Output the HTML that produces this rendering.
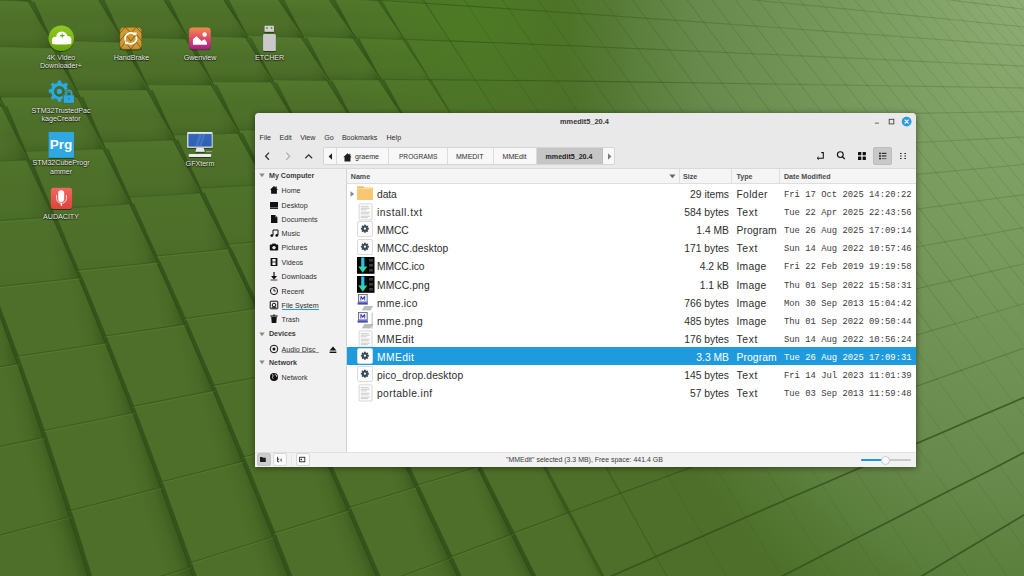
<!DOCTYPE html>
<html><head><meta charset="utf-8">
<style>
*{box-sizing:border-box;margin:0;padding:0}
html,body{width:1024px;height:576px;overflow:hidden;font-family:"Liberation Sans",sans-serif;}
body{position:relative;background:#4c7129;}
#bg{position:absolute;left:0;top:0;width:1024px;height:576px}
.dico{position:absolute}
.dl{position:absolute;width:90px;text-align:center;color:#f0f0ec;font-size:7.1px;line-height:8.6px;text-shadow:0 0 1.5px rgba(0,0,0,.9),0 1px 1px rgba(0,0,0,.7)}
#win{position:absolute;left:255.4px;top:113px;width:660.6px;height:354px;background:#e9e9e9;border-radius:3.5px 3.5px 0 0;box-shadow:0 1px 6px rgba(0,0,0,.45);overflow:hidden}
.t{position:absolute;white-space:pre;color:#2e2e2e;font-size:7.1px;line-height:10px}
.b{font-weight:bold}
#side{position:absolute;left:-0.6px;top:55px;width:90.6px;height:284px;background:#f1f1f1;border-top:1px solid #dadada}
#list{position:absolute;left:90px;top:55px;width:570px;height:284px;background:#fff;border-left:1px solid #d4d4d4;border-top:1px solid #dadada}
#hdr{position:absolute;left:0;top:0;width:570px;height:15px;background:#f5f5f5;border-bottom:1px solid #dedede}
.hs{position:absolute;top:0;width:1px;height:14px;background:#dddddd}
.ht{position:absolute;top:2.7px;white-space:pre;color:#4a4a4a;font-size:7.1px;line-height:10px;font-weight:bold}
.row{position:absolute;left:0;width:569px;height:18px}
.row.sel{background:#1f9bdd}
.row.sel .ft{color:#fff}
.ft{position:absolute;white-space:pre;color:#2e2e2e;font-size:10.3px;line-height:18px;top:2px}
.fn{left:30px}
.fs{right:187px;text-align:right}
.fty{left:389.5px}
.fd{left:437px}
.mono{font-family:"Liberation Mono",monospace;font-size:8.87px;color:#3c3c3c}
.ic{position:absolute;left:10.2px;top:1px;width:18px;height:18px}
.ic svg{position:absolute;left:0;top:0}
.exp{position:absolute;left:3px;top:6.5px}
#status{position:absolute;left:-0.6px;top:339px;width:660.6px;height:15px;background:#f2f2f2;border-top:1px solid #e0e0e0}
.pseg{position:absolute;top:0;height:17.6px;border-right:1px solid #dcdcdc;}
.si{position:absolute;left:14px;width:10px;height:10px}
.st{position:absolute;left:26.2px;white-space:pre;color:#2e2e2e;font-size:7.1px;line-height:10px}
.sh{position:absolute;left:13.6px;white-space:pre;color:#3a3a3a;font-size:7.1px;line-height:10px;font-weight:bold}
.tri{position:absolute;left:4px}
.sbtn{position:absolute;top:0.2px;width:14px;height:13px;border-radius:2px;background:#fafafa;border:1px solid #d8d8d8}
</style></head><body>
<svg id="bg" width="1024" height="576" viewBox="0 0 1024 576" style="position:absolute;left:0;top:0">
<defs>
<radialGradient id="lg1" cx="0" cy="0" r="1" gradientUnits="userSpaceOnUse" gradientTransform="translate(1030 -30) scale(470 720)">
<stop offset="0" stop-color="#8fae77"/>
<stop offset="0.4" stop-color="#789a5c"/>
<stop offset="0.72" stop-color="#67894b"/>
<stop offset="0.84" stop-color="#5f8342" stop-opacity="0.8"/>
<stop offset="0.94" stop-color="#597e3a" stop-opacity="0.4"/>
<stop offset="1" stop-color="#557a35" stop-opacity="0"/>
</radialGradient>
<radialGradient id="lg2" cx="470" cy="10" r="160" gradientUnits="userSpaceOnUse">
<stop offset="0" stop-color="#4d7d22" stop-opacity="0.8"/>
<stop offset="1" stop-color="#4d7d22" stop-opacity="0"/>
</radialGradient>
</defs>
<rect width="1024" height="576" fill="#4d6f29"/>
<rect width="1024" height="576" fill="url(#lg2)"/>
<rect width="1024" height="576" fill="url(#lg1)"/>

<defs><linearGradient id="s1" gradientUnits="userSpaceOnUse" x1="-33.6" y1="648.8" x2="-9.0" y2="640.5"><stop offset="0" stop-color="#223a0e" stop-opacity="0"/><stop offset="0.55" stop-color="#223a0e" stop-opacity="0.10"/><stop offset="1" stop-color="#223a0e" stop-opacity="0.42"/></linearGradient><linearGradient id="s2" gradientUnits="userSpaceOnUse" x1="-57.9" y1="556.0" x2="-32.8" y2="549.1"><stop offset="0" stop-color="#223a0e" stop-opacity="0"/><stop offset="0.55" stop-color="#223a0e" stop-opacity="0.10"/><stop offset="1" stop-color="#223a0e" stop-opacity="0.42"/></linearGradient><linearGradient id="s3" gradientUnits="userSpaceOnUse" x1="98.9" y1="701.8" x2="123.1" y2="692.2"><stop offset="0" stop-color="#223a0e" stop-opacity="0"/><stop offset="0.55" stop-color="#223a0e" stop-opacity="0.10"/><stop offset="1" stop-color="#223a0e" stop-opacity="0.42"/></linearGradient><linearGradient id="s4" gradientUnits="userSpaceOnUse" x1="71.4" y1="609.8" x2="96.1" y2="601.7"><stop offset="0" stop-color="#223a0e" stop-opacity="0"/><stop offset="0.55" stop-color="#223a0e" stop-opacity="0.10"/><stop offset="1" stop-color="#223a0e" stop-opacity="0.42"/></linearGradient><linearGradient id="s5" gradientUnits="userSpaceOnUse" x1="44.4" y1="523.3" x2="69.5" y2="516.7"><stop offset="0" stop-color="#223a0e" stop-opacity="0"/><stop offset="0.55" stop-color="#223a0e" stop-opacity="0.10"/><stop offset="1" stop-color="#223a0e" stop-opacity="0.42"/></linearGradient><linearGradient id="s6" gradientUnits="userSpaceOnUse" x1="17.9" y1="442.7" x2="43.3" y2="437.4"><stop offset="0" stop-color="#223a0e" stop-opacity="0"/><stop offset="0.55" stop-color="#223a0e" stop-opacity="0.10"/><stop offset="1" stop-color="#223a0e" stop-opacity="0.42"/></linearGradient><linearGradient id="s7" gradientUnits="userSpaceOnUse" x1="-8.1" y1="367.9" x2="17.6" y2="363.9"><stop offset="0" stop-color="#223a0e" stop-opacity="0"/><stop offset="0.55" stop-color="#223a0e" stop-opacity="0.10"/><stop offset="1" stop-color="#223a0e" stop-opacity="0.42"/></linearGradient><linearGradient id="s8" gradientUnits="userSpaceOnUse" x1="-33.6" y1="298.3" x2="-7.8" y2="295.5"><stop offset="0" stop-color="#223a0e" stop-opacity="0"/><stop offset="0.55" stop-color="#223a0e" stop-opacity="0.10"/><stop offset="1" stop-color="#223a0e" stop-opacity="0.42"/></linearGradient><linearGradient id="s9" gradientUnits="userSpaceOnUse" x1="-58.6" y1="233.7" x2="-32.7" y2="231.8"><stop offset="0" stop-color="#223a0e" stop-opacity="0"/><stop offset="0.55" stop-color="#223a0e" stop-opacity="0.10"/><stop offset="1" stop-color="#223a0e" stop-opacity="0.42"/></linearGradient><linearGradient id="s10" gradientUnits="userSpaceOnUse" x1="194.8" y1="661.3" x2="219.0" y2="651.9"><stop offset="0" stop-color="#223a0e" stop-opacity="0"/><stop offset="0.55" stop-color="#223a0e" stop-opacity="0.10"/><stop offset="1" stop-color="#223a0e" stop-opacity="0.42"/></linearGradient><linearGradient id="s11" gradientUnits="userSpaceOnUse" x1="164.8" y1="575.1" x2="189.5" y2="567.1"><stop offset="0" stop-color="#223a0e" stop-opacity="0"/><stop offset="0.55" stop-color="#223a0e" stop-opacity="0.10"/><stop offset="1" stop-color="#223a0e" stop-opacity="0.42"/></linearGradient><linearGradient id="s12" gradientUnits="userSpaceOnUse" x1="135.5" y1="493.8" x2="160.7" y2="487.3"><stop offset="0" stop-color="#223a0e" stop-opacity="0"/><stop offset="0.55" stop-color="#223a0e" stop-opacity="0.10"/><stop offset="1" stop-color="#223a0e" stop-opacity="0.42"/></linearGradient><linearGradient id="s13" gradientUnits="userSpaceOnUse" x1="107.2" y1="417.8" x2="132.7" y2="412.7"><stop offset="0" stop-color="#223a0e" stop-opacity="0"/><stop offset="0.55" stop-color="#223a0e" stop-opacity="0.10"/><stop offset="1" stop-color="#223a0e" stop-opacity="0.42"/></linearGradient><linearGradient id="s14" gradientUnits="userSpaceOnUse" x1="79.6" y1="346.9" x2="105.3" y2="343.0"><stop offset="0" stop-color="#223a0e" stop-opacity="0"/><stop offset="0.55" stop-color="#223a0e" stop-opacity="0.10"/><stop offset="1" stop-color="#223a0e" stop-opacity="0.42"/></linearGradient><linearGradient id="s15" gradientUnits="userSpaceOnUse" x1="52.8" y1="280.7" x2="78.7" y2="277.9"><stop offset="0" stop-color="#223a0e" stop-opacity="0"/><stop offset="0.55" stop-color="#223a0e" stop-opacity="0.10"/><stop offset="1" stop-color="#223a0e" stop-opacity="0.42"/></linearGradient><linearGradient id="s16" gradientUnits="userSpaceOnUse" x1="26.8" y1="218.8" x2="52.7" y2="217.1"><stop offset="0" stop-color="#223a0e" stop-opacity="0"/><stop offset="0.55" stop-color="#223a0e" stop-opacity="0.10"/><stop offset="1" stop-color="#223a0e" stop-opacity="0.42"/></linearGradient><linearGradient id="s17" gradientUnits="userSpaceOnUse" x1="1.4" y1="160.9" x2="27.3" y2="160.0"><stop offset="0" stop-color="#223a0e" stop-opacity="0"/><stop offset="0.55" stop-color="#223a0e" stop-opacity="0.10"/><stop offset="1" stop-color="#223a0e" stop-opacity="0.42"/></linearGradient><linearGradient id="s18" gradientUnits="userSpaceOnUse" x1="-23.5" y1="106.5" x2="2.5" y2="106.3"><stop offset="0" stop-color="#223a0e" stop-opacity="0"/><stop offset="0.55" stop-color="#223a0e" stop-opacity="0.10"/><stop offset="1" stop-color="#223a0e" stop-opacity="0.42"/></linearGradient><linearGradient id="s19" gradientUnits="userSpaceOnUse" x1="-47.7" y1="55.2" x2="-21.7" y2="55.6"><stop offset="0" stop-color="#223a0e" stop-opacity="0"/><stop offset="0.55" stop-color="#223a0e" stop-opacity="0.10"/><stop offset="1" stop-color="#223a0e" stop-opacity="0.42"/></linearGradient><linearGradient id="s20" gradientUnits="userSpaceOnUse" x1="313.0" y1="711.1" x2="336.6" y2="700.4"><stop offset="0" stop-color="#223a0e" stop-opacity="0"/><stop offset="0.55" stop-color="#223a0e" stop-opacity="0.10"/><stop offset="1" stop-color="#223a0e" stop-opacity="0.42"/></linearGradient><linearGradient id="s21" gradientUnits="userSpaceOnUse" x1="280.0" y1="625.8" x2="304.3" y2="616.5"><stop offset="0" stop-color="#223a0e" stop-opacity="0"/><stop offset="0.55" stop-color="#223a0e" stop-opacity="0.10"/><stop offset="1" stop-color="#223a0e" stop-opacity="0.42"/></linearGradient><linearGradient id="s22" gradientUnits="userSpaceOnUse" x1="248.1" y1="544.5" x2="272.9" y2="536.7"><stop offset="0" stop-color="#223a0e" stop-opacity="0"/><stop offset="0.55" stop-color="#223a0e" stop-opacity="0.10"/><stop offset="1" stop-color="#223a0e" stop-opacity="0.42"/></linearGradient><linearGradient id="s23" gradientUnits="userSpaceOnUse" x1="217.4" y1="467.7" x2="242.4" y2="461.4"><stop offset="0" stop-color="#223a0e" stop-opacity="0"/><stop offset="0.55" stop-color="#223a0e" stop-opacity="0.10"/><stop offset="1" stop-color="#223a0e" stop-opacity="0.42"/></linearGradient><linearGradient id="s24" gradientUnits="userSpaceOnUse" x1="188.2" y1="395.5" x2="213.0" y2="390.7"><stop offset="0" stop-color="#223a0e" stop-opacity="0"/><stop offset="0.55" stop-color="#223a0e" stop-opacity="0.10"/><stop offset="1" stop-color="#223a0e" stop-opacity="0.42"/></linearGradient><linearGradient id="s25" gradientUnits="userSpaceOnUse" x1="159.9" y1="327.9" x2="184.4" y2="324.4"><stop offset="0" stop-color="#223a0e" stop-opacity="0"/><stop offset="0.55" stop-color="#223a0e" stop-opacity="0.10"/><stop offset="1" stop-color="#223a0e" stop-opacity="0.42"/></linearGradient><linearGradient id="s26" gradientUnits="userSpaceOnUse" x1="132.4" y1="264.7" x2="156.7" y2="262.2"><stop offset="0" stop-color="#223a0e" stop-opacity="0"/><stop offset="0.55" stop-color="#223a0e" stop-opacity="0.10"/><stop offset="1" stop-color="#223a0e" stop-opacity="0.42"/></linearGradient><linearGradient id="s27" gradientUnits="userSpaceOnUse" x1="105.7" y1="205.4" x2="129.9" y2="203.8"><stop offset="0" stop-color="#223a0e" stop-opacity="0"/><stop offset="0.55" stop-color="#223a0e" stop-opacity="0.10"/><stop offset="1" stop-color="#223a0e" stop-opacity="0.42"/></linearGradient><linearGradient id="s28" gradientUnits="userSpaceOnUse" x1="79.7" y1="149.6" x2="103.8" y2="148.9"><stop offset="0" stop-color="#223a0e" stop-opacity="0"/><stop offset="0.55" stop-color="#223a0e" stop-opacity="0.10"/><stop offset="1" stop-color="#223a0e" stop-opacity="0.42"/></linearGradient><linearGradient id="s29" gradientUnits="userSpaceOnUse" x1="54.3" y1="97.1" x2="78.4" y2="97.1"><stop offset="0" stop-color="#223a0e" stop-opacity="0"/><stop offset="0.55" stop-color="#223a0e" stop-opacity="0.10"/><stop offset="1" stop-color="#223a0e" stop-opacity="0.42"/></linearGradient><linearGradient id="s30" gradientUnits="userSpaceOnUse" x1="29.6" y1="47.5" x2="53.6" y2="48.0"><stop offset="0" stop-color="#223a0e" stop-opacity="0"/><stop offset="0.55" stop-color="#223a0e" stop-opacity="0.10"/><stop offset="1" stop-color="#223a0e" stop-opacity="0.42"/></linearGradient><linearGradient id="s31" gradientUnits="userSpaceOnUse" x1="5.4" y1="0.4" x2="29.4" y2="1.5"><stop offset="0" stop-color="#223a0e" stop-opacity="0"/><stop offset="0.55" stop-color="#223a0e" stop-opacity="0.10"/><stop offset="1" stop-color="#223a0e" stop-opacity="0.42"/></linearGradient><linearGradient id="s32" gradientUnits="userSpaceOnUse" x1="391.0" y1="675.2" x2="414.4" y2="664.7"><stop offset="0" stop-color="#223a0e" stop-opacity="0"/><stop offset="0.55" stop-color="#223a0e" stop-opacity="0.10"/><stop offset="1" stop-color="#223a0e" stop-opacity="0.42"/></linearGradient><linearGradient id="s33" gradientUnits="userSpaceOnUse" x1="357.5" y1="594.3" x2="380.5" y2="585.5"><stop offset="0" stop-color="#223a0e" stop-opacity="0"/><stop offset="0.55" stop-color="#223a0e" stop-opacity="0.10"/><stop offset="1" stop-color="#223a0e" stop-opacity="0.42"/></linearGradient><linearGradient id="s34" gradientUnits="userSpaceOnUse" x1="325.0" y1="517.2" x2="347.8" y2="510.2"><stop offset="0" stop-color="#223a0e" stop-opacity="0"/><stop offset="0.55" stop-color="#223a0e" stop-opacity="0.10"/><stop offset="1" stop-color="#223a0e" stop-opacity="0.42"/></linearGradient><linearGradient id="s35" gradientUnits="userSpaceOnUse" x1="293.6" y1="444.4" x2="316.2" y2="438.8"><stop offset="0" stop-color="#223a0e" stop-opacity="0"/><stop offset="0.55" stop-color="#223a0e" stop-opacity="0.10"/><stop offset="1" stop-color="#223a0e" stop-opacity="0.42"/></linearGradient><linearGradient id="s36" gradientUnits="userSpaceOnUse" x1="263.3" y1="375.9" x2="285.7" y2="371.6"><stop offset="0" stop-color="#223a0e" stop-opacity="0"/><stop offset="0.55" stop-color="#223a0e" stop-opacity="0.10"/><stop offset="1" stop-color="#223a0e" stop-opacity="0.42"/></linearGradient><linearGradient id="s37" gradientUnits="userSpaceOnUse" x1="234.0" y1="311.6" x2="256.3" y2="308.4"><stop offset="0" stop-color="#223a0e" stop-opacity="0"/><stop offset="0.55" stop-color="#223a0e" stop-opacity="0.10"/><stop offset="1" stop-color="#223a0e" stop-opacity="0.42"/></linearGradient><linearGradient id="s38" gradientUnits="userSpaceOnUse" x1="205.7" y1="251.1" x2="227.9" y2="248.9"><stop offset="0" stop-color="#223a0e" stop-opacity="0"/><stop offset="0.55" stop-color="#223a0e" stop-opacity="0.10"/><stop offset="1" stop-color="#223a0e" stop-opacity="0.42"/></linearGradient><linearGradient id="s39" gradientUnits="userSpaceOnUse" x1="178.3" y1="194.2" x2="200.4" y2="192.9"><stop offset="0" stop-color="#223a0e" stop-opacity="0"/><stop offset="0.55" stop-color="#223a0e" stop-opacity="0.10"/><stop offset="1" stop-color="#223a0e" stop-opacity="0.42"/></linearGradient><linearGradient id="s40" gradientUnits="userSpaceOnUse" x1="151.7" y1="140.5" x2="173.7" y2="139.9"><stop offset="0" stop-color="#223a0e" stop-opacity="0"/><stop offset="0.55" stop-color="#223a0e" stop-opacity="0.10"/><stop offset="1" stop-color="#223a0e" stop-opacity="0.42"/></linearGradient><linearGradient id="s41" gradientUnits="userSpaceOnUse" x1="125.9" y1="89.8" x2="147.9" y2="89.9"><stop offset="0" stop-color="#223a0e" stop-opacity="0"/><stop offset="0.55" stop-color="#223a0e" stop-opacity="0.10"/><stop offset="1" stop-color="#223a0e" stop-opacity="0.42"/></linearGradient><linearGradient id="s42" gradientUnits="userSpaceOnUse" x1="100.8" y1="41.7" x2="122.7" y2="42.4"><stop offset="0" stop-color="#223a0e" stop-opacity="0"/><stop offset="0.55" stop-color="#223a0e" stop-opacity="0.10"/><stop offset="1" stop-color="#223a0e" stop-opacity="0.42"/></linearGradient><linearGradient id="s43" gradientUnits="userSpaceOnUse" x1="76.3" y1="-3.9" x2="98.2" y2="-2.8"><stop offset="0" stop-color="#223a0e" stop-opacity="0"/><stop offset="0.55" stop-color="#223a0e" stop-opacity="0.10"/><stop offset="1" stop-color="#223a0e" stop-opacity="0.42"/></linearGradient><linearGradient id="s44" gradientUnits="userSpaceOnUse" x1="463.0" y1="642.5" x2="484.0" y2="633.1"><stop offset="0" stop-color="#223a0e" stop-opacity="0"/><stop offset="0.55" stop-color="#223a0e" stop-opacity="0.10"/><stop offset="1" stop-color="#223a0e" stop-opacity="0.42"/></linearGradient><linearGradient id="s45" gradientUnits="userSpaceOnUse" x1="428.4" y1="566.1" x2="449.2" y2="558.4"><stop offset="0" stop-color="#223a0e" stop-opacity="0"/><stop offset="0.55" stop-color="#223a0e" stop-opacity="0.10"/><stop offset="1" stop-color="#223a0e" stop-opacity="0.42"/></linearGradient><linearGradient id="s46" gradientUnits="userSpaceOnUse" x1="395.0" y1="493.4" x2="415.6" y2="487.1"><stop offset="0" stop-color="#223a0e" stop-opacity="0"/><stop offset="0.55" stop-color="#223a0e" stop-opacity="0.10"/><stop offset="1" stop-color="#223a0e" stop-opacity="0.42"/></linearGradient><linearGradient id="s47" gradientUnits="userSpaceOnUse" x1="331.8" y1="359.4" x2="352.1" y2="355.6"><stop offset="0" stop-color="#223a0e" stop-opacity="0"/><stop offset="0.55" stop-color="#223a0e" stop-opacity="0.10"/><stop offset="1" stop-color="#223a0e" stop-opacity="0.42"/></linearGradient><linearGradient id="s48" gradientUnits="userSpaceOnUse" x1="301.9" y1="298.0" x2="322.2" y2="295.2"><stop offset="0" stop-color="#223a0e" stop-opacity="0"/><stop offset="0.55" stop-color="#223a0e" stop-opacity="0.10"/><stop offset="1" stop-color="#223a0e" stop-opacity="0.42"/></linearGradient><linearGradient id="s49" gradientUnits="userSpaceOnUse" x1="273.0" y1="240.2" x2="293.2" y2="238.2"><stop offset="0" stop-color="#223a0e" stop-opacity="0"/><stop offset="0.55" stop-color="#223a0e" stop-opacity="0.10"/><stop offset="1" stop-color="#223a0e" stop-opacity="0.42"/></linearGradient><linearGradient id="s50" gradientUnits="userSpaceOnUse" x1="245.1" y1="185.5" x2="265.3" y2="184.4"><stop offset="0" stop-color="#223a0e" stop-opacity="0"/><stop offset="0.55" stop-color="#223a0e" stop-opacity="0.10"/><stop offset="1" stop-color="#223a0e" stop-opacity="0.42"/></linearGradient><linearGradient id="s51" gradientUnits="userSpaceOnUse" x1="218.2" y1="133.9" x2="238.3" y2="133.4"><stop offset="0" stop-color="#223a0e" stop-opacity="0"/><stop offset="0.55" stop-color="#223a0e" stop-opacity="0.10"/><stop offset="1" stop-color="#223a0e" stop-opacity="0.42"/></linearGradient><linearGradient id="s52" gradientUnits="userSpaceOnUse" x1="192.0" y1="84.9" x2="212.2" y2="85.0"><stop offset="0" stop-color="#223a0e" stop-opacity="0"/><stop offset="0.55" stop-color="#223a0e" stop-opacity="0.10"/><stop offset="1" stop-color="#223a0e" stop-opacity="0.42"/></linearGradient><linearGradient id="s53" gradientUnits="userSpaceOnUse" x1="166.7" y1="38.3" x2="186.8" y2="39.0"><stop offset="0" stop-color="#223a0e" stop-opacity="0"/><stop offset="0.55" stop-color="#223a0e" stop-opacity="0.10"/><stop offset="1" stop-color="#223a0e" stop-opacity="0.42"/></linearGradient><linearGradient id="s54" gradientUnits="userSpaceOnUse" x1="142.0" y1="-5.9" x2="162.1" y2="-4.8"><stop offset="0" stop-color="#223a0e" stop-opacity="0"/><stop offset="0.55" stop-color="#223a0e" stop-opacity="0.10"/><stop offset="1" stop-color="#223a0e" stop-opacity="0.42"/></linearGradient><linearGradient id="s55" gradientUnits="userSpaceOnUse" x1="565.0" y1="687.8" x2="583.1" y2="678.4"><stop offset="0" stop-color="#223a0e" stop-opacity="0"/><stop offset="0.55" stop-color="#223a0e" stop-opacity="0.10"/><stop offset="1" stop-color="#223a0e" stop-opacity="0.40"/></linearGradient><linearGradient id="s56" gradientUnits="userSpaceOnUse" x1="527.7" y1="613.4" x2="546.5" y2="605.0"><stop offset="0" stop-color="#223a0e" stop-opacity="0"/><stop offset="0.55" stop-color="#223a0e" stop-opacity="0.10"/><stop offset="1" stop-color="#223a0e" stop-opacity="0.42"/></linearGradient><linearGradient id="s57" gradientUnits="userSpaceOnUse" x1="492.5" y1="541.4" x2="511.2" y2="534.4"><stop offset="0" stop-color="#223a0e" stop-opacity="0"/><stop offset="0.55" stop-color="#223a0e" stop-opacity="0.10"/><stop offset="1" stop-color="#223a0e" stop-opacity="0.42"/></linearGradient><linearGradient id="s58" gradientUnits="userSpaceOnUse" x1="458.6" y1="472.6" x2="477.3" y2="466.9"><stop offset="0" stop-color="#223a0e" stop-opacity="0"/><stop offset="0.55" stop-color="#223a0e" stop-opacity="0.10"/><stop offset="1" stop-color="#223a0e" stop-opacity="0.42"/></linearGradient><linearGradient id="s59" gradientUnits="userSpaceOnUse" x1="307.0" y1="179.0" x2="325.5" y2="178.0"><stop offset="0" stop-color="#223a0e" stop-opacity="0"/><stop offset="0.55" stop-color="#223a0e" stop-opacity="0.10"/><stop offset="1" stop-color="#223a0e" stop-opacity="0.42"/></linearGradient><linearGradient id="s60" gradientUnits="userSpaceOnUse" x1="279.8" y1="129.2" x2="298.3" y2="128.8"><stop offset="0" stop-color="#223a0e" stop-opacity="0"/><stop offset="0.55" stop-color="#223a0e" stop-opacity="0.10"/><stop offset="1" stop-color="#223a0e" stop-opacity="0.42"/></linearGradient><linearGradient id="s61" gradientUnits="userSpaceOnUse" x1="253.5" y1="81.9" x2="272.0" y2="82.1"><stop offset="0" stop-color="#223a0e" stop-opacity="0"/><stop offset="0.55" stop-color="#223a0e" stop-opacity="0.10"/><stop offset="1" stop-color="#223a0e" stop-opacity="0.42"/></linearGradient><linearGradient id="s62" gradientUnits="userSpaceOnUse" x1="228.0" y1="36.9" x2="246.5" y2="37.6"><stop offset="0" stop-color="#223a0e" stop-opacity="0"/><stop offset="0.55" stop-color="#223a0e" stop-opacity="0.10"/><stop offset="1" stop-color="#223a0e" stop-opacity="0.42"/></linearGradient><linearGradient id="s63" gradientUnits="userSpaceOnUse" x1="203.2" y1="-6.0" x2="221.7" y2="-4.9"><stop offset="0" stop-color="#223a0e" stop-opacity="0"/><stop offset="0.55" stop-color="#223a0e" stop-opacity="0.10"/><stop offset="1" stop-color="#223a0e" stop-opacity="0.42"/></linearGradient><linearGradient id="s64" gradientUnits="userSpaceOnUse" x1="631.0" y1="653.9" x2="640.5" y2="648.9"><stop offset="0" stop-color="#223a0e" stop-opacity="0"/><stop offset="0.55" stop-color="#223a0e" stop-opacity="0.06"/><stop offset="1" stop-color="#223a0e" stop-opacity="0.24"/></linearGradient><linearGradient id="s65" gradientUnits="userSpaceOnUse" x1="592.7" y1="584.5" x2="603.7" y2="579.6"><stop offset="0" stop-color="#223a0e" stop-opacity="0"/><stop offset="0.55" stop-color="#223a0e" stop-opacity="0.06"/><stop offset="1" stop-color="#223a0e" stop-opacity="0.27"/></linearGradient><linearGradient id="s66" gradientUnits="userSpaceOnUse" x1="555.7" y1="517.5" x2="568.1" y2="512.9"><stop offset="0" stop-color="#223a0e" stop-opacity="0"/><stop offset="0.55" stop-color="#223a0e" stop-opacity="0.07"/><stop offset="1" stop-color="#223a0e" stop-opacity="0.31"/></linearGradient><linearGradient id="s67" gradientUnits="userSpaceOnUse" x1="520.0" y1="453.2" x2="533.9" y2="449.0"><stop offset="0" stop-color="#223a0e" stop-opacity="0"/><stop offset="0.55" stop-color="#223a0e" stop-opacity="0.08"/><stop offset="1" stop-color="#223a0e" stop-opacity="0.34"/></linearGradient><linearGradient id="s68" gradientUnits="userSpaceOnUse" x1="337.0" y1="126.1" x2="354.1" y2="125.8"><stop offset="0" stop-color="#223a0e" stop-opacity="0"/><stop offset="0.55" stop-color="#223a0e" stop-opacity="0.10"/><stop offset="1" stop-color="#223a0e" stop-opacity="0.42"/></linearGradient><linearGradient id="s69" gradientUnits="userSpaceOnUse" x1="310.7" y1="80.4" x2="327.8" y2="80.6"><stop offset="0" stop-color="#223a0e" stop-opacity="0"/><stop offset="0.55" stop-color="#223a0e" stop-opacity="0.10"/><stop offset="1" stop-color="#223a0e" stop-opacity="0.42"/></linearGradient><linearGradient id="s70" gradientUnits="userSpaceOnUse" x1="285.1" y1="36.9" x2="302.2" y2="37.5"><stop offset="0" stop-color="#223a0e" stop-opacity="0"/><stop offset="0.55" stop-color="#223a0e" stop-opacity="0.10"/><stop offset="1" stop-color="#223a0e" stop-opacity="0.42"/></linearGradient><linearGradient id="s71" gradientUnits="userSpaceOnUse" x1="260.4" y1="-4.8" x2="277.5" y2="-3.7"><stop offset="0" stop-color="#223a0e" stop-opacity="0"/><stop offset="0.55" stop-color="#223a0e" stop-opacity="0.10"/><stop offset="1" stop-color="#223a0e" stop-opacity="0.42"/></linearGradient><linearGradient id="s72" gradientUnits="userSpaceOnUse" x1="689.9" y1="623.5" x2="692.4" y2="622.3"><stop offset="0" stop-color="#223a0e" stop-opacity="0"/><stop offset="0.55" stop-color="#223a0e" stop-opacity="0.02"/><stop offset="1" stop-color="#223a0e" stop-opacity="0.07"/></linearGradient><linearGradient id="s73" gradientUnits="userSpaceOnUse" x1="651.9" y1="558.3" x2="655.7" y2="556.7"><stop offset="0" stop-color="#223a0e" stop-opacity="0"/><stop offset="0.55" stop-color="#223a0e" stop-opacity="0.02"/><stop offset="1" stop-color="#223a0e" stop-opacity="0.10"/></linearGradient><linearGradient id="s74" gradientUnits="userSpaceOnUse" x1="615.2" y1="495.4" x2="620.3" y2="493.5"><stop offset="0" stop-color="#223a0e" stop-opacity="0"/><stop offset="0.55" stop-color="#223a0e" stop-opacity="0.03"/><stop offset="1" stop-color="#223a0e" stop-opacity="0.14"/></linearGradient><linearGradient id="s75" gradientUnits="userSpaceOnUse" x1="391.6" y1="123.9" x2="406.2" y2="123.6"><stop offset="0" stop-color="#223a0e" stop-opacity="0"/><stop offset="0.55" stop-color="#223a0e" stop-opacity="0.09"/><stop offset="1" stop-color="#223a0e" stop-opacity="0.39"/></linearGradient><linearGradient id="s76" gradientUnits="userSpaceOnUse" x1="363.9" y1="79.8" x2="379.7" y2="80.0"><stop offset="0" stop-color="#223a0e" stop-opacity="0"/><stop offset="0.55" stop-color="#223a0e" stop-opacity="0.10"/><stop offset="1" stop-color="#223a0e" stop-opacity="0.42"/></linearGradient><linearGradient id="s77" gradientUnits="userSpaceOnUse" x1="338.4" y1="37.7" x2="354.3" y2="38.3"><stop offset="0" stop-color="#223a0e" stop-opacity="0"/><stop offset="0.55" stop-color="#223a0e" stop-opacity="0.10"/><stop offset="1" stop-color="#223a0e" stop-opacity="0.42"/></linearGradient><linearGradient id="s78" gradientUnits="userSpaceOnUse" x1="313.7" y1="-2.7" x2="329.6" y2="-1.7"><stop offset="0" stop-color="#223a0e" stop-opacity="0"/><stop offset="0.55" stop-color="#223a0e" stop-opacity="0.10"/><stop offset="1" stop-color="#223a0e" stop-opacity="0.42"/></linearGradient><linearGradient id="s79" gradientUnits="userSpaceOnUse" x1="289.7" y1="-41.4" x2="305.6" y2="-40.0"><stop offset="0" stop-color="#223a0e" stop-opacity="0"/><stop offset="0.55" stop-color="#223a0e" stop-opacity="0.10"/><stop offset="1" stop-color="#223a0e" stop-opacity="0.42"/></linearGradient><linearGradient id="s80" gradientUnits="userSpaceOnUse" x1="447.6" y1="122.2" x2="455.3" y2="122.1"><stop offset="0" stop-color="#223a0e" stop-opacity="0"/><stop offset="0.55" stop-color="#223a0e" stop-opacity="0.05"/><stop offset="1" stop-color="#223a0e" stop-opacity="0.22"/></linearGradient><linearGradient id="s81" gradientUnits="userSpaceOnUse" x1="420.0" y1="79.8" x2="429.0" y2="80.0"><stop offset="0" stop-color="#223a0e" stop-opacity="0"/><stop offset="0.55" stop-color="#223a0e" stop-opacity="0.06"/><stop offset="1" stop-color="#223a0e" stop-opacity="0.26"/></linearGradient><linearGradient id="s82" gradientUnits="userSpaceOnUse" x1="393.2" y1="39.2" x2="403.5" y2="39.6"><stop offset="0" stop-color="#223a0e" stop-opacity="0"/><stop offset="0.55" stop-color="#223a0e" stop-opacity="0.07"/><stop offset="1" stop-color="#223a0e" stop-opacity="0.29"/></linearGradient><linearGradient id="s83" gradientUnits="userSpaceOnUse" x1="367.2" y1="0.1" x2="378.7" y2="0.8"><stop offset="0" stop-color="#223a0e" stop-opacity="0"/><stop offset="0.55" stop-color="#223a0e" stop-opacity="0.08"/><stop offset="1" stop-color="#223a0e" stop-opacity="0.33"/></linearGradient><linearGradient id="s84" gradientUnits="userSpaceOnUse" x1="341.9" y1="-37.6" x2="354.7" y2="-36.4"><stop offset="0" stop-color="#223a0e" stop-opacity="0"/><stop offset="0.55" stop-color="#223a0e" stop-opacity="0.09"/><stop offset="1" stop-color="#223a0e" stop-opacity="0.36"/></linearGradient><linearGradient id="s85" gradientUnits="userSpaceOnUse" x1="499.4" y1="120.9" x2="501.1" y2="120.9"><stop offset="0" stop-color="#223a0e" stop-opacity="0"/><stop offset="0.55" stop-color="#223a0e" stop-opacity="0.01"/><stop offset="1" stop-color="#223a0e" stop-opacity="0.05"/></linearGradient><linearGradient id="s86" gradientUnits="userSpaceOnUse" x1="472.1" y1="80.1" x2="475.0" y2="80.2"><stop offset="0" stop-color="#223a0e" stop-opacity="0"/><stop offset="0.55" stop-color="#223a0e" stop-opacity="0.02"/><stop offset="1" stop-color="#223a0e" stop-opacity="0.09"/></linearGradient><linearGradient id="s87" gradientUnits="userSpaceOnUse" x1="445.6" y1="40.9" x2="449.6" y2="41.1"><stop offset="0" stop-color="#223a0e" stop-opacity="0"/><stop offset="0.55" stop-color="#223a0e" stop-opacity="0.03"/><stop offset="1" stop-color="#223a0e" stop-opacity="0.12"/></linearGradient><linearGradient id="s88" gradientUnits="userSpaceOnUse" x1="419.8" y1="3.1" x2="425.0" y2="3.5"><stop offset="0" stop-color="#223a0e" stop-opacity="0"/><stop offset="0.55" stop-color="#223a0e" stop-opacity="0.04"/><stop offset="1" stop-color="#223a0e" stop-opacity="0.16"/></linearGradient><linearGradient id="s89" gradientUnits="userSpaceOnUse" x1="394.7" y1="-33.3" x2="401.2" y2="-32.7"><stop offset="0" stop-color="#223a0e" stop-opacity="0"/><stop offset="0.55" stop-color="#223a0e" stop-opacity="0.05"/><stop offset="1" stop-color="#223a0e" stop-opacity="0.20"/></linearGradient><linearGradient id="s90" gradientUnits="userSpaceOnUse" x1="443.9" y1="-29.1" x2="444.7" y2="-29.0"><stop offset="0" stop-color="#223a0e" stop-opacity="0"/><stop offset="0.55" stop-color="#223a0e" stop-opacity="0.01"/><stop offset="1" stop-color="#223a0e" stop-opacity="0.03"/></linearGradient><linearGradient id="tv" x1="0" y1="0" x2="0" y2="1"><stop offset="0" stop-color="#6a9a3a" stop-opacity="0.22"/><stop offset="0.5" stop-color="#6a9a3a" stop-opacity="0"/><stop offset="1" stop-color="#1f3a0a" stop-opacity="0.22"/></linearGradient></defs>
<polygon points="-33.6,648.8 -9.0,640.5 -32.8,549.1 -57.9,556.0" fill="url(#s1)"/>
<polygon points="-9.0,640.5 -5.4,639.2 -29.1,548.1 -32.8,549.1" fill="#33521a" fill-opacity="0.95"/>
<line x1="-9.0" y1="640.5" x2="-32.8" y2="549.1" stroke="#2c4a13" stroke-opacity="0.80" stroke-width="1"/>
<line x1="-126.4" y1="680.2" x2="-7.2" y2="639.8" stroke="#30501a" stroke-opacity="0.60" stroke-width="1.10"/>
<line x1="-126.4" y1="681.4" x2="-7.2" y2="641.0" stroke="#6a9a40" stroke-opacity="0.25" stroke-width="1"/>
<polygon points="-57.9,556.0 -32.8,549.1 -56.7,464.4 -82.1,469.8" fill="url(#s2)"/>
<polygon points="-32.8,549.1 -29.1,548.1 -52.9,463.6 -56.7,464.4" fill="#33521a" fill-opacity="0.95"/>
<line x1="-32.8" y1="549.1" x2="-56.7" y2="464.4" stroke="#2c4a13" stroke-opacity="0.80" stroke-width="1"/>
<line x1="-146.9" y1="580.2" x2="-31.0" y2="548.6" stroke="#30501a" stroke-opacity="0.60" stroke-width="1.10"/>
<line x1="-146.9" y1="581.4" x2="-31.0" y2="549.8" stroke="#6a9a40" stroke-opacity="0.25" stroke-width="1"/>
<polygon points="98.9,701.8 123.1,692.2 96.1,601.7 71.4,609.8" fill="url(#s3)"/>
<polygon points="123.1,692.2 126.6,690.8 99.7,600.5 96.1,601.7" fill="#33521a" fill-opacity="0.95"/>
<line x1="123.1" y1="692.2" x2="96.1" y2="601.7" stroke="#2c4a13" stroke-opacity="0.80" stroke-width="1"/>
<line x1="15.8" y1="734.8" x2="124.8" y2="691.5" stroke="#30501a" stroke-opacity="0.60" stroke-width="1.10"/>
<line x1="15.8" y1="736.0" x2="124.8" y2="692.7" stroke="#6a9a40" stroke-opacity="0.25" stroke-width="1"/>
<polygon points="71.4,609.8 96.1,601.7 69.5,516.7 44.4,523.3" fill="url(#s4)"/>
<polygon points="96.1,601.7 99.7,600.5 73.2,515.7 69.5,516.7" fill="#33521a" fill-opacity="0.95"/>
<line x1="96.1" y1="601.7" x2="69.5" y2="516.7" stroke="#2c4a13" stroke-opacity="0.80" stroke-width="1"/>
<line x1="-8.2" y1="636.0" x2="97.9" y2="601.1" stroke="#30501a" stroke-opacity="0.60" stroke-width="1.10"/>
<line x1="-8.2" y1="637.2" x2="97.9" y2="602.3" stroke="#6a9a40" stroke-opacity="0.25" stroke-width="1"/>
<polygon points="44.4,523.3 69.5,516.7 43.3,437.4 17.9,442.7" fill="url(#s5)"/>
<polygon points="69.5,516.7 73.2,515.7 47.1,436.7 43.3,437.4" fill="#33521a" fill-opacity="0.95"/>
<line x1="69.5" y1="516.7" x2="43.3" y2="437.4" stroke="#2c4a13" stroke-opacity="0.80" stroke-width="1"/>
<line x1="-32.3" y1="543.6" x2="71.4" y2="516.2" stroke="#30501a" stroke-opacity="0.60" stroke-width="1.10"/>
<line x1="-32.3" y1="544.8" x2="71.4" y2="517.4" stroke="#6a9a40" stroke-opacity="0.25" stroke-width="1"/>
<polygon points="17.9,442.7 43.3,437.4 17.6,363.9 -8.1,367.9" fill="url(#s6)"/>
<polygon points="43.3,437.4 47.1,436.7 21.3,363.3 17.6,363.9" fill="#33521a" fill-opacity="0.95"/>
<line x1="43.3" y1="437.4" x2="17.6" y2="363.9" stroke="#2c4a13" stroke-opacity="0.80" stroke-width="1"/>
<line x1="-56.5" y1="458.1" x2="45.2" y2="437.1" stroke="#30501a" stroke-opacity="0.60" stroke-width="1.10"/>
<line x1="-56.5" y1="459.3" x2="45.2" y2="438.3" stroke="#6a9a40" stroke-opacity="0.25" stroke-width="1"/>
<polygon points="-8.1,367.9 17.6,363.9 -7.8,295.5 -33.6,298.3" fill="url(#s7)"/>
<polygon points="17.6,363.9 21.3,363.3 -4.0,295.0 -7.8,295.5" fill="#33521a" fill-opacity="0.95"/>
<line x1="17.6" y1="363.9" x2="-7.8" y2="295.5" stroke="#2c4a13" stroke-opacity="0.80" stroke-width="1"/>
<line x1="-80.8" y1="379.2" x2="19.4" y2="363.6" stroke="#30501a" stroke-opacity="0.60" stroke-width="1.10"/>
<line x1="-80.8" y1="380.4" x2="19.4" y2="364.8" stroke="#6a9a40" stroke-opacity="0.25" stroke-width="1"/>
<polygon points="-33.6,298.3 -7.8,295.5 -32.7,231.8 -58.6,233.7" fill="url(#s8)"/>
<polygon points="-7.4,295.4 -4.4,295.1 -28.6,231.5 -32.9,231.8" fill="#33521a" fill-opacity="0.95"/>
<line x1="-7.4" y1="295.4" x2="-32.9" y2="231.8" stroke="#2c4a13" stroke-opacity="0.80" stroke-width="1"/>
<polygon points="-104.9,306.3 -5.9,295.2 -30.8,231.6 -128.9,238.8" fill="url(#tv)" fill-opacity="0.19"/>
<line x1="-104.9" y1="306.3" x2="-5.9" y2="295.2" stroke="#30501a" stroke-opacity="0.53" stroke-width="1.10"/>
<line x1="-104.9" y1="307.5" x2="-5.9" y2="296.4" stroke="#6a9a40" stroke-opacity="0.25" stroke-width="1"/>
<polygon points="-58.6,233.7 -32.7,231.8 -57.1,172.3 -83.1,173.3" fill="url(#s9)"/>
<polygon points="-31.8,231.7 -29.7,231.5 -52.7,172.1 -57.7,172.3" fill="#33521a" fill-opacity="0.95"/>
<line x1="-31.8" y1="231.7" x2="-57.7" y2="172.3" stroke="#2c4a13" stroke-opacity="0.80" stroke-width="1"/>
<polygon points="-128.9,238.8 -30.8,231.6 -55.2,172.2 -152.7,176.2" fill="url(#tv)" fill-opacity="0.44"/>
<line x1="-128.9" y1="238.8" x2="-30.8" y2="231.6" stroke="#30501a" stroke-opacity="0.44" stroke-width="1.10"/>
<line x1="-128.9" y1="240.0" x2="-30.8" y2="232.8" stroke="#6a9a40" stroke-opacity="0.25" stroke-width="1"/>
<polygon points="194.8,661.3 219.0,651.9 189.5,567.1 164.8,575.1" fill="url(#s10)"/>
<polygon points="219.0,651.9 222.6,650.5 193.1,566.0 189.5,567.1" fill="#33521a" fill-opacity="0.95"/>
<line x1="219.0" y1="651.9" x2="189.5" y2="567.1" stroke="#2c4a13" stroke-opacity="0.80" stroke-width="1"/>
<line x1="124.1" y1="688.9" x2="220.8" y2="651.2" stroke="#30501a" stroke-opacity="0.60" stroke-width="1.10"/>
<line x1="124.1" y1="690.1" x2="220.8" y2="652.4" stroke="#6a9a40" stroke-opacity="0.25" stroke-width="1"/>
<polygon points="164.8,575.1 189.5,567.1 160.7,487.3 135.5,493.8" fill="url(#s11)"/>
<polygon points="189.5,567.1 193.1,566.0 164.4,486.4 160.7,487.3" fill="#33521a" fill-opacity="0.95"/>
<line x1="189.5" y1="567.1" x2="160.7" y2="487.3" stroke="#2c4a13" stroke-opacity="0.80" stroke-width="1"/>
<line x1="96.7" y1="597.0" x2="191.3" y2="566.5" stroke="#30501a" stroke-opacity="0.60" stroke-width="1.10"/>
<line x1="96.7" y1="598.2" x2="191.3" y2="567.7" stroke="#6a9a40" stroke-opacity="0.25" stroke-width="1"/>
<polygon points="135.5,493.8 160.7,487.3 132.7,412.7 107.2,417.8" fill="url(#s12)"/>
<polygon points="160.7,487.3 164.4,486.4 136.4,411.9 132.7,412.7" fill="#33521a" fill-opacity="0.95"/>
<line x1="160.7" y1="487.3" x2="132.7" y2="412.7" stroke="#2c4a13" stroke-opacity="0.80" stroke-width="1"/>
<line x1="69.6" y1="510.8" x2="162.6" y2="486.9" stroke="#30501a" stroke-opacity="0.60" stroke-width="1.10"/>
<line x1="69.6" y1="512.0" x2="162.6" y2="488.1" stroke="#6a9a40" stroke-opacity="0.25" stroke-width="1"/>
<polygon points="107.2,417.8 132.7,412.7 105.3,343.0 79.6,346.9" fill="url(#s13)"/>
<polygon points="132.7,412.7 136.4,411.9 109.1,342.4 105.3,343.0" fill="#33521a" fill-opacity="0.95"/>
<line x1="132.7" y1="412.7" x2="105.3" y2="343.0" stroke="#2c4a13" stroke-opacity="0.80" stroke-width="1"/>
<line x1="43.0" y1="430.7" x2="134.5" y2="412.3" stroke="#30501a" stroke-opacity="0.60" stroke-width="1.10"/>
<line x1="43.0" y1="431.9" x2="134.5" y2="413.5" stroke="#6a9a40" stroke-opacity="0.25" stroke-width="1"/>
<polygon points="79.6,346.9 105.3,343.0 78.7,277.9 52.8,280.7" fill="url(#s14)"/>
<polygon points="105.3,343.0 109.1,342.4 82.5,277.5 78.7,277.9" fill="#33521a" fill-opacity="0.95"/>
<line x1="105.3" y1="343.0" x2="78.7" y2="277.9" stroke="#2c4a13" stroke-opacity="0.80" stroke-width="1"/>
<line x1="16.8" y1="356.3" x2="107.2" y2="342.7" stroke="#30501a" stroke-opacity="0.60" stroke-width="1.10"/>
<line x1="16.8" y1="357.5" x2="107.2" y2="343.9" stroke="#6a9a40" stroke-opacity="0.25" stroke-width="1"/>
<polygon points="52.8,280.7 78.7,277.9 52.7,217.1 26.8,218.8" fill="url(#s15)"/>
<polygon points="79.1,277.9 82.0,277.6 56.8,216.8 52.4,217.1" fill="#33521a" fill-opacity="0.95"/>
<line x1="79.1" y1="277.9" x2="52.4" y2="217.1" stroke="#2c4a13" stroke-opacity="0.80" stroke-width="1"/>
<polygon points="-8.9,287.3 80.6,277.7 54.6,216.9 -34.2,223.0" fill="url(#tv)" fill-opacity="0.22"/>
<line x1="-8.9" y1="287.3" x2="80.6" y2="277.7" stroke="#30501a" stroke-opacity="0.52" stroke-width="1.10"/>
<line x1="-8.9" y1="288.5" x2="80.6" y2="278.9" stroke="#6a9a40" stroke-opacity="0.25" stroke-width="1"/>
<polygon points="26.8,218.8 52.7,217.1 27.3,160.0 1.4,160.9" fill="url(#s16)"/>
<polygon points="53.6,217.0 55.6,216.9 31.8,159.8 26.7,160.0" fill="#33521a" fill-opacity="0.95"/>
<line x1="53.6" y1="217.0" x2="26.7" y2="160.0" stroke="#2c4a13" stroke-opacity="0.80" stroke-width="1"/>
<polygon points="-34.2,223.0 54.6,216.9 29.2,159.9 -59.1,163.1" fill="url(#tv)" fill-opacity="0.47"/>
<line x1="-34.2" y1="223.0" x2="54.6" y2="216.9" stroke="#30501a" stroke-opacity="0.43" stroke-width="1.10"/>
<line x1="-34.2" y1="224.2" x2="54.6" y2="218.1" stroke="#6a9a40" stroke-opacity="0.25" stroke-width="1"/>
<polygon points="1.4,160.9 27.3,160.0 2.5,106.3 -23.5,106.5" fill="url(#s17)"/>
<polygon points="28.7,159.9 29.8,159.9 7.3,106.2 1.6,106.3" fill="#33521a" fill-opacity="0.95"/>
<line x1="28.7" y1="159.9" x2="1.6" y2="106.3" stroke="#2c4a13" stroke-opacity="0.80" stroke-width="1"/>
<polygon points="-59.1,163.1 29.2,159.9 4.4,106.3 -83.5,106.9" fill="url(#tv)" fill-opacity="0.72"/>
<line x1="-59.1" y1="163.1" x2="29.2" y2="159.9" stroke="#30501a" stroke-opacity="0.34" stroke-width="1.10"/>
<polygon points="-23.5,106.5 2.5,106.3 -21.7,55.6 -47.7,55.2" fill="url(#s18)"/>
<polygon points="4.4,106.3 4.5,106.3 -16.6,55.7 -23.0,55.6" fill="#33521a" fill-opacity="0.95"/>
<line x1="4.4" y1="106.3" x2="-23.0" y2="55.6" stroke="#2c4a13" stroke-opacity="0.80" stroke-width="1"/>
<polygon points="-83.5,106.9 4.4,106.3 -19.8,55.6 -107.6,54.1" fill="url(#tv)" fill-opacity="0.97"/>
<line x1="-83.5" y1="106.9" x2="4.4" y2="106.3" stroke="#30501a" stroke-opacity="0.25" stroke-width="1.10"/>
<polygon points="-47.7,55.2 -21.7,55.6 -45.5,7.7 -71.5,6.6" fill="url(#s19)"/>
<polygon points="-19.8,55.6 -19.8,55.6 -40.4,7.9 -46.9,7.6" fill="#33521a" fill-opacity="0.95"/>
<line x1="-19.8" y1="55.6" x2="-46.9" y2="7.6" stroke="#2c4a13" stroke-opacity="0.80" stroke-width="1"/>
<polygon points="-107.6,54.1 -19.8,55.6 -43.6,7.7 -131.3,4.3" fill="url(#tv)" fill-opacity="1.00"/>
<line x1="-107.6" y1="54.1" x2="-19.8" y2="55.6" stroke="#30501a" stroke-opacity="0.24" stroke-width="1.10"/>
<polygon points="313.0,711.1 336.6,700.4 304.3,616.5 280.0,625.8" fill="url(#s20)"/>
<polygon points="336.6,700.4 340.1,698.8 307.8,615.2 304.3,616.5" fill="#33521a" fill-opacity="0.95"/>
<line x1="336.6" y1="700.4" x2="304.3" y2="616.5" stroke="#2c4a13" stroke-opacity="0.80" stroke-width="1"/>
<line x1="250.7" y1="739.4" x2="338.4" y2="699.6" stroke="#30501a" stroke-opacity="0.60" stroke-width="1.10"/>
<line x1="250.7" y1="740.6" x2="338.4" y2="700.8" stroke="#6a9a40" stroke-opacity="0.25" stroke-width="1"/>
<polygon points="280.0,625.8 304.3,616.5 272.9,536.7 248.1,544.5" fill="url(#s21)"/>
<polygon points="304.3,616.5 307.8,615.2 276.5,535.6 272.9,536.7" fill="#33521a" fill-opacity="0.95"/>
<line x1="304.3" y1="616.5" x2="272.9" y2="536.7" stroke="#2c4a13" stroke-opacity="0.80" stroke-width="1"/>
<line x1="220.0" y1="648.9" x2="306.1" y2="615.8" stroke="#30501a" stroke-opacity="0.60" stroke-width="1.10"/>
<line x1="220.0" y1="650.1" x2="306.1" y2="617.0" stroke="#6a9a40" stroke-opacity="0.25" stroke-width="1"/>
<polygon points="248.1,544.5 272.9,536.7 242.4,461.4 217.2,467.7" fill="url(#s22)"/>
<polygon points="272.9,536.7 276.5,535.6 246.1,460.5 242.4,461.4" fill="#33521a" fill-opacity="0.95"/>
<line x1="272.9" y1="536.7" x2="242.4" y2="461.4" stroke="#2c4a13" stroke-opacity="0.80" stroke-width="1"/>
<line x1="190.0" y1="562.8" x2="274.7" y2="536.1" stroke="#30501a" stroke-opacity="0.60" stroke-width="1.10"/>
<line x1="190.0" y1="564.0" x2="274.7" y2="537.3" stroke="#6a9a40" stroke-opacity="0.25" stroke-width="1"/>
<polygon points="217.4,467.7 242.4,461.4 213.0,390.7 187.6,395.6" fill="url(#s23)"/>
<polygon points="242.4,461.4 246.1,460.5 216.7,389.9 213.0,390.7" fill="#33521a" fill-opacity="0.95"/>
<line x1="242.4" y1="461.4" x2="213.0" y2="390.7" stroke="#2c4a13" stroke-opacity="0.80" stroke-width="1"/>
<line x1="160.8" y1="482.0" x2="244.3" y2="460.9" stroke="#30501a" stroke-opacity="0.60" stroke-width="1.10"/>
<line x1="160.8" y1="483.2" x2="244.3" y2="462.1" stroke="#6a9a40" stroke-opacity="0.25" stroke-width="1"/>
<polygon points="188.2,395.5 213.0,390.7 184.4,324.4 159.4,328.0" fill="url(#s24)"/>
<polygon points="213.0,390.7 216.7,389.9 188.2,323.8 184.4,324.4" fill="#33521a" fill-opacity="0.95"/>
<line x1="213.0" y1="390.7" x2="184.4" y2="324.4" stroke="#2c4a13" stroke-opacity="0.80" stroke-width="1"/>
<line x1="132.3" y1="406.4" x2="214.8" y2="390.3" stroke="#30501a" stroke-opacity="0.60" stroke-width="1.10"/>
<line x1="132.3" y1="407.6" x2="214.8" y2="391.5" stroke="#6a9a40" stroke-opacity="0.25" stroke-width="1"/>
<polygon points="159.9,327.9 184.4,324.4 156.7,262.2 132.1,264.7" fill="url(#s25)"/>
<polygon points="184.4,324.4 188.2,323.8 160.5,261.8 156.7,262.2" fill="#33521a" fill-opacity="0.95"/>
<line x1="184.4" y1="324.4" x2="156.7" y2="262.2" stroke="#2c4a13" stroke-opacity="0.80" stroke-width="1"/>
<polygon points="104.5,336.0 186.3,324.1 158.6,262.0 77.4,270.3" fill="url(#tv)" fill-opacity="0.00"/>
<line x1="104.5" y1="336.0" x2="186.3" y2="324.1" stroke="#30501a" stroke-opacity="0.60" stroke-width="1.10"/>
<line x1="104.5" y1="337.2" x2="186.3" y2="325.3" stroke="#6a9a40" stroke-opacity="0.25" stroke-width="1"/>
<polygon points="132.4,264.7 156.7,262.2 129.9,203.8 105.4,205.4" fill="url(#s26)"/>
<polygon points="157.2,262.1 160.0,261.9 134.0,203.6 129.5,203.8" fill="#33521a" fill-opacity="0.95"/>
<line x1="157.2" y1="262.1" x2="129.5" y2="203.8" stroke="#2c4a13" stroke-opacity="0.80" stroke-width="1"/>
<polygon points="77.4,270.3 158.6,262.0 131.8,203.7 51.1,208.9" fill="url(#tv)" fill-opacity="0.26"/>
<line x1="77.4" y1="270.3" x2="158.6" y2="262.0" stroke="#30501a" stroke-opacity="0.51" stroke-width="1.10"/>
<line x1="77.4" y1="271.5" x2="158.6" y2="263.2" stroke="#6a9a40" stroke-opacity="0.25" stroke-width="1"/>
<polygon points="105.7,205.4 129.9,203.8 103.8,148.9 79.5,149.6" fill="url(#s27)"/>
<polygon points="130.8,203.8 132.7,203.6 108.3,148.8 103.1,148.9" fill="#33521a" fill-opacity="0.95"/>
<line x1="130.8" y1="203.8" x2="103.1" y2="148.9" stroke="#2c4a13" stroke-opacity="0.80" stroke-width="1"/>
<polygon points="51.1,208.9 131.8,203.7 105.7,148.8 25.3,151.3" fill="url(#tv)" fill-opacity="0.51"/>
<line x1="51.1" y1="208.9" x2="131.8" y2="203.7" stroke="#30501a" stroke-opacity="0.42" stroke-width="1.10"/>
<polygon points="79.7,149.6 103.8,148.9 78.4,97.1 54.3,97.1" fill="url(#s28)"/>
<polygon points="105.2,148.8 106.1,148.8 83.2,97.1 77.3,97.1" fill="#33521a" fill-opacity="0.95"/>
<line x1="105.2" y1="148.8" x2="77.3" y2="97.1" stroke="#2c4a13" stroke-opacity="0.80" stroke-width="1"/>
<polygon points="25.3,151.3 105.7,148.8 80.3,97.1 0.2,97.2" fill="url(#tv)" fill-opacity="0.77"/>
<line x1="25.3" y1="151.3" x2="105.7" y2="148.8" stroke="#30501a" stroke-opacity="0.32" stroke-width="1.10"/>
<polygon points="54.3,97.1 78.4,97.1 53.6,48.0 29.6,47.5" fill="url(#s29)"/>
<polygon points="80.3,97.1 80.3,97.1 58.7,48.1 52.2,48.0" fill="#33521a" fill-opacity="0.95"/>
<line x1="80.3" y1="97.1" x2="52.2" y2="48.0" stroke="#2c4a13" stroke-opacity="0.80" stroke-width="1"/>
<polygon points="0.2,97.2 80.3,97.1 55.5,48.1 -24.5,46.2" fill="url(#tv)" fill-opacity="1.00"/>
<line x1="0.2" y1="97.2" x2="80.3" y2="97.1" stroke="#30501a" stroke-opacity="0.24" stroke-width="1.10"/>
<polygon points="29.6,47.5 53.6,48.0 29.4,1.5 5.4,0.4" fill="url(#s30)"/>
<polygon points="55.5,48.1 55.5,48.1 34.6,1.7 28.1,1.4" fill="#33521a" fill-opacity="0.95"/>
<line x1="55.5" y1="48.1" x2="28.1" y2="1.4" stroke="#2c4a13" stroke-opacity="0.80" stroke-width="1"/>
<polygon points="-24.5,46.2 55.5,48.1 31.3,1.6 -48.6,-2.1" fill="url(#tv)" fill-opacity="1.00"/>
<line x1="-24.5" y1="46.2" x2="55.5" y2="48.1" stroke="#30501a" stroke-opacity="0.24" stroke-width="1.10"/>
<polygon points="5.4,0.4 29.4,1.5 5.8,-42.8 -18.2,-44.4" fill="url(#s31)"/>
<polygon points="31.3,1.6 31.3,1.6 10.9,-42.4 4.4,-42.9" fill="#33521a" fill-opacity="0.95"/>
<line x1="31.3" y1="1.6" x2="4.4" y2="-42.9" stroke="#2c4a13" stroke-opacity="0.80" stroke-width="1"/>
<polygon points="-48.6,-2.1 31.3,1.6 7.7,-42.6 -72.3,-47.9" fill="url(#tv)" fill-opacity="1.00"/>
<line x1="-48.6" y1="-2.1" x2="31.3" y2="1.6" stroke="#30501a" stroke-opacity="0.24" stroke-width="1.10"/>
<polygon points="391.0,675.2 414.4,664.7 380.5,585.5 356.5,594.6" fill="url(#s32)"/>
<polygon points="414.4,664.7 417.9,663.1 384.1,584.2 380.5,585.5" fill="#33521a" fill-opacity="0.95"/>
<line x1="414.4" y1="664.7" x2="380.5" y2="585.5" stroke="#2c4a13" stroke-opacity="0.80" stroke-width="1"/>
<line x1="338.1" y1="699.0" x2="416.1" y2="663.9" stroke="#30501a" stroke-opacity="0.60" stroke-width="1.10"/>
<line x1="338.1" y1="700.2" x2="416.1" y2="665.1" stroke="#6a9a40" stroke-opacity="0.25" stroke-width="1"/>
<polygon points="357.5,594.3 380.5,585.5 347.8,510.2 324.2,517.5" fill="url(#s33)"/>
<polygon points="380.5,585.5 384.1,584.2 351.4,509.0 347.8,510.2" fill="#33521a" fill-opacity="0.95"/>
<line x1="380.5" y1="585.5" x2="347.8" y2="510.2" stroke="#2c4a13" stroke-opacity="0.80" stroke-width="1"/>
<line x1="305.3" y1="614.0" x2="382.3" y2="584.9" stroke="#30501a" stroke-opacity="0.60" stroke-width="1.10"/>
<line x1="305.3" y1="615.2" x2="382.3" y2="586.1" stroke="#6a9a40" stroke-opacity="0.25" stroke-width="1"/>
<polygon points="325.0,517.2 347.8,510.2 316.2,438.8 293.0,444.6" fill="url(#s34)"/>
<polygon points="347.8,510.2 351.4,509.0 319.9,437.9 316.2,438.8" fill="#33521a" fill-opacity="0.95"/>
<line x1="347.8" y1="510.2" x2="316.2" y2="438.8" stroke="#2c4a13" stroke-opacity="0.80" stroke-width="1"/>
<line x1="273.5" y1="533.2" x2="349.6" y2="509.6" stroke="#30501a" stroke-opacity="0.60" stroke-width="1.10"/>
<line x1="273.5" y1="534.4" x2="349.6" y2="510.8" stroke="#6a9a40" stroke-opacity="0.25" stroke-width="1"/>
<polygon points="293.6,444.4 316.2,438.8 285.7,371.6 262.8,376.0" fill="url(#s35)"/>
<polygon points="316.2,438.8 319.9,437.9 289.4,370.9 285.7,371.6" fill="#33521a" fill-opacity="0.95"/>
<line x1="316.2" y1="438.8" x2="285.7" y2="371.6" stroke="#2c4a13" stroke-opacity="0.80" stroke-width="1"/>
<line x1="242.7" y1="457.0" x2="318.1" y2="438.4" stroke="#30501a" stroke-opacity="0.60" stroke-width="1.10"/>
<line x1="242.7" y1="458.2" x2="318.1" y2="439.6" stroke="#6a9a40" stroke-opacity="0.25" stroke-width="1"/>
<polygon points="263.3,375.9 285.7,371.6 256.3,308.4 233.7,311.6" fill="url(#s36)"/>
<polygon points="285.7,371.6 289.4,370.9 260.1,307.9 256.3,308.4" fill="#33521a" fill-opacity="0.95"/>
<line x1="285.7" y1="371.6" x2="256.3" y2="308.4" stroke="#2c4a13" stroke-opacity="0.80" stroke-width="1"/>
<line x1="212.8" y1="385.6" x2="287.6" y2="371.3" stroke="#30501a" stroke-opacity="0.60" stroke-width="1.10"/>
<line x1="212.8" y1="386.8" x2="287.6" y2="372.5" stroke="#6a9a40" stroke-opacity="0.25" stroke-width="1"/>
<polygon points="234.0,311.6 256.3,308.4 227.9,248.9 205.5,251.1" fill="url(#s37)"/>
<polygon points="256.3,308.4 260.0,307.9 231.7,248.6 227.8,248.9" fill="#33521a" fill-opacity="0.95"/>
<line x1="256.3" y1="308.4" x2="227.8" y2="248.9" stroke="#2c4a13" stroke-opacity="0.80" stroke-width="1"/>
<polygon points="183.9,318.7 258.2,308.2 229.8,248.7 155.9,256.0" fill="url(#tv)" fill-opacity="0.03"/>
<line x1="183.9" y1="318.7" x2="258.2" y2="308.2" stroke="#30501a" stroke-opacity="0.59" stroke-width="1.10"/>
<line x1="183.9" y1="319.9" x2="258.2" y2="309.4" stroke="#6a9a40" stroke-opacity="0.25" stroke-width="1"/>
<polygon points="205.7,251.1 227.9,248.9 200.4,192.9 178.1,194.2" fill="url(#s38)"/>
<polygon points="228.4,248.9 231.1,248.6 204.5,192.6 200.0,192.9" fill="#33521a" fill-opacity="0.95"/>
<line x1="228.4" y1="248.9" x2="200.0" y2="192.9" stroke="#2c4a13" stroke-opacity="0.80" stroke-width="1"/>
<polygon points="155.9,256.0 229.8,248.7 202.3,192.8 128.7,197.2" fill="url(#tv)" fill-opacity="0.28"/>
<line x1="155.9" y1="256.0" x2="229.8" y2="248.7" stroke="#30501a" stroke-opacity="0.50" stroke-width="1.10"/>
<line x1="155.9" y1="257.2" x2="229.8" y2="249.9" stroke="#6a9a40" stroke-opacity="0.25" stroke-width="1"/>
<polygon points="178.3,194.2 200.4,192.9 173.7,139.9 151.6,140.5" fill="url(#s39)"/>
<polygon points="201.4,192.8 203.1,192.7 178.2,139.8 173.0,140.0" fill="#33521a" fill-opacity="0.95"/>
<line x1="201.4" y1="192.8" x2="173.0" y2="140.0" stroke="#2c4a13" stroke-opacity="0.80" stroke-width="1"/>
<polygon points="128.7,197.2 202.3,192.8 175.6,139.9 102.3,141.9" fill="url(#tv)" fill-opacity="0.54"/>
<line x1="128.7" y1="197.2" x2="202.3" y2="192.8" stroke="#30501a" stroke-opacity="0.40" stroke-width="1.10"/>
<polygon points="151.7,140.5 173.7,139.9 147.9,89.9 125.8,89.8" fill="url(#s40)"/>
<polygon points="175.2,139.9 176.0,139.9 152.7,89.9 146.8,89.9" fill="#33521a" fill-opacity="0.95"/>
<line x1="175.2" y1="139.9" x2="146.8" y2="89.9" stroke="#2c4a13" stroke-opacity="0.80" stroke-width="1"/>
<polygon points="102.3,141.9 175.6,139.9 149.8,89.9 76.6,89.7" fill="url(#tv)" fill-opacity="0.80"/>
<line x1="102.3" y1="141.9" x2="175.6" y2="139.9" stroke="#30501a" stroke-opacity="0.31" stroke-width="1.10"/>
<polygon points="125.9,89.8 147.9,89.9 122.7,42.4 100.8,41.7" fill="url(#s41)"/>
<polygon points="149.8,89.9 149.8,89.9 127.9,42.5 121.4,42.3" fill="#33521a" fill-opacity="0.95"/>
<line x1="149.8" y1="89.9" x2="121.4" y2="42.3" stroke="#2c4a13" stroke-opacity="0.80" stroke-width="1"/>
<polygon points="76.6,89.7 149.8,89.9 124.6,42.4 51.5,40.3" fill="url(#tv)" fill-opacity="1.00"/>
<line x1="76.6" y1="89.7" x2="149.8" y2="89.9" stroke="#30501a" stroke-opacity="0.24" stroke-width="1.10"/>
<polygon points="100.8,41.7 122.7,42.4 98.2,-2.8 76.3,-3.9" fill="url(#s42)"/>
<polygon points="124.6,42.4 124.6,42.4 103.4,-2.5 96.9,-2.9" fill="#33521a" fill-opacity="0.95"/>
<line x1="124.6" y1="42.4" x2="96.9" y2="-2.9" stroke="#2c4a13" stroke-opacity="0.80" stroke-width="1"/>
<polygon points="51.5,40.3 124.6,42.4 100.1,-2.7 27.1,-6.5" fill="url(#tv)" fill-opacity="1.00"/>
<line x1="51.5" y1="40.3" x2="124.6" y2="42.4" stroke="#30501a" stroke-opacity="0.24" stroke-width="1.10"/>
<polygon points="76.3,-3.9 98.2,-2.8 74.3,-45.8 52.5,-47.4" fill="url(#s43)"/>
<polygon points="100.1,-2.7 100.1,-2.7 79.5,-45.5 73.0,-45.9" fill="#33521a" fill-opacity="0.95"/>
<line x1="100.1" y1="-2.7" x2="73.0" y2="-45.9" stroke="#2c4a13" stroke-opacity="0.80" stroke-width="1"/>
<polygon points="27.1,-6.5 100.1,-2.7 76.2,-45.7 3.1,-51.0" fill="url(#tv)" fill-opacity="1.00"/>
<line x1="27.1" y1="-6.5" x2="100.1" y2="-2.7" stroke="#30501a" stroke-opacity="0.24" stroke-width="1.10"/>
<polygon points="463.0,642.5 484.0,633.1 449.2,558.4 427.7,566.4" fill="url(#s44)"/>
<polygon points="484.0,633.1 487.4,631.6 452.7,557.0 449.2,558.4" fill="#33521a" fill-opacity="0.95"/>
<line x1="484.0" y1="633.1" x2="449.2" y2="558.4" stroke="#2c4a13" stroke-opacity="0.80" stroke-width="1"/>
<line x1="415.9" y1="663.5" x2="485.7" y2="632.3" stroke="#30501a" stroke-opacity="0.60" stroke-width="1.10"/>
<line x1="415.9" y1="664.7" x2="485.7" y2="633.5" stroke="#6a9a40" stroke-opacity="0.25" stroke-width="1"/>
<polygon points="428.4,566.1 449.2,558.4 415.6,487.1 394.4,493.6" fill="url(#s45)"/>
<polygon points="449.2,558.4 452.7,557.0 419.2,486.0 415.6,487.1" fill="#33521a" fill-opacity="0.95"/>
<line x1="449.2" y1="558.4" x2="415.6" y2="487.1" stroke="#2c4a13" stroke-opacity="0.80" stroke-width="1"/>
<line x1="381.8" y1="583.6" x2="450.9" y2="557.7" stroke="#30501a" stroke-opacity="0.60" stroke-width="1.10"/>
<line x1="381.8" y1="584.8" x2="450.9" y2="558.9" stroke="#6a9a40" stroke-opacity="0.25" stroke-width="1"/>
<polygon points="395.0,493.4 415.6,487.1 383.3,419.5 362.3,424.6" fill="url(#s46)"/>
<polygon points="415.6,487.1 419.2,486.0 387.0,418.6 383.3,419.5" fill="#33521a" fill-opacity="0.95"/>
<line x1="415.6" y1="487.1" x2="383.3" y2="419.5" stroke="#2c4a13" stroke-opacity="0.80" stroke-width="1"/>
<line x1="348.7" y1="507.5" x2="417.4" y2="486.5" stroke="#30501a" stroke-opacity="0.60" stroke-width="1.10"/>
<line x1="348.7" y1="508.7" x2="417.4" y2="487.7" stroke="#6a9a40" stroke-opacity="0.25" stroke-width="1"/>
<polygon points="331.8,359.4 352.1,355.6 322.2,295.2 301.6,298.1" fill="url(#s47)"/>
<polygon points="352.1,355.6 355.9,354.9 325.9,294.7 322.2,295.2" fill="#33521a" fill-opacity="0.95"/>
<line x1="352.1" y1="355.6" x2="322.2" y2="295.2" stroke="#2c4a13" stroke-opacity="0.80" stroke-width="1"/>
<line x1="286.1" y1="368.0" x2="354.0" y2="355.2" stroke="#30501a" stroke-opacity="0.60" stroke-width="1.10"/>
<line x1="286.1" y1="369.2" x2="354.0" y2="356.4" stroke="#6a9a40" stroke-opacity="0.25" stroke-width="1"/>
<polygon points="301.9,298.0 322.2,295.2 293.2,238.2 272.8,240.2" fill="url(#s48)"/>
<polygon points="322.2,295.2 325.8,294.7 297.1,237.9 293.2,238.2" fill="#33521a" fill-opacity="0.95"/>
<line x1="322.2" y1="295.2" x2="293.2" y2="238.2" stroke="#2c4a13" stroke-opacity="0.80" stroke-width="1"/>
<polygon points="256.4,304.3 324.0,295.0 295.1,238.1 227.7,244.5" fill="url(#tv)" fill-opacity="0.04"/>
<line x1="256.4" y1="304.3" x2="324.0" y2="295.0" stroke="#30501a" stroke-opacity="0.58" stroke-width="1.10"/>
<line x1="256.4" y1="305.5" x2="324.0" y2="296.2" stroke="#6a9a40" stroke-opacity="0.25" stroke-width="1"/>
<polygon points="273.0,240.2 293.2,238.2 265.3,184.4 245.0,185.5" fill="url(#s49)"/>
<polygon points="293.8,238.2 296.4,237.9 269.5,184.1 264.9,184.4" fill="#33521a" fill-opacity="0.95"/>
<line x1="293.8" y1="238.2" x2="264.9" y2="184.4" stroke="#2c4a13" stroke-opacity="0.80" stroke-width="1"/>
<polygon points="227.7,244.5 295.1,238.1 267.2,184.3 199.9,188.1" fill="url(#tv)" fill-opacity="0.31"/>
<line x1="227.7" y1="244.5" x2="295.1" y2="238.1" stroke="#30501a" stroke-opacity="0.49" stroke-width="1.10"/>
<line x1="227.7" y1="245.7" x2="295.1" y2="239.3" stroke="#6a9a40" stroke-opacity="0.25" stroke-width="1"/>
<polygon points="245.1,185.5 265.3,184.4 238.3,133.4 218.1,133.9" fill="url(#s50)"/>
<polygon points="266.4,184.3 268.0,184.2 242.9,133.3 237.6,133.4" fill="#33521a" fill-opacity="0.95"/>
<line x1="266.4" y1="184.3" x2="237.6" y2="133.4" stroke="#2c4a13" stroke-opacity="0.80" stroke-width="1"/>
<polygon points="199.9,188.1 267.2,184.3 240.2,133.3 173.1,134.9" fill="url(#tv)" fill-opacity="0.57"/>
<line x1="199.9" y1="188.1" x2="267.2" y2="184.3" stroke="#30501a" stroke-opacity="0.40" stroke-width="1.10"/>
<polygon points="218.2,133.9 238.3,133.4 212.2,85.0 192.0,84.9" fill="url(#s51)"/>
<polygon points="239.9,133.3 240.5,133.3 217.1,85.0 211.0,85.0" fill="#33521a" fill-opacity="0.95"/>
<line x1="239.9" y1="133.3" x2="211.0" y2="85.0" stroke="#2c4a13" stroke-opacity="0.80" stroke-width="1"/>
<polygon points="173.1,134.9 240.2,133.3 214.1,85.0 147.0,84.6" fill="url(#tv)" fill-opacity="0.83"/>
<line x1="173.1" y1="134.9" x2="240.2" y2="133.3" stroke="#30501a" stroke-opacity="0.30" stroke-width="1.10"/>
<polygon points="192.0,84.9 212.2,85.0 186.8,39.0 166.7,38.4" fill="url(#s52)"/>
<polygon points="214.1,85.0 214.1,85.0 191.9,39.2 185.4,39.0" fill="#33521a" fill-opacity="0.95"/>
<line x1="214.1" y1="85.0" x2="185.4" y2="39.0" stroke="#2c4a13" stroke-opacity="0.80" stroke-width="1"/>
<polygon points="147.0,84.6 214.1,85.0 188.7,39.1 121.6,36.9" fill="url(#tv)" fill-opacity="1.00"/>
<line x1="147.0" y1="84.6" x2="214.1" y2="85.0" stroke="#30501a" stroke-opacity="0.24" stroke-width="1.10"/>
<polygon points="166.7,38.3 186.8,39.0 162.1,-4.8 142.0,-5.9" fill="url(#s53)"/>
<polygon points="188.7,39.1 188.7,39.1 167.3,-4.5 160.8,-4.9" fill="#33521a" fill-opacity="0.95"/>
<line x1="188.7" y1="39.1" x2="160.8" y2="-4.9" stroke="#2c4a13" stroke-opacity="0.80" stroke-width="1"/>
<polygon points="121.6,36.9 188.7,39.1 164.0,-4.7 96.9,-8.5" fill="url(#tv)" fill-opacity="1.00"/>
<line x1="121.6" y1="36.9" x2="188.7" y2="39.1" stroke="#30501a" stroke-opacity="0.24" stroke-width="1.10"/>
<polygon points="142.0,-5.9 162.1,-4.8 138.1,-46.7 118.0,-48.2" fill="url(#s54)"/>
<polygon points="164.0,-4.7 164.0,-4.7 143.2,-46.3 136.8,-46.8" fill="#33521a" fill-opacity="0.95"/>
<line x1="164.0" y1="-4.7" x2="136.8" y2="-46.8" stroke="#2c4a13" stroke-opacity="0.80" stroke-width="1"/>
<polygon points="96.9,-8.5 164.0,-4.7 140.0,-46.5 72.9,-51.7" fill="url(#tv)" fill-opacity="1.00"/>
<line x1="96.9" y1="-8.5" x2="164.0" y2="-4.7" stroke="#30501a" stroke-opacity="0.24" stroke-width="1.10"/>
<polygon points="565.0,687.8 583.1,678.4 546.6,605.0 527.9,613.3" fill="url(#s55)"/>
<polygon points="583.1,678.4 586.3,676.7 549.9,603.5 546.6,605.0" fill="#33521a" fill-opacity="0.91"/>
<line x1="583.1" y1="678.4" x2="546.6" y2="605.0" stroke="#2c4a13" stroke-opacity="0.77" stroke-width="1"/>
<line x1="521.8" y1="710.2" x2="584.7" y2="677.6" stroke="#30501a" stroke-opacity="0.80" stroke-width="1.70"/>
<line x1="521.8" y1="711.4" x2="584.7" y2="678.8" stroke="#6a9a40" stroke-opacity="0.24" stroke-width="1"/>
<line x1="584.7" y1="677.6" x2="548.3" y2="604.3" stroke="#30501a" stroke-opacity="0.01" stroke-width="0.9"/>
<polygon points="527.7,613.4 546.5,605.0 511.2,534.4 491.9,541.6" fill="url(#s56)"/>
<polygon points="546.5,605.0 550.0,603.5 514.8,533.1 511.2,534.4" fill="#33521a" fill-opacity="0.95"/>
<line x1="546.5" y1="605.0" x2="511.2" y2="534.4" stroke="#2c4a13" stroke-opacity="0.80" stroke-width="1"/>
<line x1="485.6" y1="632.1" x2="548.3" y2="604.3" stroke="#30501a" stroke-opacity="0.80" stroke-width="1.69"/>
<line x1="485.6" y1="633.3" x2="548.3" y2="605.5" stroke="#6a9a40" stroke-opacity="0.25" stroke-width="1"/>
<polygon points="492.5,541.4 511.2,534.4 477.3,466.9 458.1,472.7" fill="url(#s57)"/>
<polygon points="511.2,534.4 514.8,533.1 480.9,465.8 477.3,466.9" fill="#33521a" fill-opacity="0.95"/>
<line x1="511.2" y1="534.4" x2="477.3" y2="466.9" stroke="#2c4a13" stroke-opacity="0.80" stroke-width="1"/>
<line x1="450.6" y1="556.9" x2="513.0" y2="533.8" stroke="#30501a" stroke-opacity="0.62" stroke-width="1.16"/>
<line x1="450.6" y1="558.1" x2="513.0" y2="535.0" stroke="#6a9a40" stroke-opacity="0.25" stroke-width="1"/>
<polygon points="458.6,472.6 477.3,466.9 444.5,402.8 425.6,407.3" fill="url(#s58)"/>
<polygon points="477.3,466.9 480.9,465.8 448.2,401.9 444.5,402.8" fill="#33521a" fill-opacity="0.95"/>
<line x1="477.3" y1="466.9" x2="444.5" y2="402.8" stroke="#2c4a13" stroke-opacity="0.80" stroke-width="1"/>
<line x1="416.8" y1="485.2" x2="479.1" y2="466.4" stroke="#30501a" stroke-opacity="0.60" stroke-width="1.10"/>
<line x1="416.8" y1="486.4" x2="479.1" y2="467.6" stroke="#6a9a40" stroke-opacity="0.25" stroke-width="1"/>
<polygon points="307.0,179.0 325.5,178.0 298.3,128.8 279.8,129.2" fill="url(#s59)"/>
<polygon points="326.6,177.9 328.2,177.8 302.9,128.7 297.5,128.9" fill="#33521a" fill-opacity="0.95"/>
<line x1="326.6" y1="177.9" x2="297.5" y2="128.9" stroke="#2c4a13" stroke-opacity="0.80" stroke-width="1"/>
<polygon points="265.6,181.3 327.4,177.9 300.2,128.8 238.5,130.1" fill="url(#tv)" fill-opacity="0.58"/>
<line x1="265.6" y1="181.3" x2="327.4" y2="177.9" stroke="#30501a" stroke-opacity="0.39" stroke-width="1.10"/>
<polygon points="279.8,129.2 298.3,128.8 272.0,82.1 253.5,81.9" fill="url(#s60)"/>
<polygon points="299.9,128.8 300.5,128.8 276.9,82.2 270.9,82.1" fill="#33521a" fill-opacity="0.95"/>
<line x1="299.9" y1="128.8" x2="270.9" y2="82.1" stroke="#2c4a13" stroke-opacity="0.80" stroke-width="1"/>
<polygon points="238.5,130.1 300.2,128.8 273.9,82.1 212.2,81.6" fill="url(#tv)" fill-opacity="0.85"/>
<line x1="238.5" y1="130.1" x2="300.2" y2="128.8" stroke="#30501a" stroke-opacity="0.30" stroke-width="1.10"/>
<polygon points="253.5,81.9 272.0,82.1 246.5,37.6 228.0,36.9" fill="url(#s61)"/>
<polygon points="273.9,82.1 273.9,82.1 251.6,37.8 245.2,37.5" fill="#33521a" fill-opacity="0.95"/>
<line x1="273.9" y1="82.1" x2="245.2" y2="37.5" stroke="#2c4a13" stroke-opacity="0.80" stroke-width="1"/>
<polygon points="212.2,81.6 273.9,82.1 248.4,37.6 186.7,35.5" fill="url(#tv)" fill-opacity="1.00"/>
<line x1="212.2" y1="81.6" x2="273.9" y2="82.1" stroke="#30501a" stroke-opacity="0.24" stroke-width="1.10"/>
<polygon points="228.0,36.9 246.5,37.6 221.7,-4.9 203.2,-6.0" fill="url(#s62)"/>
<polygon points="248.4,37.6 248.4,37.6 226.9,-4.6 220.4,-5.0" fill="#33521a" fill-opacity="0.95"/>
<line x1="248.4" y1="37.6" x2="220.4" y2="-5.0" stroke="#2c4a13" stroke-opacity="0.80" stroke-width="1"/>
<polygon points="186.7,35.5 248.4,37.6 223.6,-4.8 161.9,-8.5" fill="url(#tv)" fill-opacity="1.00"/>
<line x1="186.7" y1="35.5" x2="248.4" y2="37.6" stroke="#30501a" stroke-opacity="0.24" stroke-width="1.10"/>
<polygon points="203.2,-6.0 221.7,-4.9 197.7,-45.6 179.2,-47.1" fill="url(#s63)"/>
<polygon points="223.6,-4.8 223.6,-4.8 202.8,-45.2 196.3,-45.7" fill="#33521a" fill-opacity="0.95"/>
<line x1="223.6" y1="-4.8" x2="196.3" y2="-45.7" stroke="#2c4a13" stroke-opacity="0.80" stroke-width="1"/>
<polygon points="161.9,-8.5 223.6,-4.8 199.6,-45.4 137.7,-50.4" fill="url(#tv)" fill-opacity="1.00"/>
<line x1="161.9" y1="-8.5" x2="223.6" y2="-4.8" stroke="#30501a" stroke-opacity="0.24" stroke-width="1.10"/>
<polygon points="631.0,653.9 640.5,648.9 603.8,579.6 594.0,583.9" fill="url(#s64)"/>
<polygon points="640.5,648.9 642.4,648.0 605.8,578.7 603.8,579.6" fill="#33521a" fill-opacity="0.53"/>
<line x1="640.5" y1="648.9" x2="603.8" y2="579.6" stroke="#2c4a13" stroke-opacity="0.45" stroke-width="1"/>
<line x1="584.8" y1="677.8" x2="641.4" y2="648.5" stroke="#30501a" stroke-opacity="0.80" stroke-width="1.70"/>
<line x1="584.8" y1="679.0" x2="641.4" y2="649.7" stroke="#6a9a40" stroke-opacity="0.14" stroke-width="1"/>
<line x1="641.4" y1="648.5" x2="604.8" y2="579.1" stroke="#30501a" stroke-opacity="0.14" stroke-width="0.9"/>
<polygon points="592.7,584.5 603.7,579.6 568.3,512.9 557.0,517.0" fill="url(#s65)"/>
<polygon points="603.7,579.6 605.9,578.7 570.6,512.0 568.3,512.9" fill="#33521a" fill-opacity="0.61"/>
<line x1="603.7" y1="579.6" x2="568.3" y2="512.9" stroke="#2c4a13" stroke-opacity="0.52" stroke-width="1"/>
<line x1="548.2" y1="604.1" x2="604.8" y2="579.1" stroke="#30501a" stroke-opacity="0.80" stroke-width="1.69"/>
<line x1="548.2" y1="605.3" x2="604.8" y2="580.3" stroke="#6a9a40" stroke-opacity="0.16" stroke-width="1"/>
<line x1="604.8" y1="579.1" x2="569.4" y2="512.4" stroke="#30501a" stroke-opacity="0.11" stroke-width="0.9"/>
<polygon points="555.7,517.5 568.1,512.9 534.0,449.0 521.4,452.8" fill="url(#s66)"/>
<polygon points="568.1,512.9 570.7,512.0 536.7,448.2 534.0,449.0" fill="#33521a" fill-opacity="0.69"/>
<line x1="568.1" y1="512.9" x2="534.0" y2="449.0" stroke="#2c4a13" stroke-opacity="0.58" stroke-width="1"/>
<line x1="512.8" y1="533.3" x2="569.4" y2="512.4" stroke="#30501a" stroke-opacity="0.62" stroke-width="1.16"/>
<line x1="512.8" y1="534.5" x2="569.4" y2="513.6" stroke="#6a9a40" stroke-opacity="0.18" stroke-width="1"/>
<line x1="569.4" y1="512.4" x2="535.4" y2="448.6" stroke="#30501a" stroke-opacity="0.09" stroke-width="0.9"/>
<polygon points="520.0,453.2 533.9,449.0 501.1,388.1 487.0,391.5" fill="url(#s67)"/>
<polygon points="533.9,449.0 536.8,448.1 504.1,387.4 501.1,388.1" fill="#33521a" fill-opacity="0.77"/>
<line x1="533.9" y1="449.0" x2="501.1" y2="388.1" stroke="#2c4a13" stroke-opacity="0.65" stroke-width="1"/>
<line x1="478.7" y1="465.6" x2="535.4" y2="448.6" stroke="#30501a" stroke-opacity="0.60" stroke-width="1.10"/>
<line x1="478.7" y1="466.8" x2="535.4" y2="449.8" stroke="#6a9a40" stroke-opacity="0.20" stroke-width="1"/>
<line x1="535.4" y1="448.6" x2="502.6" y2="387.7" stroke="#30501a" stroke-opacity="0.06" stroke-width="0.9"/>
<polygon points="337.0,126.1 354.1,125.8 327.8,80.6 310.7,80.4" fill="url(#s68)"/>
<polygon points="355.7,125.7 356.3,125.7 332.7,80.7 326.6,80.6" fill="#33521a" fill-opacity="0.95"/>
<line x1="355.7" y1="125.7" x2="326.6" y2="80.6" stroke="#2c4a13" stroke-opacity="0.80" stroke-width="1"/>
<polygon points="299.1,126.8 356.0,125.7 329.7,80.6 272.7,80.0" fill="url(#tv)" fill-opacity="0.86"/>
<line x1="299.1" y1="126.8" x2="356.0" y2="125.7" stroke="#30501a" stroke-opacity="0.29" stroke-width="1.10"/>
<polygon points="310.7,80.4 327.8,80.6 302.2,37.5 285.2,36.9" fill="url(#s69)"/>
<polygon points="329.7,80.6 329.7,80.6 307.4,37.7 300.9,37.5" fill="#33521a" fill-opacity="0.95"/>
<line x1="329.7" y1="80.6" x2="300.9" y2="37.5" stroke="#2c4a13" stroke-opacity="0.80" stroke-width="1"/>
<polygon points="272.7,80.0 329.7,80.6 304.1,37.6 247.1,35.5" fill="url(#tv)" fill-opacity="1.00"/>
<line x1="272.7" y1="80.0" x2="329.7" y2="80.6" stroke="#30501a" stroke-opacity="0.24" stroke-width="1.10"/>
<polygon points="285.1,36.9 302.2,37.5 277.5,-3.7 260.4,-4.7" fill="url(#s70)"/>
<polygon points="304.1,37.6 304.1,37.6 282.6,-3.4 276.1,-3.8" fill="#33521a" fill-opacity="0.95"/>
<line x1="304.1" y1="37.6" x2="276.1" y2="-3.8" stroke="#2c4a13" stroke-opacity="0.80" stroke-width="1"/>
<polygon points="247.1,35.5 304.1,37.6 279.4,-3.6 222.3,-7.1" fill="url(#tv)" fill-opacity="1.00"/>
<line x1="247.1" y1="35.5" x2="304.1" y2="37.6" stroke="#30501a" stroke-opacity="0.24" stroke-width="1.10"/>
<polygon points="260.4,-4.8 277.5,-3.7 253.4,-43.2 236.3,-44.6" fill="url(#s71)"/>
<polygon points="279.4,-3.6 279.4,-3.6 258.6,-42.8 252.1,-43.3" fill="#33521a" fill-opacity="0.95"/>
<line x1="279.4" y1="-3.6" x2="252.1" y2="-43.3" stroke="#2c4a13" stroke-opacity="0.80" stroke-width="1"/>
<polygon points="222.3,-7.1 279.4,-3.6 255.3,-43.0 198.1,-47.8" fill="url(#tv)" fill-opacity="1.00"/>
<line x1="222.3" y1="-7.1" x2="279.4" y2="-3.6" stroke="#30501a" stroke-opacity="0.24" stroke-width="1.10"/>
<polygon points="689.9,623.5 692.4,622.3 655.9,556.6 653.3,557.7" fill="url(#s72)"/>
<polygon points="692.4,622.3 692.9,622.0 656.4,556.4 655.9,556.6" fill="#33521a" fill-opacity="0.15"/>
<line x1="692.4" y1="622.3" x2="655.9" y2="556.6" stroke="#2c4a13" stroke-opacity="0.13" stroke-width="1"/>
<line x1="641.5" y1="648.6" x2="692.7" y2="622.1" stroke="#30501a" stroke-opacity="0.80" stroke-width="1.70"/>
<line x1="692.7" y1="622.1" x2="656.1" y2="556.5" stroke="#30501a" stroke-opacity="0.15" stroke-width="0.9"/>
<polygon points="651.9,558.3 655.7,556.7 620.4,493.4 616.6,494.9" fill="url(#s73)"/>
<polygon points="655.7,556.7 656.6,556.3 621.3,493.1 620.4,493.4" fill="#33521a" fill-opacity="0.23"/>
<line x1="655.7" y1="556.7" x2="620.4" y2="493.4" stroke="#2c4a13" stroke-opacity="0.20" stroke-width="1"/>
<line x1="604.7" y1="579.1" x2="656.1" y2="556.5" stroke="#30501a" stroke-opacity="0.80" stroke-width="1.69"/>
<line x1="656.1" y1="556.5" x2="620.9" y2="493.3" stroke="#30501a" stroke-opacity="0.13" stroke-width="0.9"/>
<polygon points="615.2,495.4 620.3,493.5 586.3,432.9 581.1,434.4" fill="url(#s74)"/>
<polygon points="620.3,493.5 621.5,493.1 587.5,432.5 586.3,432.9" fill="#33521a" fill-opacity="0.31"/>
<line x1="620.3" y1="493.5" x2="586.3" y2="432.9" stroke="#2c4a13" stroke-opacity="0.26" stroke-width="1"/>
<line x1="569.3" y1="512.2" x2="620.9" y2="493.3" stroke="#30501a" stroke-opacity="0.62" stroke-width="1.15"/>
<line x1="569.3" y1="513.4" x2="620.9" y2="494.5" stroke="#6a9a40" stroke-opacity="0.08" stroke-width="1"/>
<line x1="620.9" y1="493.3" x2="586.9" y2="432.7" stroke="#30501a" stroke-opacity="0.12" stroke-width="0.9"/>
<polygon points="391.6,123.9 406.2,123.6 379.9,80.0 365.3,79.9" fill="url(#s75)"/>
<polygon points="407.7,123.6 408.2,123.6 384.5,80.1 378.8,80.0" fill="#33521a" fill-opacity="0.88"/>
<line x1="407.7" y1="123.6" x2="378.8" y2="80.0" stroke="#2c4a13" stroke-opacity="0.74" stroke-width="1"/>
<polygon points="355.3,124.6 407.9,123.6 381.6,80.1 328.9,79.4" fill="url(#tv)" fill-opacity="0.80"/>
<line x1="355.3" y1="124.6" x2="407.9" y2="123.6" stroke="#30501a" stroke-opacity="0.31" stroke-width="1.10"/>
<line x1="407.9" y1="123.6" x2="381.6" y2="80.1" stroke="#30501a" stroke-opacity="0.02" stroke-width="0.9"/>
<polygon points="363.9,79.8 379.7,80.0 354.3,38.3 338.5,37.7" fill="url(#s76)"/>
<polygon points="381.6,80.1 381.6,80.1 359.4,38.5 352.9,38.3" fill="#33521a" fill-opacity="0.95"/>
<line x1="381.6" y1="80.1" x2="352.9" y2="38.3" stroke="#2c4a13" stroke-opacity="0.80" stroke-width="1"/>
<polygon points="328.9,79.4 381.6,80.1 356.2,38.4 303.4,36.3" fill="url(#tv)" fill-opacity="1.00"/>
<line x1="328.9" y1="79.4" x2="381.6" y2="80.1" stroke="#30501a" stroke-opacity="0.24" stroke-width="1.10"/>
<polygon points="338.4,37.7 354.3,38.3 329.6,-1.7 313.8,-2.7" fill="url(#s77)"/>
<polygon points="356.2,38.4 356.2,38.4 334.7,-1.3 328.2,-1.7" fill="#33521a" fill-opacity="0.95"/>
<line x1="356.2" y1="38.4" x2="328.2" y2="-1.7" stroke="#2c4a13" stroke-opacity="0.80" stroke-width="1"/>
<polygon points="303.4,36.3 356.2,38.4 331.5,-1.5 278.6,-4.9" fill="url(#tv)" fill-opacity="1.00"/>
<line x1="303.4" y1="36.3" x2="356.2" y2="38.4" stroke="#30501a" stroke-opacity="0.24" stroke-width="1.10"/>
<polygon points="313.7,-2.7 329.6,-1.7 305.6,-40.0 289.8,-41.4" fill="url(#s78)"/>
<polygon points="331.5,-1.5 331.5,-1.5 310.8,-39.6 304.3,-40.1" fill="#33521a" fill-opacity="0.95"/>
<line x1="331.5" y1="-1.5" x2="304.3" y2="-40.1" stroke="#2c4a13" stroke-opacity="0.80" stroke-width="1"/>
<polygon points="278.6,-4.9 331.5,-1.5 307.5,-39.8 254.5,-44.4" fill="url(#tv)" fill-opacity="1.00"/>
<line x1="278.6" y1="-4.9" x2="331.5" y2="-1.5" stroke="#30501a" stroke-opacity="0.24" stroke-width="1.10"/>
<polygon points="289.7,-41.4 305.6,-40.0 282.3,-76.9 266.4,-78.6" fill="url(#s79)"/>
<polygon points="307.5,-39.8 307.5,-39.8 287.4,-76.3 281.0,-77.0" fill="#33521a" fill-opacity="0.95"/>
<line x1="307.5" y1="-39.8" x2="281.0" y2="-77.0" stroke="#2c4a13" stroke-opacity="0.80" stroke-width="1"/>
<polygon points="254.5,-44.4 307.5,-39.8 284.2,-76.7 231.0,-82.3" fill="url(#tv)" fill-opacity="1.00"/>
<line x1="254.5" y1="-44.4" x2="307.5" y2="-39.8" stroke="#30501a" stroke-opacity="0.24" stroke-width="1.10"/>
<line x1="730.5" y1="689.9" x2="776.6" y2="662.4" stroke="#30501a" stroke-opacity="0.80" stroke-width="1.70"/>
<line x1="776.6" y1="662.4" x2="739.2" y2="598.2" stroke="#30501a" stroke-opacity="0.18" stroke-width="0.9"/>
<line x1="692.7" y1="622.2" x2="739.2" y2="598.2" stroke="#30501a" stroke-opacity="0.80" stroke-width="1.70"/>
<line x1="739.2" y1="598.2" x2="703.0" y2="536.0" stroke="#30501a" stroke-opacity="0.18" stroke-width="0.9"/>
<line x1="656.1" y1="556.4" x2="703.0" y2="536.0" stroke="#30501a" stroke-opacity="0.80" stroke-width="1.69"/>
<line x1="703.0" y1="536.0" x2="668.0" y2="476.0" stroke="#30501a" stroke-opacity="0.18" stroke-width="0.9"/>
<line x1="620.8" y1="493.1" x2="668.0" y2="476.0" stroke="#30501a" stroke-opacity="0.62" stroke-width="1.15"/>
<line x1="668.0" y1="476.0" x2="634.3" y2="418.3" stroke="#30501a" stroke-opacity="0.18" stroke-width="0.9"/>
<polygon points="447.6,122.2 455.3,122.1 429.1,80.0 421.4,79.9" fill="url(#s80)"/>
<polygon points="456.2,122.1 456.4,122.1 431.7,80.0 428.5,80.0" fill="#33521a" fill-opacity="0.50"/>
<line x1="456.2" y1="122.1" x2="428.5" y2="80.0" stroke="#2c4a13" stroke-opacity="0.42" stroke-width="1"/>
<polygon points="407.5,123.0 456.3,122.1 430.1,80.0 381.2,79.4" fill="url(#tv)" fill-opacity="0.46"/>
<line x1="407.5" y1="123.0" x2="456.3" y2="122.1" stroke="#30501a" stroke-opacity="0.44" stroke-width="1.10"/>
<line x1="407.5" y1="124.2" x2="456.3" y2="123.3" stroke="#6a9a40" stroke-opacity="0.13" stroke-width="1"/>
<line x1="456.3" y1="122.1" x2="430.1" y2="80.0" stroke="#30501a" stroke-opacity="0.15" stroke-width="0.9"/>
<polygon points="420.0,79.8 429.0,80.0 403.6,39.6 394.7,39.2" fill="url(#s81)"/>
<polygon points="430.1,80.0 430.1,80.0 406.8,39.7 402.8,39.6" fill="#33521a" fill-opacity="0.58"/>
<line x1="430.1" y1="80.0" x2="402.8" y2="39.6" stroke="#2c4a13" stroke-opacity="0.49" stroke-width="1"/>
<polygon points="381.2,79.4 430.1,80.0 404.8,39.6 355.7,37.7" fill="url(#tv)" fill-opacity="0.61"/>
<line x1="381.2" y1="79.4" x2="430.1" y2="80.0" stroke="#30501a" stroke-opacity="0.38" stroke-width="1.10"/>
<line x1="430.1" y1="80.0" x2="404.8" y2="39.6" stroke="#30501a" stroke-opacity="0.12" stroke-width="0.9"/>
<polygon points="393.2,39.2 403.5,39.6 378.9,0.8 368.6,0.2" fill="url(#s82)"/>
<polygon points="404.8,39.6 404.8,39.6 382.5,1.1 377.9,0.8" fill="#33521a" fill-opacity="0.66"/>
<line x1="404.8" y1="39.6" x2="377.9" y2="0.8" stroke="#2c4a13" stroke-opacity="0.56" stroke-width="1"/>
<polygon points="355.7,37.7 404.8,39.6 380.2,0.9 331.0,-2.3" fill="url(#tv)" fill-opacity="0.70"/>
<line x1="355.7" y1="37.7" x2="404.8" y2="39.6" stroke="#30501a" stroke-opacity="0.35" stroke-width="1.10"/>
<line x1="404.8" y1="39.6" x2="380.2" y2="0.9" stroke="#30501a" stroke-opacity="0.10" stroke-width="0.9"/>
<polygon points="367.2,0.1 378.7,0.8 354.9,-36.4 343.3,-37.4" fill="url(#s83)"/>
<polygon points="380.2,0.9 380.2,0.9 358.9,-36.1 353.8,-36.5" fill="#33521a" fill-opacity="0.74"/>
<line x1="380.2" y1="0.9" x2="353.8" y2="-36.5" stroke="#2c4a13" stroke-opacity="0.63" stroke-width="1"/>
<polygon points="331.0,-2.3 380.2,0.9 356.3,-36.3 307.0,-40.6" fill="url(#tv)" fill-opacity="0.78"/>
<line x1="331.0" y1="-2.3" x2="380.2" y2="0.9" stroke="#30501a" stroke-opacity="0.32" stroke-width="1.10"/>
<line x1="380.2" y1="0.9" x2="356.3" y2="-36.3" stroke="#30501a" stroke-opacity="0.07" stroke-width="0.9"/>
<polygon points="341.9,-37.6 354.7,-36.4 331.5,-72.3 318.7,-73.7" fill="url(#s84)"/>
<polygon points="356.3,-36.3 356.3,-36.3 335.9,-71.8 330.3,-72.4" fill="#33521a" fill-opacity="0.82"/>
<line x1="356.3" y1="-36.3" x2="330.3" y2="-72.4" stroke="#2c4a13" stroke-opacity="0.69" stroke-width="1"/>
<polygon points="307.0,-40.6 356.3,-36.3 333.1,-72.1 283.7,-77.5" fill="url(#tv)" fill-opacity="0.87"/>
<line x1="307.0" y1="-40.6" x2="356.3" y2="-36.3" stroke="#30501a" stroke-opacity="0.29" stroke-width="1.10"/>
<line x1="356.3" y1="-36.3" x2="333.1" y2="-72.1" stroke="#30501a" stroke-opacity="0.04" stroke-width="0.9"/>
<line x1="776.6" y1="662.5" x2="818.6" y2="637.4" stroke="#30501a" stroke-opacity="0.80" stroke-width="1.70"/>
<line x1="818.6" y1="637.4" x2="781.6" y2="576.4" stroke="#30501a" stroke-opacity="0.18" stroke-width="0.9"/>
<line x1="739.2" y1="598.3" x2="781.6" y2="576.4" stroke="#30501a" stroke-opacity="0.80" stroke-width="1.70"/>
<line x1="781.6" y1="576.4" x2="745.8" y2="517.3" stroke="#30501a" stroke-opacity="0.18" stroke-width="0.9"/>
<line x1="702.9" y1="535.9" x2="745.8" y2="517.3" stroke="#30501a" stroke-opacity="0.79" stroke-width="1.68"/>
<line x1="745.8" y1="517.3" x2="711.2" y2="460.2" stroke="#30501a" stroke-opacity="0.18" stroke-width="0.9"/>
<line x1="667.9" y1="475.9" x2="711.2" y2="460.2" stroke="#30501a" stroke-opacity="0.62" stroke-width="1.15"/>
<line x1="711.2" y1="460.2" x2="677.9" y2="405.3" stroke="#30501a" stroke-opacity="0.18" stroke-width="0.9"/>
<polygon points="499.4,120.9 501.1,120.9 475.1,80.2 473.4,80.2" fill="url(#s85)"/>
<polygon points="501.4,120.9 501.4,120.9 475.8,80.2 475.0,80.2" fill="#33521a" fill-opacity="0.12"/>
<line x1="501.4" y1="120.9" x2="475.0" y2="80.2" stroke="#2c4a13" stroke-opacity="0.10" stroke-width="1"/>
<polygon points="456.1,121.7 501.4,120.9 475.4,80.2 429.9,79.6" fill="url(#tv)" fill-opacity="0.11"/>
<line x1="456.1" y1="121.7" x2="501.4" y2="120.9" stroke="#30501a" stroke-opacity="0.56" stroke-width="1.10"/>
<line x1="501.4" y1="120.9" x2="475.4" y2="80.2" stroke="#30501a" stroke-opacity="0.28" stroke-width="0.9"/>
<polygon points="472.1,80.1 475.0,80.2 449.8,41.1 446.9,41.0" fill="url(#s86)"/>
<polygon points="475.4,80.2 475.4,80.2 450.9,41.1 449.5,41.1" fill="#33521a" fill-opacity="0.20"/>
<line x1="475.4" y1="80.2" x2="449.5" y2="41.1" stroke="#2c4a13" stroke-opacity="0.17" stroke-width="1"/>
<polygon points="429.9,79.6 475.4,80.2 450.2,41.1 404.5,39.2" fill="url(#tv)" fill-opacity="0.21"/>
<line x1="429.9" y1="79.6" x2="475.4" y2="80.2" stroke="#30501a" stroke-opacity="0.52" stroke-width="1.10"/>
<line x1="475.4" y1="80.2" x2="450.2" y2="41.1" stroke="#30501a" stroke-opacity="0.25" stroke-width="0.9"/>
<polygon points="445.6,40.9 449.6,41.1 425.2,3.5 421.1,3.2" fill="url(#s87)"/>
<polygon points="450.2,41.1 450.2,41.1 426.7,3.6 424.8,3.5" fill="#33521a" fill-opacity="0.28"/>
<line x1="450.2" y1="41.1" x2="424.8" y2="3.5" stroke="#2c4a13" stroke-opacity="0.24" stroke-width="1"/>
<polygon points="404.5,39.2 450.2,41.1 425.8,3.5 379.9,0.5" fill="url(#tv)" fill-opacity="0.30"/>
<line x1="404.5" y1="39.2" x2="450.2" y2="41.1" stroke="#30501a" stroke-opacity="0.49" stroke-width="1.10"/>
<line x1="450.2" y1="41.1" x2="425.8" y2="3.5" stroke="#30501a" stroke-opacity="0.22" stroke-width="0.9"/>
<polygon points="419.8,3.1 425.0,3.5 401.3,-32.7 396.1,-33.2" fill="url(#s88)"/>
<polygon points="425.8,3.5 425.8,3.5 403.3,-32.5 400.8,-32.7" fill="#33521a" fill-opacity="0.36"/>
<line x1="425.8" y1="3.5" x2="400.8" y2="-32.7" stroke="#2c4a13" stroke-opacity="0.31" stroke-width="1"/>
<polygon points="379.9,0.5 425.8,3.5 402.0,-32.6 356.0,-36.8" fill="url(#tv)" fill-opacity="0.38"/>
<line x1="379.9" y1="0.5" x2="425.8" y2="3.5" stroke="#30501a" stroke-opacity="0.46" stroke-width="1.10"/>
<line x1="379.9" y1="1.7" x2="425.8" y2="4.7" stroke="#6a9a40" stroke-opacity="0.10" stroke-width="1"/>
<line x1="425.8" y1="3.5" x2="402.0" y2="-32.6" stroke="#30501a" stroke-opacity="0.20" stroke-width="0.9"/>
<polygon points="394.7,-33.3 401.2,-32.7 378.1,-67.6 371.7,-68.3" fill="url(#s89)"/>
<polygon points="402.0,-32.6 402.0,-32.6 380.5,-67.3 377.5,-67.7" fill="#33521a" fill-opacity="0.44"/>
<line x1="402.0" y1="-32.6" x2="377.5" y2="-67.7" stroke="#2c4a13" stroke-opacity="0.37" stroke-width="1"/>
<polygon points="356.0,-36.8 402.0,-32.6 379.0,-67.5 332.8,-72.6" fill="url(#tv)" fill-opacity="0.47"/>
<line x1="356.0" y1="-36.8" x2="402.0" y2="-32.6" stroke="#30501a" stroke-opacity="0.43" stroke-width="1.10"/>
<line x1="356.0" y1="-35.6" x2="402.0" y2="-31.4" stroke="#6a9a40" stroke-opacity="0.12" stroke-width="1"/>
<line x1="402.0" y1="-32.6" x2="379.0" y2="-67.5" stroke="#30501a" stroke-opacity="0.17" stroke-width="0.9"/>
<line x1="856.7" y1="700.0" x2="894.4" y2="674.2" stroke="#30501a" stroke-opacity="0.80" stroke-width="1.70"/>
<line x1="894.4" y1="674.2" x2="856.9" y2="614.6" stroke="#30501a" stroke-opacity="0.18" stroke-width="0.9"/>
<line x1="818.6" y1="637.5" x2="856.9" y2="614.6" stroke="#30501a" stroke-opacity="0.80" stroke-width="1.70"/>
<line x1="856.9" y1="614.6" x2="820.5" y2="556.5" stroke="#30501a" stroke-opacity="0.18" stroke-width="0.9"/>
<line x1="781.6" y1="576.5" x2="820.5" y2="556.5" stroke="#30501a" stroke-opacity="0.80" stroke-width="1.70"/>
<line x1="820.5" y1="556.5" x2="785.2" y2="500.2" stroke="#30501a" stroke-opacity="0.18" stroke-width="0.9"/>
<line x1="745.8" y1="517.3" x2="785.2" y2="500.2" stroke="#30501a" stroke-opacity="0.79" stroke-width="1.68"/>
<line x1="785.2" y1="500.2" x2="751.1" y2="445.7" stroke="#30501a" stroke-opacity="0.18" stroke-width="0.9"/>
<line x1="711.2" y1="460.1" x2="751.1" y2="445.7" stroke="#30501a" stroke-opacity="0.62" stroke-width="1.15"/>
<line x1="751.1" y1="445.7" x2="718.2" y2="393.3" stroke="#30501a" stroke-opacity="0.18" stroke-width="0.9"/>
<line x1="528.2" y1="163.1" x2="570.1" y2="160.9" stroke="#30501a" stroke-opacity="0.60" stroke-width="1.10"/>
<line x1="570.1" y1="160.9" x2="543.5" y2="119.9" stroke="#30501a" stroke-opacity="0.32" stroke-width="0.9"/>
<line x1="501.3" y1="120.7" x2="543.5" y2="119.9" stroke="#30501a" stroke-opacity="0.60" stroke-width="1.10"/>
<line x1="543.5" y1="119.9" x2="517.7" y2="80.6" stroke="#30501a" stroke-opacity="0.32" stroke-width="0.9"/>
<line x1="475.2" y1="80.0" x2="517.7" y2="80.6" stroke="#30501a" stroke-opacity="0.60" stroke-width="1.10"/>
<line x1="517.7" y1="80.6" x2="492.7" y2="42.7" stroke="#30501a" stroke-opacity="0.32" stroke-width="0.9"/>
<line x1="450.0" y1="40.9" x2="492.7" y2="42.7" stroke="#30501a" stroke-opacity="0.60" stroke-width="1.10"/>
<line x1="492.7" y1="42.7" x2="468.4" y2="6.2" stroke="#30501a" stroke-opacity="0.32" stroke-width="0.9"/>
<line x1="425.6" y1="3.3" x2="468.4" y2="6.2" stroke="#30501a" stroke-opacity="0.60" stroke-width="1.10"/>
<line x1="468.4" y1="6.2" x2="444.9" y2="-29.0" stroke="#30501a" stroke-opacity="0.32" stroke-width="0.9"/>
<polygon points="443.9,-29.1 444.7,-29.0 421.8,-62.9 421.0,-63.0" fill="url(#s90)"/>
<polygon points="444.9,-29.0 444.9,-29.0 422.2,-62.9 421.8,-62.9" fill="#33521a" fill-opacity="0.06"/>
<line x1="444.9" y1="-29.0" x2="421.8" y2="-62.9" stroke="#2c4a13" stroke-opacity="0.05" stroke-width="1"/>
<polygon points="401.9,-32.9 444.9,-29.0 422.0,-62.9 378.8,-67.7" fill="url(#tv)" fill-opacity="0.07"/>
<line x1="401.9" y1="-32.9" x2="444.9" y2="-29.0" stroke="#30501a" stroke-opacity="0.58" stroke-width="1.10"/>
<line x1="444.9" y1="-29.0" x2="422.0" y2="-62.9" stroke="#30501a" stroke-opacity="0.30" stroke-width="0.9"/>
<line x1="894.4" y1="674.2" x2="928.9" y2="650.5" stroke="#30501a" stroke-opacity="0.80" stroke-width="1.70"/>
<line x1="928.9" y1="650.5" x2="892.0" y2="593.7" stroke="#30501a" stroke-opacity="0.18" stroke-width="0.9"/>
<line x1="856.9" y1="614.6" x2="892.0" y2="593.7" stroke="#30501a" stroke-opacity="0.80" stroke-width="1.70"/>
<line x1="892.0" y1="593.7" x2="856.2" y2="538.2" stroke="#30501a" stroke-opacity="0.18" stroke-width="0.9"/>
<line x1="820.5" y1="556.5" x2="856.2" y2="538.2" stroke="#30501a" stroke-opacity="0.80" stroke-width="1.70"/>
<line x1="856.2" y1="538.2" x2="821.5" y2="484.4" stroke="#30501a" stroke-opacity="0.18" stroke-width="0.9"/>
<line x1="785.2" y1="500.1" x2="821.5" y2="484.4" stroke="#30501a" stroke-opacity="0.79" stroke-width="1.68"/>
<line x1="821.5" y1="484.4" x2="787.9" y2="432.4" stroke="#30501a" stroke-opacity="0.18" stroke-width="0.9"/>
<line x1="570.1" y1="160.8" x2="609.2" y2="158.8" stroke="#30501a" stroke-opacity="0.56" stroke-width="1.10"/>
<line x1="609.2" y1="158.8" x2="582.8" y2="119.1" stroke="#30501a" stroke-opacity="0.32" stroke-width="0.9"/>
<line x1="543.4" y1="119.8" x2="582.8" y2="119.1" stroke="#30501a" stroke-opacity="0.56" stroke-width="1.10"/>
<line x1="582.8" y1="119.1" x2="557.3" y2="81.0" stroke="#30501a" stroke-opacity="0.32" stroke-width="0.9"/>
<line x1="517.6" y1="80.4" x2="557.3" y2="81.0" stroke="#30501a" stroke-opacity="0.56" stroke-width="1.10"/>
<line x1="557.3" y1="81.0" x2="532.5" y2="44.2" stroke="#30501a" stroke-opacity="0.32" stroke-width="0.9"/>
<line x1="492.6" y1="42.5" x2="532.5" y2="44.2" stroke="#30501a" stroke-opacity="0.56" stroke-width="1.10"/>
<line x1="532.5" y1="44.2" x2="508.4" y2="8.8" stroke="#30501a" stroke-opacity="0.32" stroke-width="0.9"/>
<line x1="468.3" y1="6.1" x2="508.4" y2="8.8" stroke="#30501a" stroke-opacity="0.56" stroke-width="1.10"/>
<line x1="508.4" y1="8.8" x2="485.0" y2="-25.4" stroke="#30501a" stroke-opacity="0.32" stroke-width="0.9"/>
<line x1="444.8" y1="-29.1" x2="485.0" y2="-25.4" stroke="#30501a" stroke-opacity="0.56" stroke-width="1.10"/>
<line x1="485.0" y1="-25.4" x2="462.3" y2="-58.5" stroke="#30501a" stroke-opacity="0.32" stroke-width="0.9"/>
<line x1="928.9" y1="650.5" x2="960.6" y2="628.7" stroke="#30501a" stroke-opacity="0.80" stroke-width="1.70"/>
<line x1="960.6" y1="628.7" x2="924.4" y2="574.4" stroke="#30501a" stroke-opacity="0.18" stroke-width="0.9"/>
<line x1="892.1" y1="593.7" x2="924.4" y2="574.4" stroke="#30501a" stroke-opacity="0.80" stroke-width="1.70"/>
<line x1="924.4" y1="574.4" x2="889.2" y2="521.4" stroke="#30501a" stroke-opacity="0.18" stroke-width="0.9"/>
<line x1="856.2" y1="538.2" x2="889.2" y2="521.4" stroke="#30501a" stroke-opacity="0.80" stroke-width="1.70"/>
<line x1="889.2" y1="521.4" x2="855.1" y2="469.9" stroke="#30501a" stroke-opacity="0.18" stroke-width="0.9"/>
<line x1="821.5" y1="484.4" x2="855.1" y2="469.9" stroke="#30501a" stroke-opacity="0.79" stroke-width="1.68"/>
<line x1="855.1" y1="469.9" x2="822.1" y2="420.1" stroke="#30501a" stroke-opacity="0.18" stroke-width="0.9"/>
<line x1="609.2" y1="158.7" x2="645.8" y2="156.8" stroke="#30501a" stroke-opacity="0.52" stroke-width="1.10"/>
<line x1="645.8" y1="156.8" x2="619.7" y2="118.4" stroke="#30501a" stroke-opacity="0.32" stroke-width="0.9"/>
<line x1="582.8" y1="119.1" x2="619.7" y2="118.4" stroke="#30501a" stroke-opacity="0.52" stroke-width="1.10"/>
<line x1="619.7" y1="118.4" x2="594.4" y2="81.4" stroke="#30501a" stroke-opacity="0.32" stroke-width="0.9"/>
<line x1="557.2" y1="80.9" x2="594.4" y2="81.4" stroke="#30501a" stroke-opacity="0.52" stroke-width="1.10"/>
<line x1="594.4" y1="81.4" x2="569.8" y2="45.8" stroke="#30501a" stroke-opacity="0.32" stroke-width="0.9"/>
<line x1="532.4" y1="44.2" x2="569.8" y2="45.8" stroke="#30501a" stroke-opacity="0.52" stroke-width="1.10"/>
<line x1="569.8" y1="45.8" x2="546.0" y2="11.3" stroke="#30501a" stroke-opacity="0.32" stroke-width="0.9"/>
<line x1="508.4" y1="8.7" x2="546.0" y2="11.3" stroke="#30501a" stroke-opacity="0.52" stroke-width="1.10"/>
<line x1="546.0" y1="11.3" x2="522.8" y2="-22.0" stroke="#30501a" stroke-opacity="0.32" stroke-width="0.9"/>
<line x1="485.0" y1="-25.5" x2="522.8" y2="-22.0" stroke="#30501a" stroke-opacity="0.52" stroke-width="1.10"/>
<line x1="522.8" y1="-22.0" x2="500.3" y2="-54.2" stroke="#30501a" stroke-opacity="0.32" stroke-width="0.9"/>
<line x1="997.8" y1="684.2" x2="1026.2" y2="661.8" stroke="#30501a" stroke-opacity="0.80" stroke-width="1.70"/>
<line x1="1026.2" y1="661.8" x2="989.8" y2="608.6" stroke="#30501a" stroke-opacity="0.18" stroke-width="0.9"/>
<line x1="960.6" y1="628.7" x2="989.8" y2="608.6" stroke="#30501a" stroke-opacity="0.80" stroke-width="1.70"/>
<line x1="989.8" y1="608.6" x2="954.3" y2="556.5" stroke="#30501a" stroke-opacity="0.18" stroke-width="0.9"/>
<line x1="924.4" y1="574.4" x2="954.3" y2="556.5" stroke="#30501a" stroke-opacity="0.80" stroke-width="1.70"/>
<line x1="954.3" y1="556.5" x2="919.8" y2="505.8" stroke="#30501a" stroke-opacity="0.18" stroke-width="0.9"/>
<line x1="889.2" y1="521.4" x2="919.8" y2="505.8" stroke="#30501a" stroke-opacity="0.80" stroke-width="1.70"/>
<line x1="919.8" y1="505.8" x2="886.3" y2="456.5" stroke="#30501a" stroke-opacity="0.18" stroke-width="0.9"/>
<line x1="855.1" y1="469.9" x2="886.3" y2="456.5" stroke="#30501a" stroke-opacity="0.79" stroke-width="1.68"/>
<line x1="886.3" y1="456.5" x2="853.8" y2="408.7" stroke="#30501a" stroke-opacity="0.18" stroke-width="0.9"/>
<line x1="645.8" y1="156.8" x2="680.1" y2="155.0" stroke="#30501a" stroke-opacity="0.48" stroke-width="1.10"/>
<line x1="680.1" y1="155.0" x2="654.2" y2="117.8" stroke="#30501a" stroke-opacity="0.32" stroke-width="0.9"/>
<line x1="619.6" y1="118.4" x2="654.2" y2="117.8" stroke="#30501a" stroke-opacity="0.48" stroke-width="1.10"/>
<line x1="654.2" y1="117.8" x2="629.2" y2="81.9" stroke="#30501a" stroke-opacity="0.32" stroke-width="0.9"/>
<line x1="594.3" y1="81.4" x2="629.2" y2="81.9" stroke="#30501a" stroke-opacity="0.48" stroke-width="1.10"/>
<line x1="629.2" y1="81.9" x2="604.9" y2="47.2" stroke="#30501a" stroke-opacity="0.32" stroke-width="0.9"/>
<line x1="569.8" y1="45.7" x2="604.9" y2="47.2" stroke="#30501a" stroke-opacity="0.48" stroke-width="1.10"/>
<line x1="604.9" y1="47.2" x2="581.3" y2="13.7" stroke="#30501a" stroke-opacity="0.32" stroke-width="0.9"/>
<line x1="545.9" y1="11.3" x2="581.3" y2="13.7" stroke="#30501a" stroke-opacity="0.48" stroke-width="1.10"/>
<line x1="581.3" y1="13.7" x2="558.3" y2="-18.7" stroke="#30501a" stroke-opacity="0.32" stroke-width="0.9"/>
<line x1="522.8" y1="-22.0" x2="558.3" y2="-18.7" stroke="#30501a" stroke-opacity="0.48" stroke-width="1.10"/>
<line x1="558.3" y1="-18.7" x2="536.0" y2="-50.1" stroke="#30501a" stroke-opacity="0.32" stroke-width="0.9"/>
<line x1="1026.2" y1="661.8" x2="1052.5" y2="641.0" stroke="#30501a" stroke-opacity="0.80" stroke-width="1.70"/>
<line x1="1052.5" y1="641.0" x2="1016.8" y2="590.0" stroke="#30501a" stroke-opacity="0.17" stroke-width="0.9"/>
<line x1="989.8" y1="608.6" x2="1016.8" y2="590.0" stroke="#30501a" stroke-opacity="0.80" stroke-width="1.70"/>
<line x1="1016.8" y1="590.0" x2="982.0" y2="540.0" stroke="#30501a" stroke-opacity="0.17" stroke-width="0.9"/>
<line x1="954.3" y1="556.5" x2="982.0" y2="540.0" stroke="#30501a" stroke-opacity="0.80" stroke-width="1.70"/>
<line x1="982.0" y1="540.0" x2="948.1" y2="491.3" stroke="#30501a" stroke-opacity="0.17" stroke-width="0.9"/>
<line x1="919.8" y1="505.8" x2="948.1" y2="491.3" stroke="#30501a" stroke-opacity="0.80" stroke-width="1.70"/>
<line x1="948.1" y1="491.3" x2="915.3" y2="444.0" stroke="#30501a" stroke-opacity="0.17" stroke-width="0.9"/>
<line x1="886.3" y1="456.5" x2="915.3" y2="444.0" stroke="#30501a" stroke-opacity="0.79" stroke-width="1.68"/>
<line x1="915.3" y1="444.0" x2="883.4" y2="398.1" stroke="#30501a" stroke-opacity="0.17" stroke-width="0.9"/>
<line x1="680.1" y1="155.0" x2="712.2" y2="153.3" stroke="#30501a" stroke-opacity="0.44" stroke-width="1.10"/>
<line x1="712.2" y1="153.3" x2="686.7" y2="117.2" stroke="#30501a" stroke-opacity="0.31" stroke-width="0.9"/>
<line x1="654.2" y1="117.8" x2="686.7" y2="117.2" stroke="#30501a" stroke-opacity="0.44" stroke-width="1.10"/>
<line x1="686.7" y1="117.2" x2="662.0" y2="82.4" stroke="#30501a" stroke-opacity="0.31" stroke-width="0.9"/>
<line x1="629.2" y1="81.9" x2="662.0" y2="82.4" stroke="#30501a" stroke-opacity="0.44" stroke-width="1.10"/>
<line x1="662.0" y1="82.4" x2="637.9" y2="48.7" stroke="#30501a" stroke-opacity="0.31" stroke-width="0.9"/>
<line x1="604.9" y1="47.2" x2="637.9" y2="48.7" stroke="#30501a" stroke-opacity="0.44" stroke-width="1.10"/>
<line x1="637.9" y1="48.7" x2="614.6" y2="16.0" stroke="#30501a" stroke-opacity="0.31" stroke-width="0.9"/>
<line x1="581.3" y1="13.7" x2="614.6" y2="16.0" stroke="#30501a" stroke-opacity="0.44" stroke-width="1.10"/>
<line x1="614.6" y1="16.0" x2="591.8" y2="-15.6" stroke="#30501a" stroke-opacity="0.31" stroke-width="0.9"/>
<line x1="558.3" y1="-18.7" x2="591.8" y2="-15.6" stroke="#30501a" stroke-opacity="0.44" stroke-width="1.10"/>
<line x1="591.8" y1="-15.6" x2="569.7" y2="-46.2" stroke="#30501a" stroke-opacity="0.31" stroke-width="0.9"/>
<line x1="1052.5" y1="641.0" x2="1076.8" y2="621.7" stroke="#30501a" stroke-opacity="0.80" stroke-width="1.70"/>
<line x1="1076.8" y1="621.7" x2="1041.8" y2="572.6" stroke="#30501a" stroke-opacity="0.17" stroke-width="0.9"/>
<line x1="1016.8" y1="590.0" x2="1041.8" y2="572.6" stroke="#30501a" stroke-opacity="0.80" stroke-width="1.70"/>
<line x1="1041.8" y1="572.6" x2="1007.7" y2="524.7" stroke="#30501a" stroke-opacity="0.17" stroke-width="0.9"/>
<line x1="982.0" y1="540.0" x2="1007.7" y2="524.7" stroke="#30501a" stroke-opacity="0.80" stroke-width="1.70"/>
<line x1="1007.7" y1="524.7" x2="974.6" y2="477.9" stroke="#30501a" stroke-opacity="0.17" stroke-width="0.9"/>
<line x1="948.1" y1="491.3" x2="974.6" y2="477.9" stroke="#30501a" stroke-opacity="0.80" stroke-width="1.70"/>
<line x1="974.6" y1="477.9" x2="942.3" y2="432.4" stroke="#30501a" stroke-opacity="0.17" stroke-width="0.9"/>
<line x1="915.3" y1="444.0" x2="942.3" y2="432.4" stroke="#30501a" stroke-opacity="0.79" stroke-width="1.68"/>
<line x1="942.3" y1="432.4" x2="911.0" y2="388.2" stroke="#30501a" stroke-opacity="0.17" stroke-width="0.9"/>
<line x1="883.4" y1="398.1" x2="911.0" y2="388.2" stroke="#30501a" stroke-opacity="0.43" stroke-width="1.15"/>
<line x1="911.0" y1="388.2" x2="880.7" y2="345.5" stroke="#30501a" stroke-opacity="0.17" stroke-width="0.9"/>
<line x1="712.2" y1="153.3" x2="742.5" y2="151.7" stroke="#30501a" stroke-opacity="0.40" stroke-width="1.10"/>
<line x1="742.5" y1="151.7" x2="717.3" y2="116.7" stroke="#30501a" stroke-opacity="0.30" stroke-width="0.9"/>
<line x1="686.7" y1="117.2" x2="717.3" y2="116.7" stroke="#30501a" stroke-opacity="0.40" stroke-width="1.10"/>
<line x1="717.3" y1="116.7" x2="692.8" y2="82.8" stroke="#30501a" stroke-opacity="0.30" stroke-width="0.9"/>
<line x1="662.0" y1="82.4" x2="692.8" y2="82.8" stroke="#30501a" stroke-opacity="0.40" stroke-width="1.10"/>
<line x1="692.8" y1="82.8" x2="669.1" y2="50.0" stroke="#30501a" stroke-opacity="0.30" stroke-width="0.9"/>
<line x1="637.9" y1="48.6" x2="669.1" y2="50.0" stroke="#30501a" stroke-opacity="0.40" stroke-width="1.10"/>
<line x1="669.1" y1="50.0" x2="646.0" y2="18.2" stroke="#30501a" stroke-opacity="0.30" stroke-width="0.9"/>
<line x1="614.6" y1="16.0" x2="646.0" y2="18.2" stroke="#30501a" stroke-opacity="0.40" stroke-width="1.10"/>
<line x1="646.0" y1="18.2" x2="623.5" y2="-12.6" stroke="#30501a" stroke-opacity="0.30" stroke-width="0.9"/>
<line x1="591.8" y1="-15.6" x2="623.5" y2="-12.6" stroke="#30501a" stroke-opacity="0.40" stroke-width="1.10"/>
<line x1="623.5" y1="-12.6" x2="601.6" y2="-42.4" stroke="#30501a" stroke-opacity="0.30" stroke-width="0.9"/>
<line x1="1076.8" y1="621.7" x2="1099.4" y2="603.7" stroke="#30501a" stroke-opacity="0.80" stroke-width="1.70"/>
<line x1="1099.4" y1="603.7" x2="1065.2" y2="556.5" stroke="#30501a" stroke-opacity="0.16" stroke-width="0.9"/>
<line x1="1041.8" y1="572.6" x2="1065.2" y2="556.5" stroke="#30501a" stroke-opacity="0.80" stroke-width="1.70"/>
<line x1="1065.2" y1="556.5" x2="1031.7" y2="510.4" stroke="#30501a" stroke-opacity="0.16" stroke-width="0.9"/>
<line x1="1007.7" y1="524.7" x2="1031.7" y2="510.4" stroke="#30501a" stroke-opacity="0.80" stroke-width="1.70"/>
<line x1="1031.7" y1="510.4" x2="999.2" y2="465.4" stroke="#30501a" stroke-opacity="0.16" stroke-width="0.9"/>
<line x1="974.6" y1="477.9" x2="999.2" y2="465.4" stroke="#30501a" stroke-opacity="0.80" stroke-width="1.70"/>
<line x1="999.2" y1="465.4" x2="967.6" y2="421.6" stroke="#30501a" stroke-opacity="0.16" stroke-width="0.9"/>
<line x1="942.3" y1="432.4" x2="967.6" y2="421.6" stroke="#30501a" stroke-opacity="0.79" stroke-width="1.68"/>
<line x1="967.6" y1="421.6" x2="936.9" y2="379.0" stroke="#30501a" stroke-opacity="0.16" stroke-width="0.9"/>
<line x1="911.0" y1="388.2" x2="936.9" y2="379.0" stroke="#30501a" stroke-opacity="0.40" stroke-width="1.15"/>
<line x1="936.9" y1="379.0" x2="907.1" y2="337.8" stroke="#30501a" stroke-opacity="0.16" stroke-width="0.9"/>
<line x1="742.5" y1="151.7" x2="771.0" y2="150.2" stroke="#30501a" stroke-opacity="0.36" stroke-width="1.10"/>
<line x1="771.0" y1="150.2" x2="746.2" y2="116.2" stroke="#30501a" stroke-opacity="0.29" stroke-width="0.9"/>
<line x1="717.3" y1="116.7" x2="746.2" y2="116.2" stroke="#30501a" stroke-opacity="0.36" stroke-width="1.10"/>
<line x1="746.2" y1="116.2" x2="722.0" y2="83.2" stroke="#30501a" stroke-opacity="0.29" stroke-width="0.9"/>
<line x1="692.8" y1="82.8" x2="722.0" y2="83.2" stroke="#30501a" stroke-opacity="0.36" stroke-width="1.10"/>
<line x1="722.0" y1="83.2" x2="698.5" y2="51.3" stroke="#30501a" stroke-opacity="0.29" stroke-width="0.9"/>
<line x1="669.1" y1="50.0" x2="698.5" y2="51.3" stroke="#30501a" stroke-opacity="0.36" stroke-width="1.10"/>
<line x1="698.5" y1="51.3" x2="675.6" y2="20.3" stroke="#30501a" stroke-opacity="0.29" stroke-width="0.9"/>
<line x1="646.0" y1="18.2" x2="675.6" y2="20.3" stroke="#30501a" stroke-opacity="0.36" stroke-width="1.10"/>
<line x1="675.6" y1="20.3" x2="653.4" y2="-9.7" stroke="#30501a" stroke-opacity="0.29" stroke-width="0.9"/>
<line x1="623.5" y1="-12.6" x2="653.4" y2="-9.7" stroke="#30501a" stroke-opacity="0.36" stroke-width="1.10"/>
<line x1="653.4" y1="-9.7" x2="631.7" y2="-38.9" stroke="#30501a" stroke-opacity="0.29" stroke-width="0.9"/>
<line x1="601.6" y1="-42.4" x2="631.7" y2="-38.9" stroke="#30501a" stroke-opacity="0.36" stroke-width="1.10"/>
<line x1="631.7" y1="-38.9" x2="610.5" y2="-67.2" stroke="#30501a" stroke-opacity="0.29" stroke-width="0.9"/>
<line x1="1065.2" y1="556.5" x2="1086.9" y2="541.5" stroke="#30501a" stroke-opacity="0.80" stroke-width="1.70"/>
<line x1="1086.9" y1="541.5" x2="1054.2" y2="497.0" stroke="#30501a" stroke-opacity="0.15" stroke-width="0.9"/>
<line x1="1031.7" y1="510.4" x2="1054.2" y2="497.0" stroke="#30501a" stroke-opacity="0.80" stroke-width="1.70"/>
<line x1="1054.2" y1="497.0" x2="1022.3" y2="453.6" stroke="#30501a" stroke-opacity="0.15" stroke-width="0.9"/>
<line x1="999.2" y1="465.4" x2="1022.3" y2="453.6" stroke="#30501a" stroke-opacity="0.80" stroke-width="1.70"/>
<line x1="1022.3" y1="453.6" x2="991.3" y2="411.4" stroke="#30501a" stroke-opacity="0.15" stroke-width="0.9"/>
<line x1="967.6" y1="421.6" x2="991.3" y2="411.4" stroke="#30501a" stroke-opacity="0.79" stroke-width="1.68"/>
<line x1="991.3" y1="411.4" x2="961.2" y2="370.4" stroke="#30501a" stroke-opacity="0.15" stroke-width="0.9"/>
<line x1="936.9" y1="379.0" x2="961.2" y2="370.4" stroke="#30501a" stroke-opacity="0.36" stroke-width="1.15"/>
<line x1="961.2" y1="370.4" x2="931.9" y2="330.5" stroke="#30501a" stroke-opacity="0.15" stroke-width="0.9"/>
<line x1="907.1" y1="337.8" x2="931.9" y2="330.5" stroke="#30501a" stroke-opacity="0.32" stroke-width="1.10"/>
<line x1="931.9" y1="330.5" x2="903.5" y2="291.9" stroke="#30501a" stroke-opacity="0.28" stroke-width="0.9"/>
<line x1="771.0" y1="150.2" x2="797.9" y2="148.8" stroke="#30501a" stroke-opacity="0.32" stroke-width="1.10"/>
<line x1="797.9" y1="148.8" x2="773.4" y2="115.7" stroke="#30501a" stroke-opacity="0.28" stroke-width="0.9"/>
<line x1="746.2" y1="116.2" x2="773.4" y2="115.7" stroke="#30501a" stroke-opacity="0.32" stroke-width="1.10"/>
<line x1="773.4" y1="115.7" x2="749.5" y2="83.7" stroke="#30501a" stroke-opacity="0.28" stroke-width="0.9"/>
<line x1="722.0" y1="83.2" x2="749.5" y2="83.7" stroke="#30501a" stroke-opacity="0.32" stroke-width="1.10"/>
<line x1="749.5" y1="83.7" x2="726.3" y2="52.5" stroke="#30501a" stroke-opacity="0.28" stroke-width="0.9"/>
<line x1="698.5" y1="51.3" x2="726.3" y2="52.5" stroke="#30501a" stroke-opacity="0.32" stroke-width="1.10"/>
<line x1="726.3" y1="52.5" x2="703.7" y2="22.3" stroke="#30501a" stroke-opacity="0.28" stroke-width="0.9"/>
<line x1="675.6" y1="20.3" x2="703.7" y2="22.3" stroke="#30501a" stroke-opacity="0.32" stroke-width="1.10"/>
<line x1="703.7" y1="22.3" x2="681.7" y2="-7.0" stroke="#30501a" stroke-opacity="0.28" stroke-width="0.9"/>
<line x1="653.4" y1="-9.7" x2="681.7" y2="-7.0" stroke="#30501a" stroke-opacity="0.32" stroke-width="1.10"/>
<line x1="681.7" y1="-7.0" x2="660.2" y2="-35.5" stroke="#30501a" stroke-opacity="0.28" stroke-width="0.9"/>
<line x1="631.7" y1="-38.9" x2="660.2" y2="-35.5" stroke="#30501a" stroke-opacity="0.32" stroke-width="1.10"/>
<line x1="660.2" y1="-35.5" x2="639.3" y2="-63.2" stroke="#30501a" stroke-opacity="0.28" stroke-width="0.9"/>
<line x1="1086.9" y1="541.5" x2="1107.2" y2="527.4" stroke="#30501a" stroke-opacity="0.80" stroke-width="1.70"/>
<line x1="1107.2" y1="527.4" x2="1075.2" y2="484.5" stroke="#30501a" stroke-opacity="0.15" stroke-width="0.9"/>
<line x1="1054.2" y1="497.0" x2="1075.2" y2="484.5" stroke="#30501a" stroke-opacity="0.80" stroke-width="1.70"/>
<line x1="1075.2" y1="484.5" x2="1043.9" y2="442.7" stroke="#30501a" stroke-opacity="0.15" stroke-width="0.9"/>
<line x1="1022.3" y1="453.6" x2="1043.9" y2="442.7" stroke="#30501a" stroke-opacity="0.80" stroke-width="1.70"/>
<line x1="1043.9" y1="442.7" x2="1013.6" y2="401.9" stroke="#30501a" stroke-opacity="0.15" stroke-width="0.9"/>
<line x1="991.3" y1="411.4" x2="1013.6" y2="401.9" stroke="#30501a" stroke-opacity="0.79" stroke-width="1.68"/>
<line x1="1013.6" y1="401.9" x2="984.0" y2="362.2" stroke="#30501a" stroke-opacity="0.15" stroke-width="0.9"/>
<line x1="961.2" y1="370.4" x2="984.0" y2="362.2" stroke="#30501a" stroke-opacity="0.32" stroke-width="1.15"/>
<line x1="984.0" y1="362.2" x2="955.3" y2="323.7" stroke="#30501a" stroke-opacity="0.15" stroke-width="0.9"/>
<line x1="931.9" y1="330.5" x2="955.3" y2="323.7" stroke="#30501a" stroke-opacity="0.28" stroke-width="1.10"/>
<line x1="955.3" y1="323.7" x2="927.4" y2="286.3" stroke="#30501a" stroke-opacity="0.27" stroke-width="0.9"/>
<line x1="903.5" y1="291.9" x2="927.4" y2="286.3" stroke="#30501a" stroke-opacity="0.28" stroke-width="1.10"/>
<line x1="927.4" y1="286.3" x2="900.2" y2="250.0" stroke="#30501a" stroke-opacity="0.27" stroke-width="0.9"/>
<line x1="797.9" y1="148.8" x2="823.4" y2="147.5" stroke="#30501a" stroke-opacity="0.28" stroke-width="1.10"/>
<line x1="823.4" y1="147.5" x2="799.2" y2="115.3" stroke="#30501a" stroke-opacity="0.27" stroke-width="0.9"/>
<line x1="773.4" y1="115.7" x2="799.2" y2="115.3" stroke="#30501a" stroke-opacity="0.28" stroke-width="1.10"/>
<line x1="799.2" y1="115.3" x2="775.6" y2="84.0" stroke="#30501a" stroke-opacity="0.27" stroke-width="0.9"/>
<line x1="749.5" y1="83.7" x2="775.6" y2="84.0" stroke="#30501a" stroke-opacity="0.28" stroke-width="1.10"/>
<line x1="775.6" y1="84.0" x2="752.7" y2="53.7" stroke="#30501a" stroke-opacity="0.27" stroke-width="0.9"/>
<line x1="726.3" y1="52.5" x2="752.7" y2="53.7" stroke="#30501a" stroke-opacity="0.28" stroke-width="1.10"/>
<line x1="752.7" y1="53.7" x2="730.3" y2="24.3" stroke="#30501a" stroke-opacity="0.27" stroke-width="0.9"/>
<line x1="703.7" y1="22.3" x2="730.3" y2="24.3" stroke="#30501a" stroke-opacity="0.28" stroke-width="1.10"/>
<line x1="730.3" y1="24.3" x2="708.6" y2="-4.4" stroke="#30501a" stroke-opacity="0.27" stroke-width="0.9"/>
<line x1="681.7" y1="-7.0" x2="708.6" y2="-4.4" stroke="#30501a" stroke-opacity="0.28" stroke-width="1.10"/>
<line x1="708.6" y1="-4.4" x2="687.3" y2="-32.2" stroke="#30501a" stroke-opacity="0.27" stroke-width="0.9"/>
<line x1="660.2" y1="-35.5" x2="687.3" y2="-32.2" stroke="#30501a" stroke-opacity="0.28" stroke-width="1.10"/>
<line x1="687.3" y1="-32.2" x2="666.6" y2="-59.4" stroke="#30501a" stroke-opacity="0.27" stroke-width="0.9"/>
<line x1="1075.2" y1="484.5" x2="1094.9" y2="472.8" stroke="#30501a" stroke-opacity="0.80" stroke-width="1.70"/>
<line x1="1094.9" y1="472.8" x2="1064.3" y2="432.4" stroke="#30501a" stroke-opacity="0.14" stroke-width="0.9"/>
<line x1="1043.9" y1="442.7" x2="1064.3" y2="432.4" stroke="#30501a" stroke-opacity="0.80" stroke-width="1.70"/>
<line x1="1064.3" y1="432.4" x2="1034.5" y2="393.0" stroke="#30501a" stroke-opacity="0.14" stroke-width="0.9"/>
<line x1="1013.6" y1="401.9" x2="1034.5" y2="393.0" stroke="#30501a" stroke-opacity="0.79" stroke-width="1.68"/>
<line x1="1034.5" y1="393.0" x2="1005.5" y2="354.6" stroke="#30501a" stroke-opacity="0.14" stroke-width="0.9"/>
<line x1="984.0" y1="362.2" x2="1005.5" y2="354.6" stroke="#30501a" stroke-opacity="0.29" stroke-width="1.15"/>
<line x1="1005.5" y1="354.6" x2="977.3" y2="317.3" stroke="#30501a" stroke-opacity="0.14" stroke-width="0.9"/>
<line x1="955.3" y1="323.7" x2="977.3" y2="317.3" stroke="#30501a" stroke-opacity="0.24" stroke-width="1.10"/>
<line x1="977.3" y1="317.3" x2="949.8" y2="281.1" stroke="#30501a" stroke-opacity="0.26" stroke-width="0.9"/>
<line x1="927.4" y1="286.3" x2="949.8" y2="281.1" stroke="#30501a" stroke-opacity="0.24" stroke-width="1.10"/>
<line x1="949.8" y1="281.1" x2="923.2" y2="245.8" stroke="#30501a" stroke-opacity="0.26" stroke-width="0.9"/>
<line x1="900.2" y1="250.0" x2="923.2" y2="245.8" stroke="#30501a" stroke-opacity="0.24" stroke-width="1.10"/>
<line x1="923.2" y1="245.8" x2="897.2" y2="211.6" stroke="#30501a" stroke-opacity="0.26" stroke-width="0.9"/>
<line x1="823.4" y1="147.5" x2="847.5" y2="146.2" stroke="#30501a" stroke-opacity="0.24" stroke-width="1.10"/>
<line x1="847.5" y1="146.2" x2="823.6" y2="114.9" stroke="#30501a" stroke-opacity="0.26" stroke-width="0.9"/>
<line x1="799.2" y1="115.3" x2="823.6" y2="114.9" stroke="#30501a" stroke-opacity="0.24" stroke-width="1.10"/>
<line x1="823.6" y1="114.9" x2="800.3" y2="84.4" stroke="#30501a" stroke-opacity="0.26" stroke-width="0.9"/>
<line x1="775.6" y1="84.0" x2="800.3" y2="84.4" stroke="#30501a" stroke-opacity="0.24" stroke-width="1.10"/>
<line x1="800.3" y1="84.4" x2="777.7" y2="54.8" stroke="#30501a" stroke-opacity="0.26" stroke-width="0.9"/>
<line x1="752.7" y1="53.7" x2="777.7" y2="54.8" stroke="#30501a" stroke-opacity="0.24" stroke-width="1.10"/>
<line x1="777.7" y1="54.8" x2="755.6" y2="26.1" stroke="#30501a" stroke-opacity="0.26" stroke-width="0.9"/>
<line x1="730.3" y1="24.2" x2="755.6" y2="26.1" stroke="#30501a" stroke-opacity="0.24" stroke-width="1.10"/>
<line x1="755.6" y1="26.1" x2="734.1" y2="-1.9" stroke="#30501a" stroke-opacity="0.26" stroke-width="0.9"/>
<line x1="708.6" y1="-4.4" x2="734.1" y2="-1.9" stroke="#30501a" stroke-opacity="0.24" stroke-width="1.10"/>
<line x1="734.1" y1="-1.9" x2="713.1" y2="-29.2" stroke="#30501a" stroke-opacity="0.26" stroke-width="0.9"/>
<line x1="687.3" y1="-32.2" x2="713.1" y2="-29.2" stroke="#30501a" stroke-opacity="0.24" stroke-width="1.10"/>
<line x1="713.1" y1="-29.2" x2="692.6" y2="-55.7" stroke="#30501a" stroke-opacity="0.26" stroke-width="0.9"/>
<line x1="1064.3" y1="432.4" x2="1083.4" y2="422.7" stroke="#30501a" stroke-opacity="0.80" stroke-width="1.70"/>
<line x1="1083.4" y1="422.7" x2="1054.2" y2="384.5" stroke="#30501a" stroke-opacity="0.14" stroke-width="0.9"/>
<line x1="1034.5" y1="393.0" x2="1054.2" y2="384.5" stroke="#30501a" stroke-opacity="0.79" stroke-width="1.68"/>
<line x1="1054.2" y1="384.5" x2="1025.8" y2="347.4" stroke="#30501a" stroke-opacity="0.14" stroke-width="0.9"/>
<line x1="1005.5" y1="354.6" x2="1025.8" y2="347.4" stroke="#30501a" stroke-opacity="0.27" stroke-width="1.15"/>
<line x1="1025.8" y1="347.4" x2="998.1" y2="311.3" stroke="#30501a" stroke-opacity="0.14" stroke-width="0.9"/>
<line x1="977.3" y1="317.3" x2="998.1" y2="311.3" stroke="#30501a" stroke-opacity="0.22" stroke-width="1.10"/>
<line x1="998.1" y1="311.3" x2="971.1" y2="276.1" stroke="#30501a" stroke-opacity="0.25" stroke-width="0.9"/>
<line x1="949.8" y1="281.1" x2="971.1" y2="276.1" stroke="#30501a" stroke-opacity="0.22" stroke-width="1.10"/>
<line x1="971.1" y1="276.1" x2="944.9" y2="241.9" stroke="#30501a" stroke-opacity="0.25" stroke-width="0.9"/>
<line x1="923.2" y1="245.8" x2="944.9" y2="241.9" stroke="#30501a" stroke-opacity="0.22" stroke-width="1.10"/>
<line x1="944.9" y1="241.9" x2="919.3" y2="208.7" stroke="#30501a" stroke-opacity="0.25" stroke-width="0.9"/>
<line x1="897.2" y1="211.6" x2="919.3" y2="208.7" stroke="#30501a" stroke-opacity="0.22" stroke-width="1.10"/>
<line x1="919.3" y1="208.7" x2="894.5" y2="176.4" stroke="#30501a" stroke-opacity="0.25" stroke-width="0.9"/>
<line x1="847.5" y1="146.2" x2="870.3" y2="145.0" stroke="#30501a" stroke-opacity="0.22" stroke-width="1.10"/>
<line x1="870.3" y1="145.0" x2="846.8" y2="114.5" stroke="#30501a" stroke-opacity="0.25" stroke-width="0.9"/>
<line x1="823.6" y1="114.9" x2="846.8" y2="114.5" stroke="#30501a" stroke-opacity="0.22" stroke-width="1.10"/>
<line x1="846.8" y1="114.5" x2="823.8" y2="84.8" stroke="#30501a" stroke-opacity="0.25" stroke-width="0.9"/>
<line x1="800.3" y1="84.4" x2="823.8" y2="84.8" stroke="#30501a" stroke-opacity="0.22" stroke-width="1.10"/>
<line x1="823.8" y1="84.8" x2="801.4" y2="55.9" stroke="#30501a" stroke-opacity="0.25" stroke-width="0.9"/>
<line x1="777.7" y1="54.8" x2="801.4" y2="55.9" stroke="#30501a" stroke-opacity="0.22" stroke-width="1.10"/>
<line x1="801.4" y1="55.9" x2="779.6" y2="27.8" stroke="#30501a" stroke-opacity="0.25" stroke-width="0.9"/>
<line x1="755.6" y1="26.1" x2="779.6" y2="27.8" stroke="#30501a" stroke-opacity="0.22" stroke-width="1.10"/>
<line x1="779.6" y1="27.8" x2="758.3" y2="0.5" stroke="#30501a" stroke-opacity="0.25" stroke-width="0.9"/>
<line x1="734.1" y1="-1.9" x2="758.3" y2="0.5" stroke="#30501a" stroke-opacity="0.22" stroke-width="1.10"/>
<line x1="758.3" y1="0.5" x2="737.6" y2="-26.2" stroke="#30501a" stroke-opacity="0.25" stroke-width="0.9"/>
<line x1="713.1" y1="-29.2" x2="737.6" y2="-26.2" stroke="#30501a" stroke-opacity="0.22" stroke-width="1.10"/>
<line x1="737.6" y1="-26.2" x2="717.3" y2="-52.2" stroke="#30501a" stroke-opacity="0.25" stroke-width="0.9"/>
<line x1="1083.4" y1="422.7" x2="1101.5" y2="413.5" stroke="#30501a" stroke-opacity="0.80" stroke-width="1.70"/>
<line x1="1101.5" y1="413.5" x2="1072.9" y2="376.6" stroke="#30501a" stroke-opacity="0.13" stroke-width="0.9"/>
<line x1="1054.2" y1="384.5" x2="1072.9" y2="376.6" stroke="#30501a" stroke-opacity="0.79" stroke-width="1.68"/>
<line x1="1072.9" y1="376.6" x2="1044.9" y2="340.6" stroke="#30501a" stroke-opacity="0.13" stroke-width="0.9"/>
<line x1="1025.8" y1="347.4" x2="1044.9" y2="340.6" stroke="#30501a" stroke-opacity="0.27" stroke-width="1.15"/>
<line x1="1044.9" y1="340.6" x2="1017.7" y2="305.5" stroke="#30501a" stroke-opacity="0.13" stroke-width="0.9"/>
<line x1="998.1" y1="311.3" x2="1017.7" y2="305.5" stroke="#30501a" stroke-opacity="0.22" stroke-width="1.10"/>
<line x1="1017.7" y1="305.5" x2="991.2" y2="271.4" stroke="#30501a" stroke-opacity="0.24" stroke-width="0.9"/>
<line x1="971.1" y1="276.1" x2="991.2" y2="271.4" stroke="#30501a" stroke-opacity="0.22" stroke-width="1.10"/>
<line x1="991.2" y1="271.4" x2="965.4" y2="238.2" stroke="#30501a" stroke-opacity="0.24" stroke-width="0.9"/>
<line x1="944.9" y1="241.9" x2="965.4" y2="238.2" stroke="#30501a" stroke-opacity="0.22" stroke-width="1.10"/>
<line x1="965.4" y1="238.2" x2="940.3" y2="205.9" stroke="#30501a" stroke-opacity="0.24" stroke-width="0.9"/>
<line x1="919.3" y1="208.7" x2="940.3" y2="205.9" stroke="#30501a" stroke-opacity="0.22" stroke-width="1.10"/>
<line x1="940.3" y1="205.9" x2="915.8" y2="174.4" stroke="#30501a" stroke-opacity="0.24" stroke-width="0.9"/>
<line x1="894.5" y1="176.4" x2="915.8" y2="174.4" stroke="#30501a" stroke-opacity="0.22" stroke-width="1.10"/>
<line x1="915.8" y1="174.4" x2="892.0" y2="143.9" stroke="#30501a" stroke-opacity="0.24" stroke-width="0.9"/>
<line x1="870.3" y1="145.0" x2="892.0" y2="143.9" stroke="#30501a" stroke-opacity="0.22" stroke-width="1.10"/>
<line x1="892.0" y1="143.9" x2="868.8" y2="114.1" stroke="#30501a" stroke-opacity="0.24" stroke-width="0.9"/>
<line x1="846.8" y1="114.5" x2="868.8" y2="114.1" stroke="#30501a" stroke-opacity="0.22" stroke-width="1.10"/>
<line x1="868.8" y1="114.1" x2="846.1" y2="85.1" stroke="#30501a" stroke-opacity="0.24" stroke-width="0.9"/>
<line x1="823.8" y1="84.8" x2="846.1" y2="85.1" stroke="#30501a" stroke-opacity="0.22" stroke-width="1.10"/>
<line x1="846.1" y1="85.1" x2="824.0" y2="56.9" stroke="#30501a" stroke-opacity="0.24" stroke-width="0.9"/>
<line x1="801.4" y1="55.9" x2="824.0" y2="56.9" stroke="#30501a" stroke-opacity="0.22" stroke-width="1.10"/>
<line x1="824.0" y1="56.9" x2="802.5" y2="29.5" stroke="#30501a" stroke-opacity="0.24" stroke-width="0.9"/>
<line x1="779.6" y1="27.8" x2="802.5" y2="29.5" stroke="#30501a" stroke-opacity="0.22" stroke-width="1.10"/>
<line x1="802.5" y1="29.5" x2="781.4" y2="2.7" stroke="#30501a" stroke-opacity="0.24" stroke-width="0.9"/>
<line x1="758.3" y1="0.5" x2="781.4" y2="2.7" stroke="#30501a" stroke-opacity="0.22" stroke-width="1.10"/>
<line x1="781.4" y1="2.7" x2="760.9" y2="-23.4" stroke="#30501a" stroke-opacity="0.24" stroke-width="0.9"/>
<line x1="737.6" y1="-26.2" x2="760.9" y2="-23.4" stroke="#30501a" stroke-opacity="0.22" stroke-width="1.10"/>
<line x1="760.9" y1="-23.4" x2="740.8" y2="-48.8" stroke="#30501a" stroke-opacity="0.24" stroke-width="0.9"/>
<line x1="1072.9" y1="376.6" x2="1090.5" y2="369.1" stroke="#30501a" stroke-opacity="0.79" stroke-width="1.68"/>
<line x1="1090.5" y1="369.1" x2="1063.1" y2="334.2" stroke="#30501a" stroke-opacity="0.13" stroke-width="0.9"/>
<line x1="1044.9" y1="340.6" x2="1063.1" y2="334.2" stroke="#30501a" stroke-opacity="0.27" stroke-width="1.15"/>
<line x1="1063.1" y1="334.2" x2="1036.3" y2="300.1" stroke="#30501a" stroke-opacity="0.13" stroke-width="0.9"/>
<line x1="1017.7" y1="305.5" x2="1036.3" y2="300.1" stroke="#30501a" stroke-opacity="0.22" stroke-width="1.10"/>
<line x1="1036.3" y1="300.1" x2="1010.3" y2="267.0" stroke="#30501a" stroke-opacity="0.23" stroke-width="0.9"/>
<line x1="991.2" y1="271.4" x2="1010.3" y2="267.0" stroke="#30501a" stroke-opacity="0.22" stroke-width="1.10"/>
<line x1="1010.3" y1="267.0" x2="984.9" y2="234.7" stroke="#30501a" stroke-opacity="0.23" stroke-width="0.9"/>
<line x1="965.4" y1="238.2" x2="984.9" y2="234.7" stroke="#30501a" stroke-opacity="0.22" stroke-width="1.10"/>
<line x1="984.9" y1="234.7" x2="960.2" y2="203.2" stroke="#30501a" stroke-opacity="0.23" stroke-width="0.9"/>
<line x1="940.3" y1="205.9" x2="960.2" y2="203.2" stroke="#30501a" stroke-opacity="0.22" stroke-width="1.10"/>
<line x1="960.2" y1="203.2" x2="936.1" y2="172.6" stroke="#30501a" stroke-opacity="0.23" stroke-width="0.9"/>
<line x1="915.8" y1="174.4" x2="936.1" y2="172.6" stroke="#30501a" stroke-opacity="0.22" stroke-width="1.10"/>
<line x1="936.1" y1="172.6" x2="912.6" y2="142.8" stroke="#30501a" stroke-opacity="0.23" stroke-width="0.9"/>
<line x1="892.0" y1="143.9" x2="912.6" y2="142.8" stroke="#30501a" stroke-opacity="0.22" stroke-width="1.10"/>
<line x1="912.6" y1="142.8" x2="889.7" y2="113.7" stroke="#30501a" stroke-opacity="0.23" stroke-width="0.9"/>
<line x1="868.8" y1="114.1" x2="889.7" y2="113.7" stroke="#30501a" stroke-opacity="0.22" stroke-width="1.10"/>
<line x1="889.7" y1="113.7" x2="867.3" y2="85.5" stroke="#30501a" stroke-opacity="0.23" stroke-width="0.9"/>
<line x1="846.1" y1="85.1" x2="867.3" y2="85.5" stroke="#30501a" stroke-opacity="0.22" stroke-width="1.10"/>
<line x1="867.3" y1="85.5" x2="845.5" y2="57.9" stroke="#30501a" stroke-opacity="0.23" stroke-width="0.9"/>
<line x1="824.0" y1="56.9" x2="845.5" y2="57.9" stroke="#30501a" stroke-opacity="0.22" stroke-width="1.10"/>
<line x1="845.5" y1="57.9" x2="824.3" y2="31.1" stroke="#30501a" stroke-opacity="0.23" stroke-width="0.9"/>
<line x1="802.5" y1="29.5" x2="824.3" y2="31.1" stroke="#30501a" stroke-opacity="0.22" stroke-width="1.10"/>
<line x1="824.3" y1="31.1" x2="803.5" y2="4.9" stroke="#30501a" stroke-opacity="0.23" stroke-width="0.9"/>
<line x1="781.4" y1="2.7" x2="803.5" y2="4.9" stroke="#30501a" stroke-opacity="0.22" stroke-width="1.10"/>
<line x1="803.5" y1="4.9" x2="783.2" y2="-20.7" stroke="#30501a" stroke-opacity="0.23" stroke-width="0.9"/>
<line x1="760.9" y1="-23.4" x2="783.2" y2="-20.7" stroke="#30501a" stroke-opacity="0.22" stroke-width="1.10"/>
<line x1="783.2" y1="-20.7" x2="763.3" y2="-45.6" stroke="#30501a" stroke-opacity="0.23" stroke-width="0.9"/>
<line x1="1090.5" y1="369.1" x2="1107.2" y2="362.0" stroke="#30501a" stroke-opacity="0.79" stroke-width="1.68"/>
<line x1="1107.2" y1="362.0" x2="1080.2" y2="328.1" stroke="#30501a" stroke-opacity="0.12" stroke-width="0.9"/>
<line x1="1063.1" y1="334.2" x2="1080.2" y2="328.1" stroke="#30501a" stroke-opacity="0.27" stroke-width="1.15"/>
<line x1="1080.2" y1="328.1" x2="1054.0" y2="295.0" stroke="#30501a" stroke-opacity="0.12" stroke-width="0.9"/>
<line x1="1036.3" y1="300.1" x2="1054.0" y2="295.0" stroke="#30501a" stroke-opacity="0.22" stroke-width="1.10"/>
<line x1="1054.0" y1="295.0" x2="1028.4" y2="262.7" stroke="#30501a" stroke-opacity="0.22" stroke-width="0.9"/>
<line x1="1010.3" y1="267.0" x2="1028.4" y2="262.7" stroke="#30501a" stroke-opacity="0.22" stroke-width="1.10"/>
<line x1="1028.4" y1="262.7" x2="1003.4" y2="231.3" stroke="#30501a" stroke-opacity="0.22" stroke-width="0.9"/>
<line x1="984.9" y1="234.7" x2="1003.4" y2="231.3" stroke="#30501a" stroke-opacity="0.22" stroke-width="1.10"/>
<line x1="1003.4" y1="231.3" x2="979.1" y2="200.7" stroke="#30501a" stroke-opacity="0.22" stroke-width="0.9"/>
<line x1="960.2" y1="203.2" x2="979.1" y2="200.7" stroke="#30501a" stroke-opacity="0.22" stroke-width="1.10"/>
<line x1="979.1" y1="200.7" x2="955.4" y2="170.8" stroke="#30501a" stroke-opacity="0.22" stroke-width="0.9"/>
<line x1="936.1" y1="172.6" x2="955.4" y2="170.8" stroke="#30501a" stroke-opacity="0.22" stroke-width="1.10"/>
<line x1="955.4" y1="170.8" x2="932.2" y2="141.7" stroke="#30501a" stroke-opacity="0.22" stroke-width="0.9"/>
<line x1="912.6" y1="142.8" x2="932.2" y2="141.7" stroke="#30501a" stroke-opacity="0.22" stroke-width="1.10"/>
<line x1="932.2" y1="141.7" x2="909.6" y2="113.4" stroke="#30501a" stroke-opacity="0.22" stroke-width="0.9"/>
<line x1="889.7" y1="113.7" x2="909.6" y2="113.4" stroke="#30501a" stroke-opacity="0.22" stroke-width="1.10"/>
<line x1="909.6" y1="113.4" x2="887.6" y2="85.8" stroke="#30501a" stroke-opacity="0.22" stroke-width="0.9"/>
<line x1="867.3" y1="85.5" x2="887.6" y2="85.8" stroke="#30501a" stroke-opacity="0.22" stroke-width="1.10"/>
<line x1="887.6" y1="85.8" x2="866.1" y2="58.8" stroke="#30501a" stroke-opacity="0.22" stroke-width="0.9"/>
<line x1="845.5" y1="57.9" x2="866.1" y2="58.8" stroke="#30501a" stroke-opacity="0.22" stroke-width="1.10"/>
<line x1="866.1" y1="58.8" x2="845.0" y2="32.6" stroke="#30501a" stroke-opacity="0.22" stroke-width="0.9"/>
<line x1="824.3" y1="31.1" x2="845.0" y2="32.6" stroke="#30501a" stroke-opacity="0.22" stroke-width="1.10"/>
<line x1="845.0" y1="32.6" x2="824.5" y2="6.9" stroke="#30501a" stroke-opacity="0.22" stroke-width="0.9"/>
<line x1="803.5" y1="4.9" x2="824.5" y2="6.9" stroke="#30501a" stroke-opacity="0.22" stroke-width="1.10"/>
<line x1="824.5" y1="6.9" x2="804.4" y2="-18.1" stroke="#30501a" stroke-opacity="0.22" stroke-width="0.9"/>
<line x1="783.2" y1="-20.7" x2="804.4" y2="-18.1" stroke="#30501a" stroke-opacity="0.22" stroke-width="1.10"/>
<line x1="804.4" y1="-18.1" x2="784.8" y2="-42.5" stroke="#30501a" stroke-opacity="0.22" stroke-width="0.9"/>
<line x1="1080.2" y1="328.1" x2="1096.6" y2="322.3" stroke="#30501a" stroke-opacity="0.27" stroke-width="1.15"/>
<line x1="1096.6" y1="322.3" x2="1070.8" y2="290.1" stroke="#30501a" stroke-opacity="0.12" stroke-width="0.9"/>
<line x1="1054.0" y1="295.0" x2="1070.8" y2="290.1" stroke="#30501a" stroke-opacity="0.22" stroke-width="1.10"/>
<line x1="1070.8" y1="290.1" x2="1045.6" y2="258.7" stroke="#30501a" stroke-opacity="0.21" stroke-width="0.9"/>
<line x1="1028.4" y1="262.7" x2="1045.6" y2="258.7" stroke="#30501a" stroke-opacity="0.22" stroke-width="1.10"/>
<line x1="1045.6" y1="258.7" x2="1021.1" y2="228.1" stroke="#30501a" stroke-opacity="0.21" stroke-width="0.9"/>
<line x1="1003.4" y1="231.3" x2="1021.1" y2="228.1" stroke="#30501a" stroke-opacity="0.22" stroke-width="1.10"/>
<line x1="1021.1" y1="228.1" x2="997.1" y2="198.2" stroke="#30501a" stroke-opacity="0.21" stroke-width="0.9"/>
<line x1="979.1" y1="200.7" x2="997.1" y2="198.2" stroke="#30501a" stroke-opacity="0.22" stroke-width="1.10"/>
<line x1="997.1" y1="198.2" x2="973.7" y2="169.1" stroke="#30501a" stroke-opacity="0.21" stroke-width="0.9"/>
<line x1="955.4" y1="170.8" x2="973.7" y2="169.1" stroke="#30501a" stroke-opacity="0.22" stroke-width="1.10"/>
<line x1="973.7" y1="169.1" x2="950.9" y2="140.8" stroke="#30501a" stroke-opacity="0.21" stroke-width="0.9"/>
<line x1="932.2" y1="141.7" x2="950.9" y2="140.8" stroke="#30501a" stroke-opacity="0.22" stroke-width="1.10"/>
<line x1="950.9" y1="140.8" x2="928.6" y2="113.1" stroke="#30501a" stroke-opacity="0.21" stroke-width="0.9"/>
<line x1="909.6" y1="113.4" x2="928.6" y2="113.1" stroke="#30501a" stroke-opacity="0.22" stroke-width="1.10"/>
<line x1="928.6" y1="113.1" x2="906.9" y2="86.1" stroke="#30501a" stroke-opacity="0.21" stroke-width="0.9"/>
<line x1="887.6" y1="85.8" x2="906.9" y2="86.1" stroke="#30501a" stroke-opacity="0.22" stroke-width="1.10"/>
<line x1="906.9" y1="86.1" x2="885.6" y2="59.7" stroke="#30501a" stroke-opacity="0.21" stroke-width="0.9"/>
<line x1="866.1" y1="58.8" x2="885.6" y2="59.7" stroke="#30501a" stroke-opacity="0.22" stroke-width="1.10"/>
<line x1="885.6" y1="59.7" x2="864.9" y2="34.0" stroke="#30501a" stroke-opacity="0.21" stroke-width="0.9"/>
<line x1="845.0" y1="32.6" x2="864.9" y2="34.0" stroke="#30501a" stroke-opacity="0.22" stroke-width="1.10"/>
<line x1="864.9" y1="34.0" x2="844.6" y2="8.9" stroke="#30501a" stroke-opacity="0.21" stroke-width="0.9"/>
<line x1="824.5" y1="6.9" x2="844.6" y2="8.9" stroke="#30501a" stroke-opacity="0.22" stroke-width="1.10"/>
<line x1="844.6" y1="8.9" x2="824.7" y2="-15.6" stroke="#30501a" stroke-opacity="0.21" stroke-width="0.9"/>
<line x1="804.4" y1="-18.1" x2="824.7" y2="-15.6" stroke="#30501a" stroke-opacity="0.22" stroke-width="1.10"/>
<line x1="824.7" y1="-15.6" x2="805.3" y2="-39.5" stroke="#30501a" stroke-opacity="0.21" stroke-width="0.9"/>
<line x1="784.8" y1="-42.5" x2="805.3" y2="-39.5" stroke="#30501a" stroke-opacity="0.22" stroke-width="1.10"/>
<line x1="805.3" y1="-39.5" x2="786.3" y2="-62.9" stroke="#30501a" stroke-opacity="0.21" stroke-width="0.9"/>
<line x1="1070.8" y1="290.1" x2="1086.7" y2="285.5" stroke="#30501a" stroke-opacity="0.22" stroke-width="1.10"/>
<line x1="1086.7" y1="285.5" x2="1062.0" y2="254.9" stroke="#30501a" stroke-opacity="0.20" stroke-width="0.9"/>
<line x1="1045.6" y1="258.7" x2="1062.0" y2="254.9" stroke="#30501a" stroke-opacity="0.22" stroke-width="1.10"/>
<line x1="1062.0" y1="254.9" x2="1037.8" y2="225.1" stroke="#30501a" stroke-opacity="0.20" stroke-width="0.9"/>
<line x1="1021.1" y1="228.1" x2="1037.8" y2="225.1" stroke="#30501a" stroke-opacity="0.22" stroke-width="1.10"/>
<line x1="1037.8" y1="225.1" x2="1014.3" y2="195.9" stroke="#30501a" stroke-opacity="0.20" stroke-width="0.9"/>
<line x1="997.1" y1="198.2" x2="1014.3" y2="195.9" stroke="#30501a" stroke-opacity="0.22" stroke-width="1.10"/>
<line x1="1014.3" y1="195.9" x2="991.2" y2="167.5" stroke="#30501a" stroke-opacity="0.20" stroke-width="0.9"/>
<line x1="973.7" y1="169.1" x2="991.2" y2="167.5" stroke="#30501a" stroke-opacity="0.22" stroke-width="1.10"/>
<line x1="991.2" y1="167.5" x2="968.7" y2="139.8" stroke="#30501a" stroke-opacity="0.20" stroke-width="0.9"/>
<line x1="950.9" y1="140.8" x2="968.7" y2="139.8" stroke="#30501a" stroke-opacity="0.22" stroke-width="1.10"/>
<line x1="968.7" y1="139.8" x2="946.8" y2="112.8" stroke="#30501a" stroke-opacity="0.20" stroke-width="0.9"/>
<line x1="928.6" y1="113.1" x2="946.8" y2="112.8" stroke="#30501a" stroke-opacity="0.22" stroke-width="1.10"/>
<line x1="946.8" y1="112.8" x2="925.3" y2="86.4" stroke="#30501a" stroke-opacity="0.20" stroke-width="0.9"/>
<line x1="906.9" y1="86.1" x2="925.3" y2="86.4" stroke="#30501a" stroke-opacity="0.22" stroke-width="1.10"/>
<line x1="925.3" y1="86.4" x2="904.3" y2="60.6" stroke="#30501a" stroke-opacity="0.20" stroke-width="0.9"/>
<line x1="885.6" y1="59.7" x2="904.3" y2="60.6" stroke="#30501a" stroke-opacity="0.22" stroke-width="1.10"/>
<line x1="904.3" y1="60.6" x2="883.8" y2="35.4" stroke="#30501a" stroke-opacity="0.20" stroke-width="0.9"/>
<line x1="864.9" y1="34.0" x2="883.8" y2="35.4" stroke="#30501a" stroke-opacity="0.22" stroke-width="1.10"/>
<line x1="883.8" y1="35.4" x2="863.8" y2="10.8" stroke="#30501a" stroke-opacity="0.20" stroke-width="0.9"/>
<line x1="844.6" y1="8.9" x2="863.8" y2="10.8" stroke="#30501a" stroke-opacity="0.22" stroke-width="1.10"/>
<line x1="863.8" y1="10.8" x2="844.2" y2="-13.2" stroke="#30501a" stroke-opacity="0.20" stroke-width="0.9"/>
<line x1="824.7" y1="-15.6" x2="844.2" y2="-13.2" stroke="#30501a" stroke-opacity="0.22" stroke-width="1.10"/>
<line x1="844.2" y1="-13.2" x2="825.0" y2="-36.7" stroke="#30501a" stroke-opacity="0.20" stroke-width="0.9"/>
<line x1="805.3" y1="-39.5" x2="825.0" y2="-36.7" stroke="#30501a" stroke-opacity="0.22" stroke-width="1.10"/>
<line x1="825.0" y1="-36.7" x2="806.2" y2="-59.6" stroke="#30501a" stroke-opacity="0.20" stroke-width="0.9"/>
<line x1="1086.7" y1="285.5" x2="1101.9" y2="281.1" stroke="#30501a" stroke-opacity="0.22" stroke-width="1.10"/>
<line x1="1101.9" y1="281.1" x2="1077.6" y2="251.3" stroke="#30501a" stroke-opacity="0.19" stroke-width="0.9"/>
<line x1="1062.0" y1="254.9" x2="1077.6" y2="251.3" stroke="#30501a" stroke-opacity="0.22" stroke-width="1.10"/>
<line x1="1077.6" y1="251.3" x2="1053.8" y2="222.2" stroke="#30501a" stroke-opacity="0.19" stroke-width="0.9"/>
<line x1="1037.8" y1="225.1" x2="1053.8" y2="222.2" stroke="#30501a" stroke-opacity="0.22" stroke-width="1.10"/>
<line x1="1053.8" y1="222.2" x2="1030.6" y2="193.8" stroke="#30501a" stroke-opacity="0.19" stroke-width="0.9"/>
<line x1="1014.3" y1="195.9" x2="1030.6" y2="193.8" stroke="#30501a" stroke-opacity="0.22" stroke-width="1.10"/>
<line x1="1030.6" y1="193.8" x2="1007.9" y2="166.0" stroke="#30501a" stroke-opacity="0.19" stroke-width="0.9"/>
<line x1="991.2" y1="167.5" x2="1007.9" y2="166.0" stroke="#30501a" stroke-opacity="0.22" stroke-width="1.10"/>
<line x1="1007.9" y1="166.0" x2="985.8" y2="138.9" stroke="#30501a" stroke-opacity="0.19" stroke-width="0.9"/>
<line x1="968.7" y1="139.8" x2="985.8" y2="138.9" stroke="#30501a" stroke-opacity="0.22" stroke-width="1.10"/>
<line x1="985.8" y1="138.9" x2="964.1" y2="112.5" stroke="#30501a" stroke-opacity="0.19" stroke-width="0.9"/>
<line x1="946.8" y1="112.8" x2="964.1" y2="112.5" stroke="#30501a" stroke-opacity="0.22" stroke-width="1.10"/>
<line x1="964.1" y1="112.5" x2="942.9" y2="86.6" stroke="#30501a" stroke-opacity="0.19" stroke-width="0.9"/>
<line x1="925.3" y1="86.4" x2="942.9" y2="86.6" stroke="#30501a" stroke-opacity="0.22" stroke-width="1.10"/>
<line x1="942.9" y1="86.6" x2="922.2" y2="61.4" stroke="#30501a" stroke-opacity="0.19" stroke-width="0.9"/>
<line x1="904.3" y1="60.6" x2="922.2" y2="61.4" stroke="#30501a" stroke-opacity="0.22" stroke-width="1.10"/>
<line x1="922.2" y1="61.4" x2="902.0" y2="36.8" stroke="#30501a" stroke-opacity="0.19" stroke-width="0.9"/>
<line x1="883.8" y1="35.4" x2="902.0" y2="36.8" stroke="#30501a" stroke-opacity="0.22" stroke-width="1.10"/>
<line x1="902.0" y1="36.8" x2="882.2" y2="12.7" stroke="#30501a" stroke-opacity="0.19" stroke-width="0.9"/>
<line x1="863.8" y1="10.8" x2="882.2" y2="12.7" stroke="#30501a" stroke-opacity="0.22" stroke-width="1.10"/>
<line x1="882.2" y1="12.7" x2="862.8" y2="-10.9" stroke="#30501a" stroke-opacity="0.19" stroke-width="0.9"/>
<line x1="844.2" y1="-13.2" x2="862.8" y2="-10.9" stroke="#30501a" stroke-opacity="0.22" stroke-width="1.10"/>
<line x1="862.8" y1="-10.9" x2="843.8" y2="-33.9" stroke="#30501a" stroke-opacity="0.19" stroke-width="0.9"/>
<line x1="825.0" y1="-36.7" x2="843.8" y2="-33.9" stroke="#30501a" stroke-opacity="0.22" stroke-width="1.10"/>
<line x1="843.8" y1="-33.9" x2="825.2" y2="-56.4" stroke="#30501a" stroke-opacity="0.19" stroke-width="0.9"/>
<line x1="1077.6" y1="251.3" x2="1092.5" y2="247.8" stroke="#30501a" stroke-opacity="0.22" stroke-width="1.10"/>
<line x1="1092.5" y1="247.8" x2="1069.1" y2="219.4" stroke="#30501a" stroke-opacity="0.18" stroke-width="0.9"/>
<line x1="1053.8" y1="222.2" x2="1069.1" y2="219.4" stroke="#30501a" stroke-opacity="0.22" stroke-width="1.10"/>
<line x1="1069.1" y1="219.4" x2="1046.2" y2="191.7" stroke="#30501a" stroke-opacity="0.18" stroke-width="0.9"/>
<line x1="1030.6" y1="193.8" x2="1046.2" y2="191.7" stroke="#30501a" stroke-opacity="0.22" stroke-width="1.10"/>
<line x1="1046.2" y1="191.7" x2="1023.9" y2="164.5" stroke="#30501a" stroke-opacity="0.18" stroke-width="0.9"/>
<line x1="1007.9" y1="166.0" x2="1023.9" y2="164.5" stroke="#30501a" stroke-opacity="0.22" stroke-width="1.10"/>
<line x1="1023.9" y1="164.5" x2="1002.0" y2="138.1" stroke="#30501a" stroke-opacity="0.18" stroke-width="0.9"/>
<line x1="985.8" y1="138.9" x2="1002.0" y2="138.1" stroke="#30501a" stroke-opacity="0.22" stroke-width="1.10"/>
<line x1="1002.0" y1="138.1" x2="980.7" y2="112.2" stroke="#30501a" stroke-opacity="0.18" stroke-width="0.9"/>
<line x1="964.1" y1="112.5" x2="980.7" y2="112.2" stroke="#30501a" stroke-opacity="0.22" stroke-width="1.10"/>
<line x1="980.7" y1="112.2" x2="959.8" y2="86.9" stroke="#30501a" stroke-opacity="0.18" stroke-width="0.9"/>
<line x1="942.9" y1="86.6" x2="959.8" y2="86.9" stroke="#30501a" stroke-opacity="0.22" stroke-width="1.10"/>
<line x1="959.8" y1="86.9" x2="939.3" y2="62.2" stroke="#30501a" stroke-opacity="0.18" stroke-width="0.9"/>
<line x1="922.2" y1="61.4" x2="939.3" y2="62.2" stroke="#30501a" stroke-opacity="0.22" stroke-width="1.10"/>
<line x1="939.3" y1="62.2" x2="919.3" y2="38.0" stroke="#30501a" stroke-opacity="0.18" stroke-width="0.9"/>
<line x1="902.0" y1="36.8" x2="919.3" y2="38.0" stroke="#30501a" stroke-opacity="0.22" stroke-width="1.10"/>
<line x1="919.3" y1="38.0" x2="899.8" y2="14.4" stroke="#30501a" stroke-opacity="0.18" stroke-width="0.9"/>
<line x1="882.2" y1="12.7" x2="899.8" y2="14.4" stroke="#30501a" stroke-opacity="0.22" stroke-width="1.10"/>
<line x1="899.8" y1="14.4" x2="880.6" y2="-8.7" stroke="#30501a" stroke-opacity="0.18" stroke-width="0.9"/>
<line x1="862.8" y1="-10.9" x2="880.6" y2="-8.7" stroke="#30501a" stroke-opacity="0.22" stroke-width="1.10"/>
<line x1="880.6" y1="-8.7" x2="861.8" y2="-31.3" stroke="#30501a" stroke-opacity="0.18" stroke-width="0.9"/>
<line x1="843.8" y1="-33.9" x2="861.8" y2="-31.3" stroke="#30501a" stroke-opacity="0.22" stroke-width="1.10"/>
<line x1="861.8" y1="-31.3" x2="843.4" y2="-53.4" stroke="#30501a" stroke-opacity="0.18" stroke-width="0.9"/>
<line x1="1069.1" y1="219.4" x2="1083.7" y2="216.8" stroke="#30501a" stroke-opacity="0.22" stroke-width="1.10"/>
<line x1="1083.7" y1="216.8" x2="1061.2" y2="189.6" stroke="#30501a" stroke-opacity="0.17" stroke-width="0.9"/>
<line x1="1046.2" y1="191.7" x2="1061.2" y2="189.6" stroke="#30501a" stroke-opacity="0.22" stroke-width="1.10"/>
<line x1="1061.2" y1="189.6" x2="1039.2" y2="163.2" stroke="#30501a" stroke-opacity="0.17" stroke-width="0.9"/>
<line x1="1023.9" y1="164.5" x2="1039.2" y2="163.2" stroke="#30501a" stroke-opacity="0.22" stroke-width="1.10"/>
<line x1="1039.2" y1="163.2" x2="1017.6" y2="137.3" stroke="#30501a" stroke-opacity="0.17" stroke-width="0.9"/>
<line x1="1002.0" y1="138.1" x2="1017.6" y2="137.3" stroke="#30501a" stroke-opacity="0.22" stroke-width="1.10"/>
<line x1="1017.6" y1="137.3" x2="996.6" y2="111.9" stroke="#30501a" stroke-opacity="0.17" stroke-width="0.9"/>
<line x1="980.7" y1="112.2" x2="996.6" y2="111.9" stroke="#30501a" stroke-opacity="0.22" stroke-width="1.10"/>
<line x1="996.6" y1="111.9" x2="975.9" y2="87.2" stroke="#30501a" stroke-opacity="0.17" stroke-width="0.9"/>
<line x1="959.8" y1="86.9" x2="975.9" y2="87.2" stroke="#30501a" stroke-opacity="0.22" stroke-width="1.10"/>
<line x1="975.9" y1="87.2" x2="955.8" y2="63.0" stroke="#30501a" stroke-opacity="0.17" stroke-width="0.9"/>
<line x1="939.3" y1="62.2" x2="955.8" y2="63.0" stroke="#30501a" stroke-opacity="0.22" stroke-width="1.10"/>
<line x1="955.8" y1="63.0" x2="936.0" y2="39.3" stroke="#30501a" stroke-opacity="0.17" stroke-width="0.9"/>
<line x1="919.3" y1="38.0" x2="936.0" y2="39.3" stroke="#30501a" stroke-opacity="0.22" stroke-width="1.10"/>
<line x1="936.0" y1="39.3" x2="916.7" y2="16.1" stroke="#30501a" stroke-opacity="0.17" stroke-width="0.9"/>
<line x1="899.8" y1="14.4" x2="916.7" y2="16.1" stroke="#30501a" stroke-opacity="0.22" stroke-width="1.10"/>
<line x1="916.7" y1="16.1" x2="897.7" y2="-6.6" stroke="#30501a" stroke-opacity="0.17" stroke-width="0.9"/>
<line x1="880.6" y1="-8.7" x2="897.7" y2="-6.6" stroke="#30501a" stroke-opacity="0.22" stroke-width="1.10"/>
<line x1="897.7" y1="-6.6" x2="879.2" y2="-28.7" stroke="#30501a" stroke-opacity="0.17" stroke-width="0.9"/>
<line x1="861.8" y1="-31.3" x2="879.2" y2="-28.7" stroke="#30501a" stroke-opacity="0.22" stroke-width="1.10"/>
<line x1="879.2" y1="-28.7" x2="861.0" y2="-50.5" stroke="#30501a" stroke-opacity="0.17" stroke-width="0.9"/>
<line x1="1083.7" y1="216.8" x2="1097.7" y2="214.2" stroke="#30501a" stroke-opacity="0.22" stroke-width="1.10"/>
<line x1="1097.7" y1="214.2" x2="1075.5" y2="187.7" stroke="#30501a" stroke-opacity="0.16" stroke-width="0.9"/>
<line x1="1061.2" y1="189.6" x2="1075.5" y2="187.7" stroke="#30501a" stroke-opacity="0.22" stroke-width="1.10"/>
<line x1="1075.5" y1="187.7" x2="1053.8" y2="161.8" stroke="#30501a" stroke-opacity="0.16" stroke-width="0.9"/>
<line x1="1039.2" y1="163.2" x2="1053.8" y2="161.8" stroke="#30501a" stroke-opacity="0.22" stroke-width="1.10"/>
<line x1="1053.8" y1="161.8" x2="1032.5" y2="136.5" stroke="#30501a" stroke-opacity="0.16" stroke-width="0.9"/>
<line x1="1017.6" y1="137.3" x2="1032.5" y2="136.5" stroke="#30501a" stroke-opacity="0.22" stroke-width="1.10"/>
<line x1="1032.5" y1="136.5" x2="1011.8" y2="111.7" stroke="#30501a" stroke-opacity="0.16" stroke-width="0.9"/>
<line x1="996.6" y1="111.9" x2="1011.8" y2="111.7" stroke="#30501a" stroke-opacity="0.22" stroke-width="1.10"/>
<line x1="1011.8" y1="111.7" x2="991.4" y2="87.4" stroke="#30501a" stroke-opacity="0.16" stroke-width="0.9"/>
<line x1="975.9" y1="87.2" x2="991.4" y2="87.4" stroke="#30501a" stroke-opacity="0.22" stroke-width="1.10"/>
<line x1="991.4" y1="87.4" x2="971.5" y2="63.7" stroke="#30501a" stroke-opacity="0.16" stroke-width="0.9"/>
<line x1="955.8" y1="63.0" x2="971.5" y2="63.7" stroke="#30501a" stroke-opacity="0.22" stroke-width="1.10"/>
<line x1="971.5" y1="63.7" x2="952.0" y2="40.5" stroke="#30501a" stroke-opacity="0.16" stroke-width="0.9"/>
<line x1="936.0" y1="39.3" x2="952.0" y2="40.5" stroke="#30501a" stroke-opacity="0.22" stroke-width="1.10"/>
<line x1="952.0" y1="40.5" x2="932.9" y2="17.7" stroke="#30501a" stroke-opacity="0.16" stroke-width="0.9"/>
<line x1="916.7" y1="16.1" x2="932.9" y2="17.7" stroke="#30501a" stroke-opacity="0.22" stroke-width="1.10"/>
<line x1="932.9" y1="17.7" x2="914.2" y2="-4.5" stroke="#30501a" stroke-opacity="0.16" stroke-width="0.9"/>
<line x1="897.7" y1="-6.6" x2="914.2" y2="-4.5" stroke="#30501a" stroke-opacity="0.22" stroke-width="1.10"/>
<line x1="914.2" y1="-4.5" x2="895.8" y2="-26.3" stroke="#30501a" stroke-opacity="0.16" stroke-width="0.9"/>
<line x1="879.2" y1="-28.7" x2="895.8" y2="-26.3" stroke="#30501a" stroke-opacity="0.22" stroke-width="1.10"/>
<line x1="895.8" y1="-26.3" x2="877.8" y2="-47.7" stroke="#30501a" stroke-opacity="0.16" stroke-width="0.9"/>
<line x1="1075.5" y1="187.7" x2="1089.2" y2="185.9" stroke="#30501a" stroke-opacity="0.22" stroke-width="1.10"/>
<line x1="1089.2" y1="185.9" x2="1067.8" y2="160.5" stroke="#30501a" stroke-opacity="0.16" stroke-width="0.9"/>
<line x1="1053.8" y1="161.8" x2="1067.8" y2="160.5" stroke="#30501a" stroke-opacity="0.22" stroke-width="1.10"/>
<line x1="1067.8" y1="160.5" x2="1046.9" y2="135.7" stroke="#30501a" stroke-opacity="0.16" stroke-width="0.9"/>
<line x1="1032.5" y1="136.5" x2="1046.9" y2="135.7" stroke="#30501a" stroke-opacity="0.22" stroke-width="1.10"/>
<line x1="1046.9" y1="135.7" x2="1026.4" y2="111.4" stroke="#30501a" stroke-opacity="0.16" stroke-width="0.9"/>
<line x1="1011.8" y1="111.7" x2="1026.4" y2="111.4" stroke="#30501a" stroke-opacity="0.22" stroke-width="1.10"/>
<line x1="1026.4" y1="111.4" x2="1006.3" y2="87.7" stroke="#30501a" stroke-opacity="0.16" stroke-width="0.9"/>
<line x1="991.4" y1="87.4" x2="1006.3" y2="87.7" stroke="#30501a" stroke-opacity="0.22" stroke-width="1.10"/>
<line x1="1006.3" y1="87.7" x2="986.6" y2="64.4" stroke="#30501a" stroke-opacity="0.16" stroke-width="0.9"/>
<line x1="971.5" y1="63.7" x2="986.6" y2="64.4" stroke="#30501a" stroke-opacity="0.22" stroke-width="1.10"/>
<line x1="986.6" y1="64.4" x2="967.3" y2="41.6" stroke="#30501a" stroke-opacity="0.16" stroke-width="0.9"/>
<line x1="952.0" y1="40.5" x2="967.3" y2="41.6" stroke="#30501a" stroke-opacity="0.22" stroke-width="1.10"/>
<line x1="967.3" y1="41.6" x2="948.5" y2="19.3" stroke="#30501a" stroke-opacity="0.16" stroke-width="0.9"/>
<line x1="932.9" y1="17.7" x2="948.5" y2="19.3" stroke="#30501a" stroke-opacity="0.22" stroke-width="1.10"/>
<line x1="948.5" y1="19.3" x2="929.9" y2="-2.6" stroke="#30501a" stroke-opacity="0.16" stroke-width="0.9"/>
<line x1="914.2" y1="-4.5" x2="929.9" y2="-2.6" stroke="#30501a" stroke-opacity="0.22" stroke-width="1.10"/>
<line x1="929.9" y1="-2.6" x2="911.8" y2="-24.0" stroke="#30501a" stroke-opacity="0.16" stroke-width="0.9"/>
<line x1="895.8" y1="-26.3" x2="911.8" y2="-24.0" stroke="#30501a" stroke-opacity="0.22" stroke-width="1.10"/>
<line x1="911.8" y1="-24.0" x2="894.0" y2="-44.9" stroke="#30501a" stroke-opacity="0.16" stroke-width="0.9"/>
<line x1="1067.8" y1="160.5" x2="1081.2" y2="159.3" stroke="#30501a" stroke-opacity="0.22" stroke-width="1.10"/>
<line x1="1081.2" y1="159.3" x2="1060.6" y2="135.0" stroke="#30501a" stroke-opacity="0.16" stroke-width="0.9"/>
<line x1="1046.9" y1="135.7" x2="1060.6" y2="135.0" stroke="#30501a" stroke-opacity="0.22" stroke-width="1.10"/>
<line x1="1060.6" y1="135.0" x2="1040.4" y2="111.2" stroke="#30501a" stroke-opacity="0.16" stroke-width="0.9"/>
<line x1="1026.4" y1="111.4" x2="1040.4" y2="111.2" stroke="#30501a" stroke-opacity="0.22" stroke-width="1.10"/>
<line x1="1040.4" y1="111.2" x2="1020.5" y2="87.9" stroke="#30501a" stroke-opacity="0.16" stroke-width="0.9"/>
<line x1="1006.3" y1="87.7" x2="1020.5" y2="87.9" stroke="#30501a" stroke-opacity="0.22" stroke-width="1.10"/>
<line x1="1020.5" y1="87.9" x2="1001.1" y2="65.1" stroke="#30501a" stroke-opacity="0.16" stroke-width="0.9"/>
<line x1="986.6" y1="64.4" x2="1001.1" y2="65.1" stroke="#30501a" stroke-opacity="0.22" stroke-width="1.10"/>
<line x1="1001.1" y1="65.1" x2="982.1" y2="42.7" stroke="#30501a" stroke-opacity="0.16" stroke-width="0.9"/>
<line x1="967.3" y1="41.6" x2="982.1" y2="42.7" stroke="#30501a" stroke-opacity="0.22" stroke-width="1.10"/>
<line x1="982.1" y1="42.7" x2="963.4" y2="20.8" stroke="#30501a" stroke-opacity="0.16" stroke-width="0.9"/>
<line x1="948.5" y1="19.3" x2="963.4" y2="20.8" stroke="#30501a" stroke-opacity="0.22" stroke-width="1.10"/>
<line x1="963.4" y1="20.8" x2="945.1" y2="-0.7" stroke="#30501a" stroke-opacity="0.16" stroke-width="0.9"/>
<line x1="929.9" y1="-2.6" x2="945.1" y2="-0.7" stroke="#30501a" stroke-opacity="0.22" stroke-width="1.10"/>
<line x1="945.1" y1="-0.7" x2="927.2" y2="-21.7" stroke="#30501a" stroke-opacity="0.16" stroke-width="0.9"/>
<line x1="911.8" y1="-24.0" x2="927.2" y2="-21.7" stroke="#30501a" stroke-opacity="0.22" stroke-width="1.10"/>
<line x1="927.2" y1="-21.7" x2="909.6" y2="-42.3" stroke="#30501a" stroke-opacity="0.16" stroke-width="0.9"/>
<line x1="1081.2" y1="159.3" x2="1094.1" y2="158.1" stroke="#30501a" stroke-opacity="0.22" stroke-width="1.10"/>
<line x1="1094.1" y1="158.1" x2="1073.8" y2="134.3" stroke="#30501a" stroke-opacity="0.16" stroke-width="0.9"/>
<line x1="1060.6" y1="135.0" x2="1073.8" y2="134.3" stroke="#30501a" stroke-opacity="0.22" stroke-width="1.10"/>
<line x1="1073.8" y1="134.3" x2="1053.8" y2="111.0" stroke="#30501a" stroke-opacity="0.16" stroke-width="0.9"/>
<line x1="1040.4" y1="111.2" x2="1053.8" y2="111.0" stroke="#30501a" stroke-opacity="0.22" stroke-width="1.10"/>
<line x1="1053.8" y1="111.0" x2="1034.3" y2="88.1" stroke="#30501a" stroke-opacity="0.16" stroke-width="0.9"/>
<line x1="1020.5" y1="87.9" x2="1034.3" y2="88.1" stroke="#30501a" stroke-opacity="0.22" stroke-width="1.10"/>
<line x1="1034.3" y1="88.1" x2="1015.1" y2="65.7" stroke="#30501a" stroke-opacity="0.16" stroke-width="0.9"/>
<line x1="1001.1" y1="65.1" x2="1015.1" y2="65.7" stroke="#30501a" stroke-opacity="0.22" stroke-width="1.10"/>
<line x1="1015.1" y1="65.7" x2="996.3" y2="43.8" stroke="#30501a" stroke-opacity="0.16" stroke-width="0.9"/>
<line x1="982.1" y1="42.7" x2="996.3" y2="43.8" stroke="#30501a" stroke-opacity="0.22" stroke-width="1.10"/>
<line x1="996.3" y1="43.8" x2="977.8" y2="22.3" stroke="#30501a" stroke-opacity="0.16" stroke-width="0.9"/>
<line x1="963.4" y1="20.8" x2="977.8" y2="22.3" stroke="#30501a" stroke-opacity="0.22" stroke-width="1.10"/>
<line x1="977.8" y1="22.3" x2="959.8" y2="1.2" stroke="#30501a" stroke-opacity="0.16" stroke-width="0.9"/>
<line x1="945.1" y1="-0.7" x2="959.8" y2="1.2" stroke="#30501a" stroke-opacity="0.22" stroke-width="1.10"/>
<line x1="959.8" y1="1.2" x2="942.0" y2="-19.5" stroke="#30501a" stroke-opacity="0.16" stroke-width="0.9"/>
<line x1="927.2" y1="-21.7" x2="942.0" y2="-19.5" stroke="#30501a" stroke-opacity="0.22" stroke-width="1.10"/>
<line x1="942.0" y1="-19.5" x2="924.6" y2="-39.8" stroke="#30501a" stroke-opacity="0.16" stroke-width="0.9"/>
<line x1="909.6" y1="-42.3" x2="924.6" y2="-39.8" stroke="#30501a" stroke-opacity="0.22" stroke-width="1.10"/>
<line x1="924.6" y1="-39.8" x2="907.5" y2="-59.7" stroke="#30501a" stroke-opacity="0.16" stroke-width="0.9"/>
<line x1="1073.8" y1="134.3" x2="1086.4" y2="133.6" stroke="#30501a" stroke-opacity="0.22" stroke-width="1.10"/>
<line x1="1086.4" y1="133.6" x2="1066.7" y2="110.8" stroke="#30501a" stroke-opacity="0.16" stroke-width="0.9"/>
<line x1="1053.8" y1="111.0" x2="1066.7" y2="110.8" stroke="#30501a" stroke-opacity="0.22" stroke-width="1.10"/>
<line x1="1066.7" y1="110.8" x2="1047.4" y2="88.3" stroke="#30501a" stroke-opacity="0.16" stroke-width="0.9"/>
<line x1="1034.3" y1="88.1" x2="1047.4" y2="88.3" stroke="#30501a" stroke-opacity="0.22" stroke-width="1.10"/>
<line x1="1047.4" y1="88.3" x2="1028.5" y2="66.3" stroke="#30501a" stroke-opacity="0.16" stroke-width="0.9"/>
<line x1="1015.1" y1="65.7" x2="1028.5" y2="66.3" stroke="#30501a" stroke-opacity="0.22" stroke-width="1.10"/>
<line x1="1028.5" y1="66.3" x2="1009.9" y2="44.8" stroke="#30501a" stroke-opacity="0.16" stroke-width="0.9"/>
<line x1="996.3" y1="43.8" x2="1009.9" y2="44.8" stroke="#30501a" stroke-opacity="0.22" stroke-width="1.10"/>
<line x1="1009.9" y1="44.8" x2="991.7" y2="23.7" stroke="#30501a" stroke-opacity="0.16" stroke-width="0.9"/>
<line x1="977.8" y1="22.3" x2="991.7" y2="23.7" stroke="#30501a" stroke-opacity="0.22" stroke-width="1.10"/>
<line x1="991.7" y1="23.7" x2="973.8" y2="2.9" stroke="#30501a" stroke-opacity="0.16" stroke-width="0.9"/>
<line x1="959.8" y1="1.2" x2="973.8" y2="2.9" stroke="#30501a" stroke-opacity="0.22" stroke-width="1.10"/>
<line x1="973.8" y1="2.9" x2="956.3" y2="-17.4" stroke="#30501a" stroke-opacity="0.16" stroke-width="0.9"/>
<line x1="942.0" y1="-19.5" x2="956.3" y2="-17.4" stroke="#30501a" stroke-opacity="0.22" stroke-width="1.10"/>
<line x1="956.3" y1="-17.4" x2="939.1" y2="-37.3" stroke="#30501a" stroke-opacity="0.16" stroke-width="0.9"/>
<line x1="924.6" y1="-39.8" x2="939.1" y2="-37.3" stroke="#30501a" stroke-opacity="0.22" stroke-width="1.10"/>
<line x1="939.1" y1="-37.3" x2="922.1" y2="-56.9" stroke="#30501a" stroke-opacity="0.16" stroke-width="0.9"/>
<line x1="1066.7" y1="110.8" x2="1079.2" y2="110.5" stroke="#30501a" stroke-opacity="0.22" stroke-width="1.10"/>
<line x1="1079.2" y1="110.5" x2="1060.1" y2="88.5" stroke="#30501a" stroke-opacity="0.16" stroke-width="0.9"/>
<line x1="1047.4" y1="88.3" x2="1060.1" y2="88.5" stroke="#30501a" stroke-opacity="0.22" stroke-width="1.10"/>
<line x1="1060.1" y1="88.5" x2="1041.4" y2="66.9" stroke="#30501a" stroke-opacity="0.16" stroke-width="0.9"/>
<line x1="1028.5" y1="66.3" x2="1041.4" y2="66.9" stroke="#30501a" stroke-opacity="0.22" stroke-width="1.10"/>
<line x1="1041.4" y1="66.9" x2="1023.1" y2="45.8" stroke="#30501a" stroke-opacity="0.16" stroke-width="0.9"/>
<line x1="1009.9" y1="44.8" x2="1023.1" y2="45.8" stroke="#30501a" stroke-opacity="0.22" stroke-width="1.10"/>
<line x1="1023.1" y1="45.8" x2="1005.1" y2="25.0" stroke="#30501a" stroke-opacity="0.16" stroke-width="0.9"/>
<line x1="991.7" y1="23.7" x2="1005.1" y2="25.0" stroke="#30501a" stroke-opacity="0.22" stroke-width="1.10"/>
<line x1="1005.1" y1="25.0" x2="987.4" y2="4.6" stroke="#30501a" stroke-opacity="0.16" stroke-width="0.9"/>
<line x1="973.8" y1="2.9" x2="987.4" y2="4.6" stroke="#30501a" stroke-opacity="0.22" stroke-width="1.10"/>
<line x1="987.4" y1="4.6" x2="970.1" y2="-15.4" stroke="#30501a" stroke-opacity="0.16" stroke-width="0.9"/>
<line x1="956.3" y1="-17.4" x2="970.1" y2="-15.4" stroke="#30501a" stroke-opacity="0.22" stroke-width="1.10"/>
<line x1="970.1" y1="-15.4" x2="953.0" y2="-35.0" stroke="#30501a" stroke-opacity="0.16" stroke-width="0.9"/>
<line x1="939.1" y1="-37.3" x2="953.0" y2="-35.0" stroke="#30501a" stroke-opacity="0.22" stroke-width="1.10"/>
<line x1="953.0" y1="-35.0" x2="936.3" y2="-54.2" stroke="#30501a" stroke-opacity="0.16" stroke-width="0.9"/>
<line x1="1079.2" y1="110.5" x2="1091.2" y2="110.3" stroke="#30501a" stroke-opacity="0.22" stroke-width="1.10"/>
<line x1="1091.2" y1="110.3" x2="1072.4" y2="88.7" stroke="#30501a" stroke-opacity="0.16" stroke-width="0.9"/>
<line x1="1060.1" y1="88.5" x2="1072.4" y2="88.7" stroke="#30501a" stroke-opacity="0.22" stroke-width="1.10"/>
<line x1="1072.4" y1="88.7" x2="1053.9" y2="67.5" stroke="#30501a" stroke-opacity="0.16" stroke-width="0.9"/>
<line x1="1041.4" y1="66.9" x2="1053.9" y2="67.5" stroke="#30501a" stroke-opacity="0.22" stroke-width="1.10"/>
<line x1="1053.9" y1="67.5" x2="1035.8" y2="46.7" stroke="#30501a" stroke-opacity="0.16" stroke-width="0.9"/>
<line x1="1023.1" y1="45.8" x2="1035.8" y2="46.7" stroke="#30501a" stroke-opacity="0.22" stroke-width="1.10"/>
<line x1="1035.8" y1="46.7" x2="1018.0" y2="26.3" stroke="#30501a" stroke-opacity="0.16" stroke-width="0.9"/>
<line x1="1005.1" y1="25.0" x2="1018.0" y2="26.3" stroke="#30501a" stroke-opacity="0.22" stroke-width="1.10"/>
<line x1="1018.0" y1="26.3" x2="1000.5" y2="6.3" stroke="#30501a" stroke-opacity="0.16" stroke-width="0.9"/>
<line x1="987.4" y1="4.6" x2="1000.5" y2="6.3" stroke="#30501a" stroke-opacity="0.22" stroke-width="1.10"/>
<line x1="1000.5" y1="6.3" x2="983.3" y2="-13.4" stroke="#30501a" stroke-opacity="0.16" stroke-width="0.9"/>
<line x1="970.1" y1="-15.4" x2="983.3" y2="-13.4" stroke="#30501a" stroke-opacity="0.22" stroke-width="1.10"/>
<line x1="983.3" y1="-13.4" x2="966.5" y2="-32.7" stroke="#30501a" stroke-opacity="0.16" stroke-width="0.9"/>
<line x1="953.0" y1="-35.0" x2="966.5" y2="-32.7" stroke="#30501a" stroke-opacity="0.22" stroke-width="1.10"/>
<line x1="966.5" y1="-32.7" x2="949.9" y2="-51.7" stroke="#30501a" stroke-opacity="0.16" stroke-width="0.9"/>
<line x1="1072.4" y1="88.7" x2="1084.2" y2="88.9" stroke="#30501a" stroke-opacity="0.22" stroke-width="1.10"/>
<line x1="1084.2" y1="88.9" x2="1065.9" y2="68.1" stroke="#30501a" stroke-opacity="0.16" stroke-width="0.9"/>
<line x1="1053.9" y1="67.5" x2="1065.9" y2="68.1" stroke="#30501a" stroke-opacity="0.22" stroke-width="1.10"/>
<line x1="1065.9" y1="68.1" x2="1048.0" y2="47.6" stroke="#30501a" stroke-opacity="0.16" stroke-width="0.9"/>
<line x1="1035.8" y1="46.7" x2="1048.0" y2="47.6" stroke="#30501a" stroke-opacity="0.22" stroke-width="1.10"/>
<line x1="1048.0" y1="47.6" x2="1030.4" y2="27.6" stroke="#30501a" stroke-opacity="0.16" stroke-width="0.9"/>
<line x1="1018.0" y1="26.3" x2="1030.4" y2="27.6" stroke="#30501a" stroke-opacity="0.22" stroke-width="1.10"/>
<line x1="1030.4" y1="27.6" x2="1013.1" y2="7.9" stroke="#30501a" stroke-opacity="0.16" stroke-width="0.9"/>
<line x1="1000.5" y1="6.3" x2="1013.1" y2="7.9" stroke="#30501a" stroke-opacity="0.22" stroke-width="1.10"/>
<line x1="1013.1" y1="7.9" x2="996.2" y2="-11.5" stroke="#30501a" stroke-opacity="0.16" stroke-width="0.9"/>
<line x1="983.3" y1="-13.4" x2="996.2" y2="-11.5" stroke="#30501a" stroke-opacity="0.22" stroke-width="1.10"/>
<line x1="996.2" y1="-11.5" x2="979.5" y2="-30.5" stroke="#30501a" stroke-opacity="0.16" stroke-width="0.9"/>
<line x1="966.5" y1="-32.7" x2="979.5" y2="-30.5" stroke="#30501a" stroke-opacity="0.22" stroke-width="1.10"/>
<line x1="979.5" y1="-30.5" x2="963.1" y2="-49.2" stroke="#30501a" stroke-opacity="0.16" stroke-width="0.9"/>
<line x1="1065.9" y1="68.1" x2="1077.5" y2="68.6" stroke="#30501a" stroke-opacity="0.22" stroke-width="1.10"/>
<line x1="1077.5" y1="68.6" x2="1059.8" y2="48.5" stroke="#30501a" stroke-opacity="0.16" stroke-width="0.9"/>
<line x1="1048.0" y1="47.6" x2="1059.8" y2="48.5" stroke="#30501a" stroke-opacity="0.22" stroke-width="1.10"/>
<line x1="1059.8" y1="48.5" x2="1042.4" y2="28.8" stroke="#30501a" stroke-opacity="0.16" stroke-width="0.9"/>
<line x1="1030.4" y1="27.6" x2="1042.4" y2="28.8" stroke="#30501a" stroke-opacity="0.22" stroke-width="1.10"/>
<line x1="1042.4" y1="28.8" x2="1025.3" y2="9.4" stroke="#30501a" stroke-opacity="0.16" stroke-width="0.9"/>
<line x1="1013.1" y1="7.9" x2="1025.3" y2="9.4" stroke="#30501a" stroke-opacity="0.22" stroke-width="1.10"/>
<line x1="1025.3" y1="9.4" x2="1008.6" y2="-9.6" stroke="#30501a" stroke-opacity="0.16" stroke-width="0.9"/>
<line x1="996.2" y1="-11.5" x2="1008.6" y2="-9.6" stroke="#30501a" stroke-opacity="0.22" stroke-width="1.10"/>
<line x1="1008.6" y1="-9.6" x2="992.1" y2="-28.4" stroke="#30501a" stroke-opacity="0.16" stroke-width="0.9"/>
<line x1="979.5" y1="-30.5" x2="992.1" y2="-28.4" stroke="#30501a" stroke-opacity="0.22" stroke-width="1.10"/>
<line x1="992.1" y1="-28.4" x2="975.8" y2="-46.7" stroke="#30501a" stroke-opacity="0.16" stroke-width="0.9"/>
<line x1="1077.5" y1="68.6" x2="1088.7" y2="69.2" stroke="#30501a" stroke-opacity="0.22" stroke-width="1.10"/>
<line x1="1088.7" y1="69.2" x2="1071.2" y2="49.4" stroke="#30501a" stroke-opacity="0.16" stroke-width="0.9"/>
<line x1="1059.8" y1="48.5" x2="1071.2" y2="49.4" stroke="#30501a" stroke-opacity="0.22" stroke-width="1.10"/>
<line x1="1071.2" y1="49.4" x2="1054.0" y2="30.0" stroke="#30501a" stroke-opacity="0.16" stroke-width="0.9"/>
<line x1="1042.4" y1="28.8" x2="1054.0" y2="30.0" stroke="#30501a" stroke-opacity="0.22" stroke-width="1.10"/>
<line x1="1054.0" y1="30.0" x2="1037.1" y2="10.9" stroke="#30501a" stroke-opacity="0.16" stroke-width="0.9"/>
<line x1="1025.3" y1="9.4" x2="1037.1" y2="10.9" stroke="#30501a" stroke-opacity="0.22" stroke-width="1.10"/>
<line x1="1037.1" y1="10.9" x2="1020.5" y2="-7.9" stroke="#30501a" stroke-opacity="0.16" stroke-width="0.9"/>
<line x1="1008.6" y1="-9.6" x2="1020.5" y2="-7.9" stroke="#30501a" stroke-opacity="0.22" stroke-width="1.10"/>
<line x1="1020.5" y1="-7.9" x2="1004.2" y2="-26.3" stroke="#30501a" stroke-opacity="0.16" stroke-width="0.9"/>
<line x1="992.1" y1="-28.4" x2="1004.2" y2="-26.3" stroke="#30501a" stroke-opacity="0.22" stroke-width="1.10"/>
<line x1="1004.2" y1="-26.3" x2="988.1" y2="-44.4" stroke="#30501a" stroke-opacity="0.16" stroke-width="0.9"/>
<line x1="1071.2" y1="49.4" x2="1082.2" y2="50.2" stroke="#30501a" stroke-opacity="0.22" stroke-width="1.10"/>
<line x1="1082.2" y1="50.2" x2="1065.2" y2="31.1" stroke="#30501a" stroke-opacity="0.16" stroke-width="0.9"/>
<line x1="1054.0" y1="30.0" x2="1065.2" y2="31.1" stroke="#30501a" stroke-opacity="0.22" stroke-width="1.10"/>
<line x1="1065.2" y1="31.1" x2="1048.5" y2="12.3" stroke="#30501a" stroke-opacity="0.16" stroke-width="0.9"/>
<line x1="1037.1" y1="10.9" x2="1048.5" y2="12.3" stroke="#30501a" stroke-opacity="0.22" stroke-width="1.10"/>
<line x1="1048.5" y1="12.3" x2="1032.1" y2="-6.1" stroke="#30501a" stroke-opacity="0.16" stroke-width="0.9"/>
<line x1="1020.5" y1="-7.9" x2="1032.1" y2="-6.1" stroke="#30501a" stroke-opacity="0.22" stroke-width="1.10"/>
<line x1="1032.1" y1="-6.1" x2="1016.0" y2="-24.3" stroke="#30501a" stroke-opacity="0.16" stroke-width="0.9"/>
<line x1="1004.2" y1="-26.3" x2="1016.0" y2="-24.3" stroke="#30501a" stroke-opacity="0.22" stroke-width="1.10"/>
<line x1="1016.0" y1="-24.3" x2="1000.1" y2="-42.1" stroke="#30501a" stroke-opacity="0.16" stroke-width="0.9"/>
<line x1="1065.2" y1="31.1" x2="1076.1" y2="32.2" stroke="#30501a" stroke-opacity="0.22" stroke-width="1.10"/>
<line x1="1076.1" y1="32.2" x2="1059.6" y2="13.7" stroke="#30501a" stroke-opacity="0.16" stroke-width="0.9"/>
<line x1="1048.5" y1="12.3" x2="1059.6" y2="13.7" stroke="#30501a" stroke-opacity="0.22" stroke-width="1.10"/>
<line x1="1059.6" y1="13.7" x2="1043.3" y2="-4.5" stroke="#30501a" stroke-opacity="0.16" stroke-width="0.9"/>
<line x1="1032.1" y1="-6.1" x2="1043.3" y2="-4.5" stroke="#30501a" stroke-opacity="0.22" stroke-width="1.10"/>
<line x1="1043.3" y1="-4.5" x2="1027.3" y2="-22.3" stroke="#30501a" stroke-opacity="0.16" stroke-width="0.9"/>
<line x1="1016.0" y1="-24.3" x2="1027.3" y2="-22.3" stroke="#30501a" stroke-opacity="0.22" stroke-width="1.10"/>
<line x1="1027.3" y1="-22.3" x2="1011.6" y2="-39.9" stroke="#30501a" stroke-opacity="0.16" stroke-width="0.9"/>
<line x1="1000.1" y1="-42.1" x2="1011.6" y2="-39.9" stroke="#30501a" stroke-opacity="0.22" stroke-width="1.10"/>
<line x1="1011.6" y1="-39.9" x2="996.1" y2="-57.2" stroke="#30501a" stroke-opacity="0.16" stroke-width="0.9"/>
<line x1="1076.1" y1="32.2" x2="1086.6" y2="33.3" stroke="#30501a" stroke-opacity="0.22" stroke-width="1.10"/>
<line x1="1086.6" y1="33.3" x2="1070.2" y2="15.1" stroke="#30501a" stroke-opacity="0.16" stroke-width="0.9"/>
<line x1="1059.6" y1="13.7" x2="1070.2" y2="15.1" stroke="#30501a" stroke-opacity="0.22" stroke-width="1.10"/>
<line x1="1070.2" y1="15.1" x2="1054.2" y2="-2.8" stroke="#30501a" stroke-opacity="0.16" stroke-width="0.9"/>
<line x1="1043.3" y1="-4.5" x2="1054.2" y2="-2.8" stroke="#30501a" stroke-opacity="0.22" stroke-width="1.10"/>
<line x1="1054.2" y1="-2.8" x2="1038.3" y2="-20.5" stroke="#30501a" stroke-opacity="0.16" stroke-width="0.9"/>
<line x1="1027.3" y1="-22.3" x2="1038.3" y2="-20.5" stroke="#30501a" stroke-opacity="0.22" stroke-width="1.10"/>
<line x1="1038.3" y1="-20.5" x2="1022.8" y2="-37.8" stroke="#30501a" stroke-opacity="0.16" stroke-width="0.9"/>
<line x1="1011.6" y1="-39.9" x2="1022.8" y2="-37.8" stroke="#30501a" stroke-opacity="0.22" stroke-width="1.10"/>
<line x1="1022.8" y1="-37.8" x2="1007.5" y2="-54.8" stroke="#30501a" stroke-opacity="0.16" stroke-width="0.9"/>
<line x1="1070.2" y1="15.1" x2="1080.6" y2="16.4" stroke="#30501a" stroke-opacity="0.22" stroke-width="1.10"/>
<line x1="1080.6" y1="16.4" x2="1064.7" y2="-1.3" stroke="#30501a" stroke-opacity="0.16" stroke-width="0.9"/>
<line x1="1054.2" y1="-2.8" x2="1064.7" y2="-1.3" stroke="#30501a" stroke-opacity="0.22" stroke-width="1.10"/>
<line x1="1064.7" y1="-1.3" x2="1049.0" y2="-18.6" stroke="#30501a" stroke-opacity="0.16" stroke-width="0.9"/>
<line x1="1038.3" y1="-20.5" x2="1049.0" y2="-18.6" stroke="#30501a" stroke-opacity="0.22" stroke-width="1.10"/>
<line x1="1049.0" y1="-18.6" x2="1033.6" y2="-35.7" stroke="#30501a" stroke-opacity="0.16" stroke-width="0.9"/>
<line x1="1022.8" y1="-37.8" x2="1033.6" y2="-35.7" stroke="#30501a" stroke-opacity="0.22" stroke-width="1.10"/>
<line x1="1033.6" y1="-35.7" x2="1018.4" y2="-52.5" stroke="#30501a" stroke-opacity="0.16" stroke-width="0.9"/>
</svg>
<svg class="dico" style="left:0;top:0" width="290" height="225" viewBox="0 0 290 225">
<defs>
<linearGradient id="g4k" x1="0" y1="0" x2="0" y2="1"><stop offset="0" stop-color="#93c823"/><stop offset="1" stop-color="#67a40c"/></linearGradient>
<linearGradient id="ggw" x1="0" y1="0" x2="0" y2="1"><stop offset="0" stop-color="#f28b4e"/><stop offset="0.5" stop-color="#e04a68"/><stop offset="1" stop-color="#a61f8c"/></linearGradient>
<linearGradient id="gau" x1="0" y1="0" x2="0" y2="1"><stop offset="0" stop-color="#f4675f"/><stop offset="1" stop-color="#dc443c"/></linearGradient>
<linearGradient id="ghb" x1="0" y1="0" x2="0" y2="1"><stop offset="0" stop-color="#e2ac3e"/><stop offset="1" stop-color="#c98f27"/></linearGradient>
<linearGradient id="gscr" x1="0" y1="0" x2="0" y2="1"><stop offset="0" stop-color="#3567b8"/><stop offset="1" stop-color="#2d5fb7"/></linearGradient>
<filter id="sh" x="-20%" y="-20%" width="140%" height="140%"><feGaussianBlur in="SourceAlpha" stdDeviation="0.6"/><feOffset dy="0.6"/><feComponentTransfer><feFuncA type="linear" slope="0.5"/></feComponentTransfer><feMerge><feMergeNode/><feMergeNode in="SourceGraphic"/></feMerge></filter>
</defs>
<!-- 4K video downloader -->
<g filter="url(#sh)">
<circle cx="61.3" cy="38.3" r="12.8" fill="url(#g4k)"/>
<g fill="#fff">
<circle cx="55.6" cy="40.4" r="3.7"/>
<circle cx="61.8" cy="37" r="5.6"/>
<circle cx="67.6" cy="40" r="3.9"/>
<rect x="55.6" y="39" width="12" height="5.3"/>
<rect x="51.9" y="40.4" width="19.6" height="3.9" rx="1.9"/>
</g>
<path d="M62.2 33.4v4.4M60 35.6h4.4" stroke="#62b01c" stroke-width="1.1"/>
</g>
<!-- handbrake -->
<g filter="url(#sh)">
<rect x="119.9" y="27.2" width="21.8" height="22" rx="4" fill="#cf9a32"/>
<g stroke="#4a330c" stroke-width="0.9" opacity="0.6" fill="none">
<path d="M119.9 33l5.4-5.8 5.5 5.8 5.5-5.8 5.4 5.8M119.9 41l5.4-7 5.5 7 5.5-7 5.4 7M119.9 49.2l5.4-7.2 5.5 7.2 5.5-7.2 5.4 7.2"/>
</g>
<rect x="119.9" y="27.2" width="21.8" height="22" rx="4" fill="none" stroke="#5a3e10" stroke-width="0.6" opacity="0.6"/>
<path d="M125.4 40.4a5.7 5.7 0 0 1 9.6-5.6" stroke="#fff" stroke-width="1.7" fill="none"/>
<path d="M136.2 36.4a5.7 5.7 0 0 1-9.6 5.6" stroke="#fff" stroke-width="1.7" fill="none"/>
<path d="M133.6 32.2l3.2 0.6-0.6 3.4z" fill="#fff"/>
<path d="M128 44.4l-3.2-0.6 0.6-3.4z" fill="#fff"/>
</g>
<!-- gwenview -->
<g filter="url(#sh)">
<rect x="189.1" y="27.6" width="21.7" height="21.6" rx="3.6" fill="url(#ggw)"/>
<path d="M192.9 44.8v-5.6l3.6-3 5 4.7 3.1-1.7 2.4 3.4v2.2z" fill="#fff"/>
<circle cx="204.6" cy="34.5" r="2.2" fill="#fff"/>
</g>
<!-- etcher -->
<g filter="url(#sh)">
<path d="M264.6 25.8h9.3v5.9h-9.3z M266.2 27.2v1.5h1.5v-1.5z M270.8 27.2v1.5h1.5v-1.5z" fill="#d4d4d4" fill-rule="evenodd"/>
<rect x="263.1" y="33.9" width="12.7" height="17.1" rx="1" fill="#c9c9c9"/>
</g>
<!-- stm32 trusted -->
<g fill="#2aa9e6">
<path fill-rule="evenodd" d="M59.4 80.5l1.5 0 0.5 2.4a8.6 8.6 0 0 1 2.5 1l2-1.4 2.1 2.1-1.4 2a8.6 8.6 0 0 1 1 2.5l2.4 0.5v3l-2.4 0.5a8.6 8.6 0 0 1-1 2.5l1.4 2-2.1 2.1-2-1.4a8.6 8.6 0 0 1-2.5 1l-0.5 2.4h-3l-0.5-2.4a8.6 8.6 0 0 1-2.5-1l-2 1.4-2.1-2.1 1.4-2a8.6 8.6 0 0 1-1-2.5l-2.4-0.5v-3l2.4-0.5a8.6 8.6 0 0 1 1-2.5l-1.4-2 2.1-2.1 2 1.4a8.6 8.6 0 0 1 2.5-1l0.5-2.4z M59.4 86a5.4 5.4 0 1 0 0.01 0z"/>
<circle cx="59.4" cy="91.4" r="2.6"/>
</g>
<rect x="62.6" y="88.6" width="12.6" height="15.4" fill="#4d7129" opacity="0"/>
<path d="M63.2 94.6h11.4v9h-11.4z" fill="#4c7029" opacity="0.0"/>
<g>
<path d="M62.8 94.4h12v9.4h-12z" fill="#4b6f28"/>
<path d="M66 95.4v-2.2a2.8 2.8 0 0 1 5.6 0v2.2" stroke="#4b6f28" stroke-width="3.2" fill="none"/>
<path d="M66 95.4v-2.2a2.8 2.8 0 0 1 5.6 0v2.2" stroke="#2aa9e6" stroke-width="1.4" fill="none"/>
<rect x="63.8" y="95.3" width="10.1" height="7.6" fill="#2aa9e6"/>
<path d="M68 98.2h1.6l-0.8 2.2z" fill="#4b6f28"/>
</g>
<!-- prg -->
<g filter="url(#sh)">
<rect x="48.6" y="132" width="25.4" height="25.8" fill="#2ea7e3"/>
</g>
<text x="61" y="149.3" text-anchor="middle" font-family="Liberation Sans" font-weight="bold" font-size="13.6" fill="#fff">Prg</text>
<!-- audacity -->
<g filter="url(#sh)">
<rect x="50.8" y="187.8" width="21.3" height="21.1" rx="3" fill="url(#gau)"/>
<rect x="58.2" y="190.3" width="6" height="11.7" rx="3" fill="#fff"/>
<path d="M56.6 195v3.4a4.6 4.6 0 0 0 9.8 0V195" stroke="#fff" stroke-width="0.8" fill="none"/>
<path d="M61.4 202.8v3" stroke="#fff" stroke-width="1.3"/>
</g>
<!-- gfxterm -->
<g filter="url(#sh)">
<rect x="187.2" y="132.1" width="25.4" height="15.7" rx="0.6" fill="#e6e6e6"/>
<rect x="188.4" y="133.9" width="23.3" height="12.7" fill="url(#gscr)"/>
<path d="M199 133.9h3l-4 12.7h-3z M203 133.9h2.4l-4 12.7h-2.4z" fill="#6a95d6" opacity="0.35"/>
<path d="M196.6 148h7l1.2 3.8h-9.4z" fill="#e8e8e8"/>
<rect x="188.7" y="154" width="22.5" height="2.9" rx="0.8" fill="#ececec"/>
<path d="M206 151.6h6" stroke="#cfcfcf" stroke-width="0.6"/>
</g>
</svg>
<div class="dl" style="left:16px;top:53.8px">4K Video<br>Downloader+</div>
<div class="dl" style="left:86.5px;top:53.8px">HandBrake</div>
<div class="dl" style="left:155px;top:53.8px">Gwenview</div>
<div class="dl" style="left:224.6px;top:53.8px">ETCHER</div>
<div class="dl" style="left:16px;top:106.9px">STM32TrustedPac<br>kageCreator</div>
<div class="dl" style="left:16px;top:159.3px">STM32CubeProgr<br>ammer</div>
<div class="dl" style="left:16px;top:212.8px">AUDACITY</div>
<div class="dl" style="left:155px;top:159.8px">GFXterm</div>

<div id="win"><div id="wi" style="position:absolute;left:0.6px;top:0;width:660px;height:354px">
  <div class="t b" style="left:304px;top:3.5px;color:#363636;font-size:7.4px">mmedit5_20.4</div>
  <svg style="position:absolute;left:614px;top:2px" width="44" height="14" viewBox="0 0 44 14">
    <rect x="4.9" y="7.6" width="4" height="1" fill="#666"/>
    <rect x="19.2" y="4.3" width="4.6" height="4.6" fill="none" stroke="#444" stroke-width="0.9"/>
    <circle cx="36.6" cy="6.6" r="4.9" fill="#2a9be0"/>
    <path d="M35 5l3.2 3.2M38.2 5l-3.2 3.2" stroke="#fff" stroke-width="1.15" stroke-linecap="round"/>
  </svg>
  <div class="t" style="left:3.6px;top:19.8px">File</div>
  <div class="t" style="left:23.5px;top:19.8px">Edit</div>
  <div class="t" style="left:44.2px;top:19.8px">View</div>
  <div class="t" style="left:68.2px;top:19.8px">Go</div>
  <div class="t" style="left:85.9px;top:19.8px">Bookmarks</div>
  <div class="t" style="left:130.5px;top:19.8px">Help</div>
  <!-- nav arrows -->
  <svg style="position:absolute;left:0;top:35px" width="66" height="17" viewBox="0 0 66 17">
    <path d="M13 4.6L9.6 8.2 13 11.8" stroke="#333" stroke-width="1.3" fill="none"/>
    <path d="M30.3 4.6L33.7 8.2 30.3 11.8" stroke="#a8a8a8" stroke-width="1.1" fill="none"/>
    <path d="M49.3 10.2L52.7 6.8 56.1 10.2" stroke="#333" stroke-width="1.3" fill="none"/>
  </svg>
  <!-- path bar -->
  <div style="position:absolute;left:66.6px;top:34.4px;width:292.8px;height:17.6px;background:#f8f8f8;border:1px solid #d6d6d6;border-radius:2px;overflow:hidden">
    <div class="pseg" style="left:0;width:13.7px"><svg style="position:absolute;left:4.6px;top:5px" width="5" height="7" viewBox="0 0 5 7"><path d="M4 0.3L0.6 3.5 4 6.7z" fill="#222"/></svg></div>
    <div class="pseg" style="left:13.7px;width:51.3px">
      <svg style="position:absolute;left:5.5px;top:4.2px" width="9" height="9" viewBox="0 0 9 9"><path d="M4.5 0.3L0.3 4.3h1.2v4.2h6V4.3h1.2z" fill="#1e1e1e"/><rect x="6.2" y="0.8" width="1.2" height="2.2" fill="#1e1e1e"/></svg>
      <div class="t" style="left:17.7px;top:3.4px">graeme</div>
    </div>
    <div class="pseg" style="left:65px;width:59px"><div class="t" style="left:10.4px;top:3.4px;font-size:6.6px">PROGRAMS</div></div>
    <div class="pseg" style="left:124px;width:46.1px"><div class="t" style="left:8.4px;top:3.4px;font-size:7px">MMEDIT</div></div>
    <div class="pseg" style="left:170.1px;width:43.6px"><div class="t" style="left:8.8px;top:3.4px">MMEdit</div></div>
    <div class="pseg" style="left:213.7px;width:65.4px;background:#c5c5c5;border-right:1px solid #bdbdbd"><div class="t b" style="left:8.3px;top:3.4px;color:#232323">mmedit5_20.4</div></div>
    <div class="pseg" style="left:279.1px;width:13.7px;border-right:none"><svg style="position:absolute;left:4.6px;top:5px" width="5" height="7" viewBox="0 0 5 7"><path d="M1 0.3L4.4 3.5 1 6.7z" fill="#7a7a7a"/></svg></div>
  </div>
  <!-- right toolbar -->
  <div style="position:absolute;left:617px;top:34px;width:19px;height:18px;background:#c8c8c8;border:1px solid #bcbcbc;border-radius:2px"></div>
  <svg style="position:absolute;left:556px;top:35px" width="104" height="17" viewBox="0 0 104 17">
    <!-- return arrow -->
    <path d="M64.8 2.2" />
    <path d="M9.3 4.6h2v5.6H6" stroke="#111" stroke-width="1.05" fill="none"/>
    <path d="M6.6 8.8L5.1 10.2 6.6 11.6" stroke="#111" stroke-width="1" fill="none"/>
    <!-- search -->
    <circle cx="28.3" cy="6.6" r="2.9" stroke="#111" stroke-width="1.15" fill="none"/>
    <path d="M30.4 8.7l2.4 2.4" stroke="#111" stroke-width="1.3"/>
    <!-- grid -->
    <rect x="46" y="4" width="3.3" height="3.3" rx="0.5" fill="#111"/><rect x="50.6" y="4" width="3.3" height="3.3" rx="0.5" fill="#111"/>
    <rect x="46" y="8.6" width="3.3" height="3.3" rx="0.5" fill="#111"/><rect x="50.6" y="8.6" width="3.3" height="3.3" rx="0.5" fill="#111"/>
    <!-- list -->
    <rect x="67.2" y="4.6" width="1.6" height="1.6" fill="#111"/><rect x="69.8" y="4.8" width="4.6" height="1.1" fill="#222"/>
    <rect x="67.2" y="7.2" width="1.6" height="1.6" fill="#111"/><rect x="69.8" y="7.4" width="4.6" height="1.1" fill="#222"/>
    <rect x="67.2" y="9.8" width="1.6" height="1.6" fill="#111"/><rect x="69.8" y="10" width="4.6" height="1.1" fill="#666"/>
    <!-- compact -->
    <g fill="#222"><rect x="88" y="5" width="1.6" height="1"/><rect x="92.4" y="5" width="1.6" height="1"/><rect x="88" y="7.5" width="1.6" height="1"/><rect x="92.4" y="7.5" width="1.6" height="1"/><rect x="88" y="10" width="1.6" height="1"/><rect x="92.4" y="10" width="1.6" height="1"/></g>
  </svg>
  <!-- sidebar -->
  <div id="side">
<svg class="tri" style="top:4.1px" width="6" height="5" viewBox="0 0 6 5"><path d="M0.3 0.6h5.4L3 4.2z" fill="#8a8a8a"/></svg><div class="sh" style="top:1.8px">My Computer</div>
<svg class="si" style="top:16.2px" viewBox="0 0 10 10"><path d="M5 1L1 4.8h1.1v4h5.8v-4H9z" fill="#111"/><rect x="6.6" y="1.4" width="1.1" height="2" fill="#111"/></svg><div class="st" style="top:17.2px">Home</div>
<svg class="si" style="top:30.5px" viewBox="0 0 10 10"><rect x="1" y="2" width="8" height="5.6" fill="#111"/><rect x="1" y="8" width="8" height="0.9" fill="#111"/></svg><div class="st" style="top:31.5px">Desktop</div>
<svg class="si" style="top:44.8px" viewBox="0 0 10 10"><path d="M2 1h4l2.4 2.4V9H2z" fill="#111"/><path d="M6 1v2.4h2.4" fill="#666"/></svg><div class="st" style="top:45.8px">Documents</div>
<svg class="si" style="top:59.1px" viewBox="0 0 10 10"><path d="M4 7.4V2h5v5" stroke="#111" stroke-width="1" fill="none"/><circle cx="2.8" cy="7.6" r="1.4" fill="#111"/><circle cx="7.8" cy="7.4" r="1.4" fill="#111"/></svg><div class="st" style="top:60.1px">Music</div>
<svg class="si" style="top:73.4px" viewBox="0 0 10 10"><rect x="0.8" y="2.6" width="8.4" height="6" rx="0.8" fill="#111"/><rect x="3.2" y="1.6" width="3.6" height="1.4" fill="#111"/><circle cx="5" cy="5.6" r="1.7" fill="#f1f1f1"/></svg><div class="st" style="top:74.4px">Pictures</div>
<svg class="si" style="top:87.9px" viewBox="0 0 10 10"><rect x="1.6" y="1" width="6.8" height="8" fill="#111"/><rect x="3.4" y="2" width="3.2" height="2.6" fill="#f1f1f1"/><rect x="3.4" y="5.4" width="3.2" height="2.6" fill="#f1f1f1"/></svg><div class="st" style="top:88.9px">Videos</div>
<svg class="si" style="top:102.3px" viewBox="0 0 10 10"><rect x="4.4" y="1" width="1.2" height="5" fill="#111"/><path d="M2 5h6L5 8.4z" fill="#111"/><rect x="1.6" y="8.6" width="6.8" height="0.8" fill="#111"/></svg><div class="st" style="top:103.3px">Downloads</div>
<svg class="si" style="top:116.7px" viewBox="0 0 10 10"><circle cx="5" cy="5" r="3.6" stroke="#111" stroke-width="1" fill="none"/><path d="M5 2.8V5h1.8" stroke="#111" stroke-width=".9" fill="none"/></svg><div class="st" style="top:117.7px">Recent</div>
<svg class="si" style="top:131.2px" viewBox="0 0 10 10"><rect x="1.2" y="1.2" width="7.6" height="7.6" rx="0.8" stroke="#111" stroke-width="1" fill="none"/><circle cx="5" cy="5" r="1.8" stroke="#111" stroke-width="1" fill="none"/><rect x="2.6" y="6.8" width="4.8" height="1" fill="#111"/></svg><div class="st" style="top:132.2px">File System</div>
<svg class="si" style="top:145.3px" viewBox="0 0 10 10"><rect x="1.4" y="1.4" width="7.2" height="1.2" fill="#111"/><rect x="4" y="0.6" width="2" height="1" fill="#111"/><path d="M2.2 3h5.6l-.5 6H2.7z" fill="#111"/></svg><div class="st" style="top:146.3px">Trash</div>
<svg class="tri" style="top:162.7px" width="6" height="5" viewBox="0 0 6 5"><path d="M0.3 0.6h5.4L3 4.2z" fill="#8a8a8a"/></svg><div class="sh" style="top:160.4px">Devices</div>
<svg class="si" style="top:174.7px" viewBox="0 0 10 10"><circle cx="5" cy="5" r="3.8" stroke="#111" stroke-width="1" fill="none"/><circle cx="5" cy="5" r="1.5" fill="#111"/></svg><div class="st" style="top:175.7px">Audio Disc</div>
<svg class="tri" style="top:191.4px" width="6" height="5" viewBox="0 0 6 5"><path d="M0.3 0.6h5.4L3 4.2z" fill="#8a8a8a"/></svg><div class="sh" style="top:189.1px">Network</div>
<svg class="si" style="top:203.4px" viewBox="0 0 10 10"><circle cx="5" cy="5" r="4" fill="#111"/><path d="M3 2.2c1 .8 1.5 1.6 .8 2.4-.8.6-.2 1.6.4 2.2M6 1.8c-.2 .8.4 1.2 1.2 1.2.6 .4.6 1.2 .3 1.8" stroke="#f1f1f1" stroke-width=".9" fill="none"/></svg><div class="st" style="top:204.4px">Network</div>
<div style="position:absolute;left:26.2px;top:139.6px;width:37px;height:1px;background:#1f9bdd"></div>
<div style="position:absolute;left:26.2px;top:182.9px;width:37px;height:1px;background:#9a9a9a"></div>
<svg style="position:absolute;left:73.6px;top:176.6px" width="8" height="8" viewBox="0 0 8 8"><path d="M4 0.6L7.4 4.4H0.6z" fill="#111"/><rect x="0.6" y="5.6" width="6.8" height="1.4" fill="#111"/></svg>
  </div>
  <div id="list">
    <div id="hdr">
      <div class="ht" style="left:3.8px">Name</div>
      <svg style="position:absolute;left:322px;top:5px" width="7" height="5" viewBox="0 0 7 5"><path d="M0.3 0.5h6.2L3.4 4.3z" fill="#666"/></svg>
      <div class="hs" style="left:331.8px"></div>
      <div class="ht" style="left:336px">Size</div>
      <div class="hs" style="left:384.5px"></div>
      <div class="ht" style="left:389.5px">Type</div>
      <div class="hs" style="left:432.3px"></div>
      <div class="ht" style="left:437px">Date Modified</div>
    </div>
<div class="row" style="top:15.00px"><svg class="exp" width="5" height="6" viewBox="0 0 5 6"><path d="M0.5 0.3L4.2 3 0.5 5.7z" fill="#8a8a8a"/></svg><div class="ic ic-folder"><svg class="fi" width="16" height="16" viewBox="0 0 16 16"><path d="M0.2 1.2h6l1.2 1.4h8.4v12.2H0.2z" fill="#f4bf66"/><rect x="0.2" y="3.2" width="15.6" height="11.6" fill="#f7c772"/><rect x="0.8" y="3.4" width="14.4" height="0.7" fill="#fde9c0"/></svg></div><div class="ft fn" style="letter-spacing:-0.067px">data</div><div class="ft fs">29 items</div><div class="ft fty" style="letter-spacing:0.35px">Folder</div><div class="ft mono fd">Fri 17 Oct 2025 14:20:22</div></div>
<div class="row" style="top:33.10px"><div class="ic ic-text"><svg class="fi" width="16" height="18" viewBox="0 0 16 18"><rect x="2.1" y="0.8" width="13" height="16.2" rx="1" fill="#fbfbfb" stroke="#cfcfcf" stroke-width="0.8"/><g fill="#c9c9c9"><rect x="3.8" y="3.2" width="8" height="0.9"/><rect x="3.8" y="4.8" width="9" height="0.9"/><rect x="3.8" y="6.4" width="6" height="0.9"/><rect x="3.8" y="8.8" width="9" height="0.9"/><rect x="3.8" y="10.4" width="8" height="0.9"/><rect x="3.8" y="12.8" width="9" height="0.9"/><rect x="3.8" y="14.2" width="7" height="0.9"/></g></svg></div><div class="ft fn" style="letter-spacing:0.5px">install.txt</div><div class="ft fs">584 bytes</div><div class="ft fty" style="letter-spacing:0.7px">Text</div><div class="ft mono fd">Tue 22 Apr 2025 22:43:56</div></div>
<div class="row" style="top:51.20px"><div class="ic ic-gear"><svg class="fi" width="16" height="16" viewBox="0 0 16 16"><rect x="0.5" y="0.5" width="15" height="15" rx="1.5" fill="#fcfcfc" stroke="#d2d2d2" stroke-width="0.8"/><g transform="translate(7.9 7.7)" fill="#3b4858"><circle r="2.9"/><rect x="-0.9" y="-4" width="1.8" height="8"/><rect x="-0.9" y="-4" width="1.8" height="8" transform="rotate(45)"/><rect x="-0.9" y="-4" width="1.8" height="8" transform="rotate(90)"/><rect x="-0.9" y="-4" width="1.8" height="8" transform="rotate(135)"/><circle r="1.1" fill="#fcfcfc"/></g></svg></div><div class="ft fn" style="letter-spacing:-0.067px">MMCC</div><div class="ft fs">1.4 MB</div><div class="ft fty" style="letter-spacing:0.1px">Program</div><div class="ft mono fd">Tue 26 Aug 2025 17:09:14</div></div>
<div class="row" style="top:69.30px"><div class="ic ic-gear"><svg class="fi" width="16" height="16" viewBox="0 0 16 16"><rect x="0.5" y="0.5" width="15" height="15" rx="1.5" fill="#fcfcfc" stroke="#d2d2d2" stroke-width="0.8"/><g transform="translate(7.9 7.7)" fill="#3b4858"><circle r="2.9"/><rect x="-0.9" y="-4" width="1.8" height="8"/><rect x="-0.9" y="-4" width="1.8" height="8" transform="rotate(45)"/><rect x="-0.9" y="-4" width="1.8" height="8" transform="rotate(90)"/><rect x="-0.9" y="-4" width="1.8" height="8" transform="rotate(135)"/><circle r="1.1" fill="#fcfcfc"/></g></svg></div><div class="ft fn" style="letter-spacing:0.036px">MMCC.desktop</div><div class="ft fs">171 bytes</div><div class="ft fty" style="letter-spacing:0.7px">Text</div><div class="ft mono fd">Sun 14 Aug 2022 10:57:46</div></div>
<div class="row" style="top:87.40px"><div class="ic ic-mmcc"><svg class="fi" width="18" height="17" viewBox="0 0 18 17"><rect x="0" y="0" width="17.5" height="16.8" fill="#050505"/><rect x="4.2" y="0.5" width="3.2" height="10" fill="#22c4ec"/><path d="M1.3 9.5h9l-4.5 6.2z" fill="#33d6a8"/><g fill="#3a3a3a"><rect x="12" y="2" width="4" height="2.6"/><rect x="12" y="7" width="4" height="2.6"/><rect x="12" y="12" width="4" height="2.6"/></g></svg></div><div class="ft fn" style="letter-spacing:-0.071px">MMCC.ico</div><div class="ft fs">4.2 kB</div><div class="ft fty" style="letter-spacing:0.25px">Image</div><div class="ft mono fd">Fri 22 Feb 2019 19:19:58</div></div>
<div class="row" style="top:105.50px"><div class="ic ic-mmcc"><svg class="fi" width="18" height="17" viewBox="0 0 18 17"><rect x="0" y="0" width="17.5" height="16.8" fill="#050505"/><rect x="4.2" y="0.5" width="3.2" height="10" fill="#22c4ec"/><path d="M1.3 9.5h9l-4.5 6.2z" fill="#33d6a8"/><g fill="#3a3a3a"><rect x="12" y="2" width="4" height="2.6"/><rect x="12" y="7" width="4" height="2.6"/><rect x="12" y="12" width="4" height="2.6"/></g></svg></div><div class="ft fn" style="letter-spacing:0.086px">MMCC.png</div><div class="ft fs">1.1 kB</div><div class="ft fty" style="letter-spacing:0.25px">Image</div><div class="ft mono fd">Thu 01 Sep 2022 15:58:31</div></div>
<div class="row" style="top:123.60px"><div class="ic ic-mme"><svg class="fi" width="18" height="18" viewBox="0 0 18 18"><rect x="1.4" y="0.4" width="8.8" height="7.6" fill="#d0d0d0" stroke="#505050" stroke-width="0.7"/><rect x="2.4" y="1.3" width="6.8" height="5.8" fill="#fff"/><path d="M3.4 6.6V2.2h1.1l1.3 2 1.3-2h1.1v4.4H7.3V4L5.8 6 4.3 4v2.6z" fill="#1f2ee0"/><rect x="0.6" y="8.4" width="10.2" height="1.5" fill="#2f3fd0"/><rect x="0.6" y="9.9" width="10.2" height="0.6" fill="#333"/><path d="M4.6 16.6l2.6-4.6h9.2l-2.8 4.6z" fill="#c8cccc"/><path d="M6.2 15.4h7.6M7 14h7.6M7.8 12.8h7.4" stroke="#808888" stroke-width=".45" stroke-dasharray=".8 .5"/></svg></div><div class="ft fn" style="letter-spacing:0.267px">mme.ico</div><div class="ft fs">766 bytes</div><div class="ft fty" style="letter-spacing:0.25px">Image</div><div class="ft mono fd">Mon 30 Sep 2013 15:04:42</div></div>
<div class="row" style="top:141.70px"><div class="ic ic-mme2"><svg class="fi" width="18" height="18" viewBox="0 0 18 18"><rect x="1.4" y="0.4" width="8.8" height="7.6" fill="#d0d0d0" stroke="#505050" stroke-width="0.7"/><rect x="2.4" y="1.3" width="6.8" height="5.8" fill="#fff"/><path d="M3.4 6.6V2.2h1.1l1.3 2 1.3-2h1.1v4.4H7.3V4L5.8 6 4.3 4v2.6z" fill="#1f2ee0"/><rect x="0.6" y="8.4" width="10.2" height="1.5" fill="#2f3fd0"/><rect x="0.6" y="9.9" width="10.2" height="0.6" fill="#333"/><path d="M4.6 16.6l2.6-4.6h9.2l-2.8 4.6z" fill="#c8cccc"/><path d="M6.2 15.4h7.6M7 14h7.6M7.8 12.8h7.4" stroke="#808888" stroke-width=".45" stroke-dasharray=".8 .5"/><rect x="14.8" y="0.6" width="0.6" height="16" fill="#8a8a8a"/></svg></div><div class="ft fn" style="letter-spacing:0.45px">mme.png</div><div class="ft fs">485 bytes</div><div class="ft fty" style="letter-spacing:0.25px">Image</div><div class="ft mono fd">Thu 01 Sep 2022 09:50:44</div></div>
<div class="row" style="top:159.80px"><div class="ic ic-text"><svg class="fi" width="16" height="18" viewBox="0 0 16 18"><rect x="2.1" y="0.8" width="13" height="16.2" rx="1" fill="#fbfbfb" stroke="#cfcfcf" stroke-width="0.8"/><g fill="#c9c9c9"><rect x="3.8" y="3.2" width="8" height="0.9"/><rect x="3.8" y="4.8" width="9" height="0.9"/><rect x="3.8" y="6.4" width="6" height="0.9"/><rect x="3.8" y="8.8" width="9" height="0.9"/><rect x="3.8" y="10.4" width="8" height="0.9"/><rect x="3.8" y="12.8" width="9" height="0.9"/><rect x="3.8" y="14.2" width="7" height="0.9"/></g></svg></div><div class="ft fn" style="letter-spacing:0.4px">MMEdit</div><div class="ft fs">176 bytes</div><div class="ft fty" style="letter-spacing:0.7px">Text</div><div class="ft mono fd">Sun 14 Aug 2022 10:56:24</div></div>
<div class="row sel" style="top:177.90px"><div class="ic ic-gear"><svg class="fi" width="16" height="16" viewBox="0 0 16 16"><rect x="0.5" y="0.5" width="15" height="15" rx="1.5" fill="#fcfcfc" stroke="#e0e0e0" stroke-width="0.8"/><g transform="translate(7.9 7.7)" fill="#3b4858"><circle r="2.9"/><rect x="-0.9" y="-4" width="1.8" height="8"/><rect x="-0.9" y="-4" width="1.8" height="8" transform="rotate(45)"/><rect x="-0.9" y="-4" width="1.8" height="8" transform="rotate(90)"/><rect x="-0.9" y="-4" width="1.8" height="8" transform="rotate(135)"/><circle r="1.1" fill="#fcfcfc"/></g></svg></div><div class="ft fn" style="letter-spacing:0.4px">MMEdit</div><div class="ft fs">3.3 MB</div><div class="ft fty" style="letter-spacing:0.1px">Program</div><div class="ft mono fd">Tue 26 Aug 2025 17:09:31</div></div>
<div class="row" style="top:196.00px"><div class="ic ic-gear"><svg class="fi" width="16" height="16" viewBox="0 0 16 16"><rect x="0.5" y="0.5" width="15" height="15" rx="1.5" fill="#fcfcfc" stroke="#d2d2d2" stroke-width="0.8"/><g transform="translate(7.9 7.7)" fill="#3b4858"><circle r="2.9"/><rect x="-0.9" y="-4" width="1.8" height="8"/><rect x="-0.9" y="-4" width="1.8" height="8" transform="rotate(45)"/><rect x="-0.9" y="-4" width="1.8" height="8" transform="rotate(90)"/><rect x="-0.9" y="-4" width="1.8" height="8" transform="rotate(135)"/><circle r="1.1" fill="#fcfcfc"/></g></svg></div><div class="ft fn" style="letter-spacing:0.125px">pico_drop.desktop</div><div class="ft fs">145 bytes</div><div class="ft fty" style="letter-spacing:0.7px">Text</div><div class="ft mono fd">Fri 14 Jul 2023 11:01:39</div></div>
<div class="row" style="top:214.10px"><div class="ic ic-text"><svg class="fi" width="16" height="18" viewBox="0 0 16 18"><rect x="2.1" y="0.8" width="13" height="16.2" rx="1" fill="#fbfbfb" stroke="#cfcfcf" stroke-width="0.8"/><g fill="#c9c9c9"><rect x="3.8" y="3.2" width="8" height="0.9"/><rect x="3.8" y="4.8" width="9" height="0.9"/><rect x="3.8" y="6.4" width="6" height="0.9"/><rect x="3.8" y="8.8" width="9" height="0.9"/><rect x="3.8" y="10.4" width="8" height="0.9"/><rect x="3.8" y="12.8" width="9" height="0.9"/><rect x="3.8" y="14.2" width="7" height="0.9"/></g></svg></div><div class="ft fn" style="letter-spacing:0.382px">portable.inf</div><div class="ft fs">57 bytes</div><div class="ft fty" style="letter-spacing:0.7px">Text</div><div class="ft mono fd">Tue 03 Sep 2013 11:59:48</div></div>
  </div>
  <div id="status">
    <div class="sbtn" style="left:2px;background:#cdcdcd;border-color:#c4c4c4"></div>
    <div class="sbtn" style="left:17.8px"></div>
    <div style="position:absolute;left:35.5px;top:1px;width:1px;height:13px;background:#e6e6e6"></div>
    <div class="sbtn" style="left:40.6px"></div>
    <svg style="position:absolute;left:0;top:-0.6px" width="60" height="15" viewBox="0 0 60 15">
      <path d="M5 4.9h2.3l0.7 0.8h2.8v4.3H5z" fill="#1e1e1e"/>
      <path d="M22.6 4.8v4.9h1.6M22.6 7.2h1.6" stroke="#2a2a2a" stroke-width="0.9" fill="none"/>
      <path d="M26.8 7a1.1 1.1 0 1 0 0 2.2" stroke="#2a2a2a" stroke-width="0.8" fill="none"/>
      <rect x="44.6" y="5.3" width="5.2" height="4.5" fill="none" stroke="#2a2a2a" stroke-width="0.9"/>
      <rect x="45.6" y="6.8" width="1.4" height="1.4" fill="#2a2a2a"/>
    </svg>
    <div class="t" style="left:250.6px;top:2.1px;color:#3a3a3a;font-size:6.96px">"MMEdit" selected (3.3 MB), Free space: 441.4 GB</div>
    <div style="position:absolute;left:606px;top:5.9px;width:50px;height:2.4px;border-radius:1.2px;background:#c9c9c9"></div>
    <div style="position:absolute;left:606px;top:5.9px;width:24px;height:2.4px;border-radius:1.2px;background:#1f9bdd"></div>
    <div style="position:absolute;left:625.9px;top:2.6px;width:9px;height:9px;border-radius:50%;background:#fcfcfc;border:1px solid #c8c8c8"></div>
  </div>
</div></div>
</body></html>
